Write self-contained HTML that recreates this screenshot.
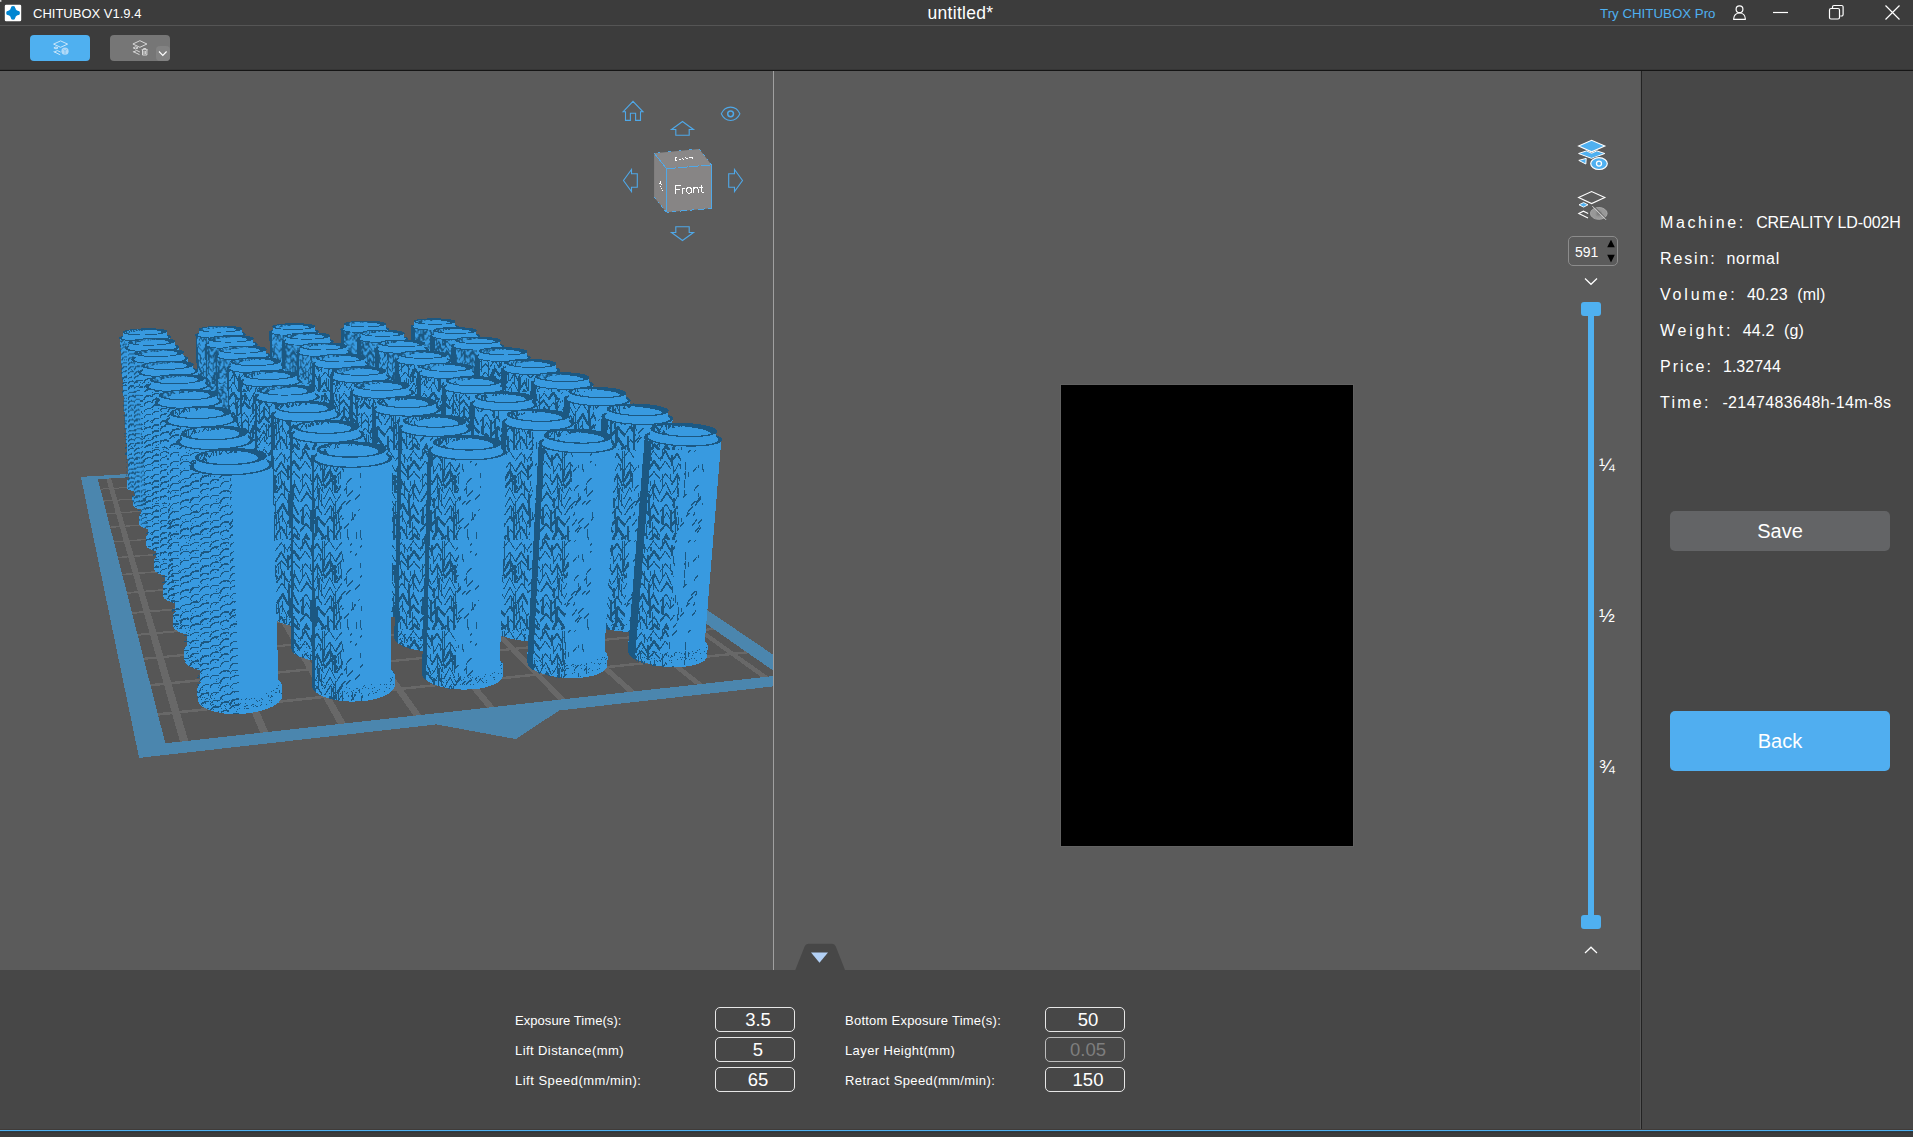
<!DOCTYPE html>
<html>
<head>
<meta charset="utf-8">
<title>CHITUBOX V1.9.4</title>
<style>
html,body{margin:0;padding:0;}
body{width:1913px;height:1137px;overflow:hidden;background:#5b5b5b;font-family:"Liberation Sans",sans-serif;color:#fff;position:relative;}
.abs{position:absolute;}
#titlebar{left:0;top:0;width:1913px;height:25px;background:#3c3c3c;}
#titleline{left:0;top:25px;width:1913px;height:1px;background:#555;}
#toolbar{left:0;top:26px;width:1913px;height:43px;background:#3c3c3c;}
#toolline{left:0;top:69px;width:1913px;height:2px;background:linear-gradient(#353535 0 50%,#151515 50% 100%);}
#apptitle{left:33px;top:6px;font-size:13px;line-height:15px;color:#fff;white-space:nowrap;}
#doctitle{left:860.5px;top:3px;width:200px;text-align:center;letter-spacing:0.3px;font-size:17.5px;line-height:21px;color:#fff;white-space:nowrap;}
#trypro{left:1600px;top:6px;font-size:13.3px;line-height:16px;color:#4fb0f0;white-space:nowrap;}
#btn1{left:30px;top:35px;width:60px;height:26px;border-radius:4px;background:#4fb0f0;}
#btn2{left:110px;top:35px;width:60px;height:26px;border-radius:4px;background:#767676;}
#btn2b{left:155.5px;top:46px;width:14.5px;height:15px;border-radius:4px;background:#828282;}
#view3d{left:0;top:71px;width:773px;height:899px;overflow:hidden;background:#5b5b5b;}
#divider{left:773px;top:71px;width:1px;height:899px;background:#a0a0a0;}
#slice{left:1061px;top:385px;width:292px;height:461px;background:#000;box-shadow:0 0 0 1px #626262;}
#rightpanel{left:1642px;top:71px;width:271px;height:1066px;background:#474747;}
#rightline{left:1640px;top:71px;width:2px;height:1059px;background:linear-gradient(90deg,#575757 0 50%,#232323 50% 100%);}
#bottompanel{left:0;top:970px;width:1640px;height:159px;background:#474747;}
#bottomblue{left:0;top:1129px;width:1913px;height:4px;background:linear-gradient(#403b38 0 25%,#4fb0f0 25% 50%,#2b3c47 50% 75%,#373635 75% 100%);}
#bottomdark{left:0;top:1133px;width:1913px;height:4px;background:#3c3c3c;}
.lbl{font-size:13px;line-height:16px;color:#fff;white-space:nowrap;}
.inp{width:78px;height:23px;border:1px solid #e6e6e6;border-radius:5px;font-size:18.5px;line-height:23px;text-align:center;color:#fff;}
.inp span{position:relative;left:3px;}
.info{left:1660px;font-size:16px;line-height:20px;color:#fff;white-space:nowrap;}
.info b{font-weight:normal;letter-spacing:1.7px;}
.frac{left:1599px;font-size:19px;line-height:20px;color:#fff;}
#save{left:1670px;top:511px;width:220px;height:40px;border-radius:5px;background:#636466;font-size:20px;line-height:40px;text-align:center;}
#back{left:1670px;top:711px;width:220px;height:60px;border-radius:5px;background:#50aef0;font-size:20px;line-height:60px;text-align:center;}
#spin{left:1568px;top:236px;width:48px;height:28px;border:1px solid #8c8c8c;border-radius:5px;}
#spin span{position:absolute;left:6px;top:7px;font-size:14px;line-height:16px;color:#fff;}
#track{left:1588px;top:309px;width:6px;height:613px;background:#4fb0f0;}
.handle{left:1581px;width:20px;height:14px;border-radius:3px;background:#4fb0f0;}
</style>
</head>
<body>
<div class="abs" id="view3d">
<svg class="abs" style="left:0;top:0" width="773" height="899" viewBox="0 71 773 899" shape-rendering="crispEdges">
<defs>
<pattern id="ma" width="60" height="90" patternUnits="userSpaceOnUse"><g fill="none" stroke="#1c5882"><path d="M-0.7 11.4l6.0 -10.8l5.8 10.9" stroke-width="1.8"/><path d="M-0.8 20.2l6.0 -9.1l5.9 8.3" stroke-width="1.0"/><path d="M-0.4 32.1l6.0 -8.3l6.5 8.0" stroke-width="1.0"/><path d="M-0.3 43.2l6.0 -10.6l5.8 12.1" stroke-width="1.0"/><path d="M0.8 51.9l6.0 -9.2l6.6 8.7" stroke-width="1.8"/><path d="M0.2 61.7l6.0 -7.7l5.3 9.3" stroke-width="1.0"/><path d="M0.8 73.1l6.0 -10.4l5.5 10.7" stroke-width="1.0"/><path d="M0.1 81.4l6.0 -7.5l6.9 8.3" stroke-width="1.8"/><path d="M0.4 95.4l6.0 -9.9l5.7 10.9" stroke-width="2.6"/><path d="M11.1 12.4l6.0 -8.6l5.2 8.5" stroke-width="1.8"/><path d="M12.8 24.3l6.0 -10.4l6.4 11.7" stroke-width="1.0"/><path d="M11.5 35.1l6.0 -10.6l5.1 11.4" stroke-width="1.8"/><path d="M12.4 44.2l6.0 -10.0l5.2 9.2" stroke-width="1.0"/><path d="M12.0 55.7l6.0 -10.5l5.4 12.0" stroke-width="1.0"/><path d="M11.0 65.1l6.0 -8.3l5.2 7.9" stroke-width="1.3"/><path d="M11.8 75.2l6.0 -7.8l6.9 8.0" stroke-width="2.6"/><path d="M12.3 89.9l6.0 -10.9l6.9 10.0" stroke-width="2.6"/><path d="M12.7 99.4l6.0 -10.2l5.1 9.8" stroke-width="1.0"/><path d="M23.2 8.2l6.0 -7.8l5.5 8.9" stroke-width="1.0"/><path d="M23.9 21.2l6.0 -9.2l5.7 9.5" stroke-width="1.0"/><path d="M23.8 31.4l6.0 -10.4l6.7 11.9" stroke-width="2.6"/><path d="M25.0 37.5l6.0 -8.1l6.7 9.6" stroke-width="2.6"/><path d="M23.8 48.9l6.0 -11.0l5.5 10.8" stroke-width="1.0"/><path d="M24.1 58.4l6.0 -11.0l5.5 10.0" stroke-width="1.0"/><path d="M24.5 65.4l6.0 -9.6l5.0 8.8" stroke-width="1.3"/><path d="M23.9 76.4l6.0 -9.7l6.5 9.2" stroke-width="1.3"/><path d="M24.7 89.4l6.0 -9.8l6.7 10.4" stroke-width="1.0"/><path d="M23.0 98.1l6.0 -9.7l5.6 9.9" stroke-width="1.0"/><path d="M35.3 10.8l6.0 -7.9l6.7 8.5" stroke-width="1.0"/><path d="M35.3 21.8l6.0 -9.5l6.2 10.3" stroke-width="1.8"/><path d="M35.2 28.3l6.0 -7.5l6.2 6.6" stroke-width="1.3"/><path d="M36.7 42.7l6.0 -9.8l5.2 9.0" stroke-width="1.8"/><path d="M36.0 52.3l6.0 -9.3l6.4 9.1" stroke-width="1.0"/><path d="M36.9 63.7l6.0 -9.3l5.3 10.5" stroke-width="2.6"/><path d="M35.7 76.1l6.0 -10.8l6.1 11.9" stroke-width="1.0"/><path d="M35.2 87.3l6.0 -10.4l6.8 11.7" stroke-width="1.8"/><path d="M36.5 97.5l6.0 -7.9l6.9 7.6" stroke-width="1.3"/><path d="M47.3 10.1l6.0 -9.2l6.3 8.3" stroke-width="1.0"/><path d="M48.0 20.2l6.0 -8.9l6.9 9.9" stroke-width="2.6"/><path d="M48.1 28.9l6.0 -7.1l6.9 8.4" stroke-width="1.3"/><path d="M48.4 44.0l6.0 -10.7l5.9 11.8" stroke-width="1.0"/><path d="M47.2 52.4l6.0 -10.5l5.6 10.4" stroke-width="1.3"/><path d="M47.4 65.0l6.0 -10.7l5.2 10.8" stroke-width="1.8"/><path d="M47.4 73.7l6.0 -7.6l5.8 6.9" stroke-width="2.6"/><path d="M48.3 85.2l6.0 -8.1l5.9 9.3" stroke-width="1.3"/><path d="M48.5 92.8l6.0 -7.6l6.7 6.8" stroke-width="2.6"/><path d="M22.5 0.7v12.9" stroke-width="1"/><path d="M24.5 14.0v11.8" stroke-width="1"/><path d="M17.5 22.8v21.2" stroke-width="1"/><path d="M57.5 81.9v11.1" stroke-width="1"/><path d="M1.5 65.5v8.3" stroke-width="2"/><path d="M11.5 4.7v11.5" stroke-width="2"/><path d="M22.5 10.8v18.2" stroke-width="1"/><path d="M23.5 19.2v15.9" stroke-width="1"/><path d="M25.5 85.4v12.4" stroke-width="1"/><path d="M2.5 23.8v14.7" stroke-width="1"/><path d="M50.5 6.7v4.7" stroke-width="2"/><path d="M16.5 69.8v12.2" stroke-width="2"/><path d="M46.5 75.7v13.6" stroke-width="1"/><path d="M20.5 14.2v6.3" stroke-width="1"/><path d="M21.5 44.4v11.2" stroke-width="1"/><path d="M15.5 68.8v17.4" stroke-width="2"/><path d="M13.5 15.9v8.4" stroke-width="1"/><path d="M39.5 71.4v9.0" stroke-width="1"/><path d="M14.5 84.9v20.9" stroke-width="1"/><path d="M44.5 4.1v8.9" stroke-width="1"/><path d="M44.5 30.9v16.8" stroke-width="1"/><path d="M32.5 25.9v15.0" stroke-width="1"/><path d="M23.5 27.8v8.2" stroke-width="1"/><path d="M2.5 0.4v8.8" stroke-width="1"/><path d="M34.5 64.7v21.7" stroke-width="1"/><path d="M52.5 71.6v15.3" stroke-width="1"/><path d="M34.5 25.0v17.9" stroke-width="2"/><path d="M43.5 78.5v4.8" stroke-width="2"/><path d="M40.5 81.9v7.3" stroke-width="1"/><path d="M48.5 44.2v15.8" stroke-width="2"/><path d="M13.5 47.7v10.1" stroke-width="2"/><path d="M9.5 88.9v13.1" stroke-width="1"/><path d="M21.5 87.2v7.2" stroke-width="2"/><path d="M27.5 75.6v18.2" stroke-width="2"/><path d="M38.5 61.3v12.1" stroke-width="1"/><path d="M18.5 38.1v12.1" stroke-width="2"/><path d="M38.5 25.9v7.6" stroke-width="1"/><path d="M31.5 57.3v13.5" stroke-width="1"/><path d="M30.5 12.7v18.8" stroke-width="1"/><path d="M24.5 0.8v21.8" stroke-width="1"/><path d="M49.5 57.5v20.3" stroke-width="2"/><path d="M36.5 86.2v6.6" stroke-width="1"/><path d="M53.5 42.6v7.1" stroke-width="1"/><path d="M18.5 47.2v11.0" stroke-width="1"/><path d="M36.5 64.0v16.2" stroke-width="1"/><path d="M35.5 51.4v18.0" stroke-width="1"/><path d="M32.5 67.2v4.4" stroke-width="1"/><path d="M24.5 34.4v4.4" stroke-width="1"/><path d="M14.5 60.3v8.8" stroke-width="2"/><path d="M47.5 14.7v15.1" stroke-width="2"/><path d="M48.5 49.8v16.0" stroke-width="1"/><path d="M22.5 36.7v5.3" stroke-width="1"/><path d="M52.5 34.8v9.2" stroke-width="2"/><path d="M2.5 57.3v17.7" stroke-width="2"/><path d="M42.5 60.5v11.4" stroke-width="1"/><path d="M8.5 88.3v12.9" stroke-width="2"/><path d="M22.5 26.3v5.4" stroke-width="1"/><path d="M33.5 71.6v19.9" stroke-width="2"/><path d="M10.5 24.3v4.7" stroke-width="1"/><path d="M33.5 72.9v16.4" stroke-width="1"/><path d="M50.5 31.0v4.5" stroke-width="1"/><path d="M37.5 89.7v20.1" stroke-width="2"/><path d="M54.5 29.9v8.4" stroke-width="1"/><path d="M33.5 56.0v18.7" stroke-width="1"/><path d="M41.5 28.9v9.6" stroke-width="1"/><path d="M10.5 60.0v21.1" stroke-width="2"/><path d="M40.5 21.0v8.4" stroke-width="1"/></g></pattern>
<pattern id="mb" width="50" height="70" patternUnits="userSpaceOnUse" patternTransform="scale(0.8)"><g fill="none" stroke="#1c5882"><path d="M0.1 13.0l6.0 -10.6l5.7 9.8" stroke-width="1.2"/><path d="M-0.4 20.7l6.0 -7.9l6.4 7.5" stroke-width="3.1"/><path d="M-0.7 33.7l6.0 -8.0l5.9 8.6" stroke-width="1.2"/><path d="M0.6 42.6l6.0 -8.0l5.8 7.1" stroke-width="1.6"/><path d="M0.6 52.4l6.0 -7.4l6.4 8.4" stroke-width="1.2"/><path d="M-0.5 67.5l6.0 -10.1l5.2 11.4" stroke-width="2.2"/><path d="M-0.8 75.4l6.0 -7.9l6.6 8.0" stroke-width="2.2"/><path d="M11.9 12.0l6.0 -10.9l5.6 12.2" stroke-width="1.2"/><path d="M12.1 21.7l6.0 -10.6l5.3 12.1" stroke-width="1.6"/><path d="M12.4 31.4l6.0 -9.8l5.0 9.0" stroke-width="1.2"/><path d="M12.4 38.9l6.0 -9.1l5.9 10.6" stroke-width="1.6"/><path d="M12.6 51.3l6.0 -10.1l6.6 9.5" stroke-width="3.1"/><path d="M12.8 60.0l6.0 -10.0l5.9 11.6" stroke-width="1.2"/><path d="M11.7 69.3l6.0 -10.5l5.1 11.2" stroke-width="1.2"/><path d="M24.4 9.2l6.0 -7.8l5.7 7.6" stroke-width="1.2"/><path d="M23.2 18.0l6.0 -7.8l7.0 9.5" stroke-width="2.2"/><path d="M25.0 27.9l6.0 -8.1l5.4 7.2" stroke-width="1.2"/><path d="M24.1 38.6l6.0 -8.8l6.6 8.6" stroke-width="3.1"/><path d="M24.1 48.3l6.0 -9.2l5.7 11.0" stroke-width="1.2"/><path d="M23.8 59.1l6.0 -10.6l5.1 10.2" stroke-width="1.6"/><path d="M23.3 66.5l6.0 -9.7l5.2 8.7" stroke-width="1.2"/><path d="M24.4 78.9l6.0 -9.7l5.7 10.7" stroke-width="1.2"/><path d="M35.6 9.7l6.0 -9.2l5.6 9.0" stroke-width="3.1"/><path d="M35.6 21.7l6.0 -8.8l5.1 8.0" stroke-width="1.2"/><path d="M35.1 34.6l6.0 -8.8l6.1 8.4" stroke-width="2.2"/><path d="M36.2 45.0l6.0 -10.9l6.7 9.9" stroke-width="2.2"/><path d="M36.9 56.8l6.0 -10.1l6.0 11.5" stroke-width="1.6"/><path d="M35.5 67.6l6.0 -9.8l6.3 10.8" stroke-width="1.2"/><path d="M47.1 12.3l6.0 -9.1l5.9 11.0" stroke-width="1.6"/><path d="M47.4 19.7l6.0 -8.0l6.6 7.2" stroke-width="1.2"/><path d="M47.3 30.5l6.0 -9.6l6.8 11.0" stroke-width="1.2"/><path d="M47.1 41.4l6.0 -8.8l5.4 9.3" stroke-width="1.2"/><path d="M47.2 54.7l6.0 -10.5l6.1 9.6" stroke-width="3.1"/><path d="M48.2 67.3l6.0 -10.6l6.0 10.0" stroke-width="3.1"/><path d="M48.1 74.0l6.0 -8.8l6.7 9.6" stroke-width="1.2"/><path d="M17.5 28.2v6.4" stroke-width="1"/><path d="M7.5 20.2v13.6" stroke-width="1"/><path d="M19.5 20.2v7.0" stroke-width="1"/><path d="M41.5 39.1v6.7" stroke-width="2"/><path d="M48.5 49.6v15.4" stroke-width="2"/><path d="M2.5 16.8v11.0" stroke-width="1"/><path d="M30.5 17.0v11.3" stroke-width="2"/><path d="M10.5 34.7v12.8" stroke-width="1"/><path d="M17.5 53.0v17.6" stroke-width="1"/><path d="M21.5 54.4v8.0" stroke-width="2"/><path d="M16.5 2.3v20.1" stroke-width="1"/><path d="M16.5 41.5v15.9" stroke-width="2"/><path d="M43.5 43.2v17.9" stroke-width="1"/><path d="M39.5 65.4v8.7" stroke-width="1"/><path d="M29.5 47.0v5.6" stroke-width="2"/><path d="M1.5 26.0v19.4" stroke-width="1"/><path d="M24.5 3.0v5.0" stroke-width="1"/><path d="M24.5 8.8v21.8" stroke-width="1"/><path d="M46.5 13.0v16.4" stroke-width="2"/><path d="M46.5 30.7v10.6" stroke-width="2"/><path d="M13.5 47.9v9.1" stroke-width="1"/><path d="M8.5 53.1v13.3" stroke-width="1"/><path d="M19.5 64.4v11.6" stroke-width="2"/><path d="M2.5 3.8v5.9" stroke-width="2"/><path d="M0.5 52.7v12.8" stroke-width="1"/><path d="M40.5 26.1v9.2" stroke-width="1"/><path d="M30.5 17.0v6.5" stroke-width="1"/><path d="M47.5 4.5v5.8" stroke-width="1"/><path d="M6.5 69.8v5.1" stroke-width="2"/><path d="M29.5 19.0v10.2" stroke-width="1"/><path d="M10.5 53.3v14.0" stroke-width="1"/><path d="M48.5 59.7v16.9" stroke-width="2"/><path d="M49.5 67.1v17.3" stroke-width="1"/><path d="M44.5 3.8v17.3" stroke-width="2"/><path d="M6.5 0.9v8.6" stroke-width="2"/><path d="M10.5 37.0v14.1" stroke-width="1"/><path d="M33.5 39.7v19.8" stroke-width="1"/><path d="M35.5 39.4v16.4" stroke-width="1"/><path d="M8.5 3.6v7.4" stroke-width="1"/><path d="M7.5 42.4v12.7" stroke-width="1"/><path d="M11.5 9.8v6.9" stroke-width="1"/><path d="M30.5 55.5v7.1" stroke-width="1"/><path d="M36.5 17.6v16.0" stroke-width="1"/><path d="M20.5 2.6v8.8" stroke-width="2"/><path d="M10.5 69.6v19.5" stroke-width="1"/><path d="M15.5 44.7v7.6" stroke-width="1"/><path d="M49.5 64.8v10.0" stroke-width="2"/><path d="M24.5 22.3v14.3" stroke-width="1"/><path d="M18.5 36.1v11.6" stroke-width="1"/><path d="M42.5 64.2v16.8" stroke-width="1"/><path d="M24.5 7.6v11.8" stroke-width="1"/><path d="M16.5 14.8v12.9" stroke-width="2"/></g></pattern>
<pattern id="mc" width="40" height="60" patternUnits="userSpaceOnUse" patternTransform="scale(0.64)"><g fill="none" stroke="#1c5882"><path d="M0.1 9.0l6.0 -8.4l6.3 8.0" stroke-width="3.7"/><path d="M-0.9 19.3l6.0 -9.3l6.1 10.1" stroke-width="2.6"/><path d="M-0.2 30.6l6.0 -9.9l5.5 9.3" stroke-width="1.4"/><path d="M-0.1 42.1l6.0 -9.4l6.0 9.1" stroke-width="1.4"/><path d="M-0.2 52.3l6.0 -9.0l6.0 8.2" stroke-width="1.4"/><path d="M-0.6 62.9l6.0 -8.5l5.9 9.3" stroke-width="1.9"/><path d="M11.1 9.0l6.0 -8.5l5.5 8.3" stroke-width="1.4"/><path d="M12.3 17.9l6.0 -8.8l6.8 10.2" stroke-width="3.7"/><path d="M12.1 29.9l6.0 -9.6l6.7 11.5" stroke-width="2.6"/><path d="M12.5 39.5l6.0 -8.6l6.2 10.3" stroke-width="1.4"/><path d="M11.7 52.4l6.0 -10.3l5.1 9.7" stroke-width="3.7"/><path d="M12.6 60.6l6.0 -8.2l6.0 10.0" stroke-width="1.4"/><path d="M23.9 9.5l6.0 -7.9l6.3 7.5" stroke-width="1.4"/><path d="M24.1 21.1l6.0 -9.4l5.0 9.1" stroke-width="1.4"/><path d="M23.3 28.6l6.0 -7.5l5.8 7.4" stroke-width="1.4"/><path d="M23.9 42.7l6.0 -10.0l6.4 11.5" stroke-width="2.6"/><path d="M24.6 53.0l6.0 -8.9l6.7 9.2" stroke-width="1.4"/><path d="M24.9 64.4l6.0 -8.0l6.8 9.2" stroke-width="1.4"/><path d="M35.5 10.6l6.0 -7.6l5.8 7.1" stroke-width="2.6"/><path d="M36.9 23.0l6.0 -9.8l6.3 10.2" stroke-width="1.4"/><path d="M35.3 35.1l6.0 -9.8l5.4 11.1" stroke-width="1.9"/><path d="M36.4 44.4l6.0 -7.5l5.8 8.8" stroke-width="1.4"/><path d="M35.9 54.4l6.0 -9.2l6.6 10.2" stroke-width="1.9"/><path d="M37.0 65.2l6.0 -8.0l6.8 7.5" stroke-width="1.4"/><path d="M12.5 4.0v17.6" stroke-width="1"/><path d="M28.5 1.9v13.1" stroke-width="2"/><path d="M37.5 35.9v12.5" stroke-width="1"/><path d="M6.5 54.2v19.8" stroke-width="2"/><path d="M11.5 57.6v14.0" stroke-width="1"/><path d="M6.5 7.3v18.7" stroke-width="2"/><path d="M13.5 55.2v18.0" stroke-width="2"/><path d="M11.5 52.0v11.1" stroke-width="2"/><path d="M26.5 8.1v10.1" stroke-width="1"/><path d="M17.5 21.5v21.4" stroke-width="1"/><path d="M13.5 29.0v7.7" stroke-width="1"/><path d="M2.5 41.4v10.1" stroke-width="1"/><path d="M34.5 41.6v5.6" stroke-width="1"/><path d="M29.5 59.6v4.3" stroke-width="1"/><path d="M1.5 59.7v19.0" stroke-width="1"/><path d="M33.5 43.6v4.4" stroke-width="1"/><path d="M25.5 3.6v7.5" stroke-width="2"/><path d="M24.5 58.9v21.1" stroke-width="2"/><path d="M14.5 15.2v7.3" stroke-width="1"/><path d="M12.5 50.7v15.4" stroke-width="1"/><path d="M5.5 6.8v14.0" stroke-width="1"/><path d="M18.5 44.3v20.7" stroke-width="1"/><path d="M5.5 1.4v7.1" stroke-width="1"/><path d="M15.5 40.8v18.8" stroke-width="2"/><path d="M0.5 58.7v21.5" stroke-width="1"/><path d="M38.5 55.3v16.9" stroke-width="1"/><path d="M38.5 35.1v7.1" stroke-width="1"/><path d="M31.5 48.8v4.2" stroke-width="2"/><path d="M1.5 26.1v9.1" stroke-width="1"/><path d="M33.5 14.3v11.6" stroke-width="1"/><path d="M5.5 25.4v17.3" stroke-width="1"/><path d="M30.5 14.0v21.2" stroke-width="1"/><path d="M6.5 17.7v9.8" stroke-width="1"/><path d="M32.5 37.6v4.7" stroke-width="1"/><path d="M12.5 12.3v8.3" stroke-width="1"/><path d="M21.5 32.0v20.4" stroke-width="2"/><path d="M0.5 4.9v13.5" stroke-width="2"/><path d="M2.5 55.9v10.9" stroke-width="1"/><path d="M2.5 50.7v19.9" stroke-width="2"/><path d="M30.5 20.8v15.1" stroke-width="2"/><path d="M23.5 16.3v15.9" stroke-width="1"/><path d="M15.5 16.2v7.4" stroke-width="1"/></g></pattern>
<pattern id="la" width="60" height="90" patternUnits="userSpaceOnUse"><g fill="none" stroke="#1c5882"><path d="M9 60.9l3.2 -3.6" stroke-width="1.3"/><path d="M42 54.7l3.3 -3.8" stroke-width="1.3"/><path d="M36 52.3l4.9 -5.7" stroke-width="1.3"/><path d="M47 46.8l5.7 -6.5" stroke-width="1.3"/><path d="M24.5 39.7v5.6" stroke-width="1"/><path d="M3.5 62.1v6.3" stroke-width="1"/><path d="M32 75.4l4.9 -5.6" stroke-width="1.3"/><path d="M31 55.9l4.5 -5.1" stroke-width="1.3"/><path d="M15.5 55.0v7.8" stroke-width="1"/><path d="M12.5 45.9v7.2" stroke-width="1"/><path d="M25.5 12.0v7.6" stroke-width="1"/><path d="M4.5 53.0v6.4" stroke-width="1"/><path d="M35 55.3l6.1 -7.0" stroke-width="1.3"/><path d="M17.5 74.3v6.5" stroke-width="1"/><path d="M34 40.2l4.5 -5.1" stroke-width="1.3"/><path d="M43.5 18.7v3.7" stroke-width="1"/><path d="M37 82.3l4.5 -5.1" stroke-width="1.3"/><path d="M23 47.5l3.4 -3.8" stroke-width="1.3"/><path d="M55 15.5l1.8 -2.0" stroke-width="1.3"/><path d="M56.5 82.1v7.1" stroke-width="1"/><path d="M56.5 84.6v3.5" stroke-width="1"/><path d="M42.5 14.1v5.6" stroke-width="1"/><path d="M38.5 43.2v3.6" stroke-width="1"/><path d="M24 24.8l2.0 -2.2" stroke-width="1.3"/><path d="M0 37.6l3.0 -3.4" stroke-width="1.3"/><path d="M26 66.8l3.5 -4.0" stroke-width="1.3"/><path d="M53.5 66.9v3.4" stroke-width="1"/><path d="M51 70.4l5.3 -6.0" stroke-width="1.3"/><path d="M13.5 57.8v3.6" stroke-width="1"/><path d="M10 80.5l4.9 -5.6" stroke-width="1.3"/><path d="M48.5 87.1v8.4" stroke-width="1"/><path d="M0.5 22.9v4.8" stroke-width="1"/><path d="M27 63.2l5.9 -6.8" stroke-width="1.3"/><path d="M4 57.4l3.7 -4.3" stroke-width="1.3"/><path d="M17.5 62.1v3.1" stroke-width="1"/><path d="M50 5.4l2.3 -2.7" stroke-width="1.3"/><path d="M9.5 12.2v7.0" stroke-width="1"/><path d="M47.5 79.1v8.7" stroke-width="1"/><path d="M8 42.2l5.3 -6.0" stroke-width="1.3"/><path d="M50 12.4l1.4 -1.7" stroke-width="1.3"/><path d="M17 81.0l2.1 -2.4" stroke-width="1.3"/><path d="M12 6.0l5.1 -5.8" stroke-width="1.3"/><path d="M28 2.8l3.9 -4.4" stroke-width="1.3"/><path d="M38.5 14.6v3.8" stroke-width="1"/><path d="M44 79.0l4.8 -5.5" stroke-width="1.3"/><path d="M35 81.5l5.3 -6.0" stroke-width="1.3"/><path d="M7.5 67.6v6.5" stroke-width="1"/><path d="M9 69.9l4.8 -5.5" stroke-width="1.3"/><path d="M25.5 20.5v8.2" stroke-width="1"/><path d="M21.5 67.6v3.9" stroke-width="1"/><path d="M28.5 21.6v5.4" stroke-width="1"/><path d="M6.5 3.6v6.6" stroke-width="1"/><path d="M34.5 62.3v2.6" stroke-width="1"/><path d="M44 41.0l2.4 -2.8" stroke-width="1.3"/><path d="M1 89.5l5.5 -6.3" stroke-width="1.3"/><path d="M33 65.4l1.5 -1.7" stroke-width="1.3"/><path d="M54.5 63.7v2.4" stroke-width="1"/><path d="M46 34.2l5.4 -6.2" stroke-width="1.3"/><path d="M14.5 22.9v3.3" stroke-width="1"/><path d="M52.5 61.9v8.4" stroke-width="1"/><path d="M7.5 57.0v4.0" stroke-width="1"/><path d="M55 49.8l5.4 -6.2" stroke-width="1.3"/><path d="M18.5 66.5v8.5" stroke-width="1"/><path d="M1.5 65.5v5.8" stroke-width="1"/><path d="M38 73.9l5.4 -6.2" stroke-width="1.3"/><path d="M13 87.5l3.6 -4.1" stroke-width="1.3"/><path d="M46 55.0l4.3 -5.0" stroke-width="1.3"/><path d="M46.5 36.0v7.7" stroke-width="1"/><path d="M34 2.1l5.8 -6.6" stroke-width="1.3"/><path d="M33 21.4l3.5 -4.0" stroke-width="1.3"/><path d="M58 61.1l1.8 -2.0" stroke-width="1.3"/><path d="M5 45.0l2.5 -2.9" stroke-width="1.3"/><path d="M0.5 80.4v7.2" stroke-width="1"/><path d="M20 77.0l3.8 -4.4" stroke-width="1.3"/><path d="M2.5 65.1v3.3" stroke-width="1"/><path d="M24.5 29.9v7.9" stroke-width="1"/><path d="M0 7.4l4.0 -4.6" stroke-width="1.3"/></g></pattern>
<pattern id="lb" width="50" height="70" patternUnits="userSpaceOnUse" patternTransform="scale(0.8)"><g fill="none" stroke="#1c5882"><path d="M45 31.9l4.9 -5.6" stroke-width="1.3"/><path d="M13 48.2l5.9 -6.7" stroke-width="1.3"/><path d="M41 26.8l5.8 -6.6" stroke-width="1.3"/><path d="M7 34.2l2.0 -2.3" stroke-width="1.3"/><path d="M1 3.1l6.1 -7.0" stroke-width="1.3"/><path d="M38.5 36.6v3.3" stroke-width="1"/><path d="M46.5 40.7v6.7" stroke-width="1"/><path d="M42.5 40.1v7.8" stroke-width="1"/><path d="M23 14.2l2.5 -2.8" stroke-width="1.3"/><path d="M32.5 33.2v3.8" stroke-width="1"/><path d="M13 53.0l4.0 -4.6" stroke-width="1.3"/><path d="M29.5 37.0v7.0" stroke-width="1"/><path d="M30 58.3l2.0 -2.3" stroke-width="1.3"/><path d="M6 33.7l3.1 -3.5" stroke-width="1.3"/><path d="M42.5 49.0v2.6" stroke-width="1"/><path d="M7 69.1l4.2 -4.8" stroke-width="1.3"/><path d="M45.5 26.8v2.1" stroke-width="1"/><path d="M39.5 27.6v7.7" stroke-width="1"/><path d="M47 62.2l2.3 -2.6" stroke-width="1.3"/><path d="M20 45.3l5.7 -6.5" stroke-width="1.3"/><path d="M36 16.6l2.5 -2.8" stroke-width="1.3"/><path d="M9.5 40.5v6.5" stroke-width="1"/><path d="M30.5 31.8v2.6" stroke-width="1"/><path d="M2 22.9l4.8 -5.4" stroke-width="1.3"/><path d="M34.5 6.6v5.2" stroke-width="1"/><path d="M11 12.7l3.2 -3.6" stroke-width="1.3"/><path d="M2 48.9l4.5 -5.2" stroke-width="1.3"/><path d="M42.5 47.8v4.4" stroke-width="1"/><path d="M40 52.4l5.5 -6.3" stroke-width="1.3"/><path d="M24.5 43.9v3.1" stroke-width="1"/><path d="M18 54.0l5.4 -6.1" stroke-width="1.3"/><path d="M47.5 37.8v4.9" stroke-width="1"/><path d="M2.5 28.0v6.2" stroke-width="1"/><path d="M26.5 9.9v5.2" stroke-width="1"/><path d="M43 39.6l4.6 -5.3" stroke-width="1.3"/><path d="M37.5 0.6v5.4" stroke-width="1"/><path d="M21 10.6l4.3 -5.0" stroke-width="1.3"/><path d="M24.5 60.3v3.8" stroke-width="1"/><path d="M38.5 54.7v5.9" stroke-width="1"/><path d="M3.5 9.6v3.0" stroke-width="1"/><path d="M3.5 52.6v7.6" stroke-width="1"/><path d="M15.5 17.7v8.9" stroke-width="1"/><path d="M18.5 53.0v6.1" stroke-width="1"/><path d="M12 28.8l5.9 -6.8" stroke-width="1.3"/><path d="M29 50.9l6.2 -7.1" stroke-width="1.3"/><path d="M6 24.9l4.7 -5.4" stroke-width="1.3"/><path d="M32.5 19.9v8.5" stroke-width="1"/><path d="M48.5 49.7v6.6" stroke-width="1"/><path d="M8 55.4l4.0 -4.5" stroke-width="1.3"/><path d="M38 16.8l2.8 -3.2" stroke-width="1.3"/><path d="M21 13.9l1.9 -2.2" stroke-width="1.3"/><path d="M20 53.5l5.5 -6.2" stroke-width="1.3"/><path d="M9.5 30.8v4.3" stroke-width="1"/><path d="M42 19.2l4.1 -4.7" stroke-width="1.3"/><path d="M19 46.9l2.9 -3.3" stroke-width="1.3"/><path d="M30.5 23.4v7.2" stroke-width="1"/><path d="M28.5 49.1v6.5" stroke-width="1"/><path d="M9.5 34.3v3.1" stroke-width="1"/><path d="M17 44.5l5.4 -6.2" stroke-width="1.3"/></g></pattern>
<pattern id="lc" width="40" height="60" patternUnits="userSpaceOnUse" patternTransform="scale(0.64)"><g fill="none" stroke="#1c5882"><path d="M1.5 52.3v7.1" stroke-width="1"/><path d="M21 0.4l2.0 -2.3" stroke-width="1.3"/><path d="M10.5 6.3v3.0" stroke-width="1"/><path d="M21.5 22.1v2.4" stroke-width="1"/><path d="M16 23.5l3.0 -3.4" stroke-width="1.3"/><path d="M19 24.6l3.7 -4.2" stroke-width="1.3"/><path d="M16.5 57.7v8.0" stroke-width="1"/><path d="M2 35.9l5.3 -6.1" stroke-width="1.3"/><path d="M16.5 33.7v4.4" stroke-width="1"/><path d="M39 59.5l2.4 -2.7" stroke-width="1.3"/><path d="M2 43.3l3.7 -4.2" stroke-width="1.3"/><path d="M30 38.0l5.9 -6.7" stroke-width="1.3"/><path d="M11 51.6l2.3 -2.6" stroke-width="1.3"/><path d="M2 8.7l2.2 -2.5" stroke-width="1.3"/><path d="M5.5 3.7v2.5" stroke-width="1"/><path d="M15 7.4l3.7 -4.2" stroke-width="1.3"/><path d="M26 37.8l4.1 -4.7" stroke-width="1.3"/><path d="M27 18.6l5.5 -6.3" stroke-width="1.3"/><path d="M31 31.1l4.0 -4.5" stroke-width="1.3"/><path d="M37.5 47.1v3.8" stroke-width="1"/><path d="M31.5 52.8v2.9" stroke-width="1"/><path d="M15 35.4l5.4 -6.2" stroke-width="1.3"/><path d="M19.5 6.1v7.6" stroke-width="1"/><path d="M4 50.6l1.5 -1.7" stroke-width="1.3"/><path d="M13 60.0l3.3 -3.8" stroke-width="1.3"/><path d="M15.5 5.1v3.5" stroke-width="1"/><path d="M15 35.5l4.8 -5.5" stroke-width="1.3"/><path d="M3 23.2l4.9 -5.6" stroke-width="1.3"/><path d="M15.5 28.8v7.0" stroke-width="1"/><path d="M18 33.8l3.3 -3.8" stroke-width="1.3"/><path d="M2.5 29.7v4.8" stroke-width="1"/><path d="M24.5 36.8v8.4" stroke-width="1"/><path d="M4.5 53.9v2.9" stroke-width="1"/><path d="M37.5 54.9v5.2" stroke-width="1"/><path d="M35.5 16.2v8.2" stroke-width="1"/><path d="M33.5 52.9v2.3" stroke-width="1"/><path d="M10 29.2l2.0 -2.3" stroke-width="1.3"/><path d="M3.5 40.5v2.1" stroke-width="1"/><path d="M7.5 14.7v5.8" stroke-width="1"/><path d="M15.5 48.7v7.8" stroke-width="1"/><path d="M6.5 45.3v7.6" stroke-width="1"/><path d="M27 42.9l3.9 -4.4" stroke-width="1.3"/><path d="M13 37.1l2.5 -2.9" stroke-width="1.3"/><path d="M10 6.4l3.0 -3.4" stroke-width="1.3"/><path d="M27.5 18.2v8.3" stroke-width="1"/><path d="M13.5 57.2v8.1" stroke-width="1"/><path d="M33.5 44.7v6.0" stroke-width="1"/><path d="M15.5 44.1v7.6" stroke-width="1"/></g></pattern>
<pattern id="na" width="60" height="90" patternUnits="userSpaceOnUse"><g fill="none" stroke="#1c5882"><path d="M0.0 10.5q1.5 -6.6 9.0 -5.2" stroke-width="1.0"/><path d="M0.0 15.0q1.5 -4.0 9.0 -3.8" stroke-width="1.0"/><path d="M0.0 24.1q1.5 -4.3 9.0 -4.0" stroke-width="1.0"/><path d="M0.0 32.7q1.5 -5.0 9.0 -3.7" stroke-width="1.0"/><path d="M0.0 40.6q1.5 -5.2 9.0 -4.5" stroke-width="1.6"/><path d="M0.0 46.9q1.5 -4.9 9.0 -4.8" stroke-width="1.3"/><path d="M0.0 54.4q1.5 -4.8 9.0 -4.4" stroke-width="1.6"/><path d="M0.0 59.8q1.5 -4.1 9.0 -2.5" stroke-width="1.0"/><path d="M0.0 68.9q1.5 -4.8 9.0 -3.9" stroke-width="1.0"/><path d="M0.0 78.2q1.5 -7.0 9.0 -6.6" stroke-width="1.0"/><path d="M0.0 83.4q1.5 -6.0 9.0 -4.4" stroke-width="1.6"/><path d="M0.0 89.2q1.5 -4.4 9.0 -4.0" stroke-width="1.0"/><path d="M10.0 6.2q1.5 -4.1 9.0 -3.4" stroke-width="1.0"/><path d="M10.0 14.1q1.5 -4.6 9.0 -3.8" stroke-width="1.0"/><path d="M10.0 20.0q1.5 -4.0 9.0 -2.4" stroke-width="1.0"/><path d="M10.0 27.7q1.5 -5.4 9.0 -4.3" stroke-width="1.3"/><path d="M10.0 35.8q1.5 -5.6 9.0 -4.6" stroke-width="1.6"/><path d="M10.0 41.6q1.5 -4.1 9.0 -2.6" stroke-width="1.0"/><path d="M10.0 52.7q1.5 -6.7 9.0 -5.0" stroke-width="1.6"/><path d="M10.0 60.1q1.5 -6.1 9.0 -6.1" stroke-width="1.0"/><path d="M10.0 64.8q1.5 -4.1 9.0 -2.5" stroke-width="1.3"/><path d="M10.0 71.7q1.5 -4.6 9.0 -4.1" stroke-width="1.0"/><path d="M10.0 81.4q1.5 -5.8 9.0 -5.2" stroke-width="1.6"/><path d="M10.0 88.4q1.5 -4.5 9.0 -4.4" stroke-width="1.6"/><path d="M10.0 96.0q1.5 -6.1 9.0 -5.6" stroke-width="1.0"/><path d="M20.0 6.9q1.5 -4.7 9.0 -4.3" stroke-width="1.0"/><path d="M20.0 16.5q1.5 -5.8 9.0 -4.4" stroke-width="1.6"/><path d="M20.0 21.5q1.5 -4.2 9.0 -3.2" stroke-width="1.0"/><path d="M20.0 31.6q1.5 -6.7 9.0 -5.8" stroke-width="1.6"/><path d="M20.0 36.5q1.5 -4.2 9.0 -2.4" stroke-width="1.6"/><path d="M20.0 43.3q1.5 -4.7 9.0 -4.5" stroke-width="1.0"/><path d="M20.0 51.3q1.5 -5.2 9.0 -4.7" stroke-width="1.3"/><path d="M20.0 60.7q1.5 -6.7 9.0 -5.9" stroke-width="1.0"/><path d="M20.0 67.0q1.5 -4.4 9.0 -3.7" stroke-width="1.6"/><path d="M20.0 76.7q1.5 -5.4 9.0 -5.4" stroke-width="1.6"/><path d="M20.0 84.8q1.5 -6.7 9.0 -6.1" stroke-width="1.6"/><path d="M20.0 90.9q1.5 -4.1 9.0 -3.8" stroke-width="1.0"/><path d="M30.0 6.7q1.5 -6.2 9.0 -6.1" stroke-width="1.3"/><path d="M30.0 11.8q1.5 -5.3 9.0 -5.1" stroke-width="1.6"/><path d="M30.0 19.1q1.5 -5.1 9.0 -3.5" stroke-width="1.0"/><path d="M30.0 27.1q1.5 -6.3 9.0 -4.7" stroke-width="1.3"/><path d="M30.0 33.4q1.5 -5.3 9.0 -3.3" stroke-width="1.6"/><path d="M30.0 41.2q1.5 -4.6 9.0 -3.2" stroke-width="1.0"/><path d="M30.0 48.8q1.5 -4.5 9.0 -3.3" stroke-width="1.0"/><path d="M30.0 57.6q1.5 -5.3 9.0 -4.1" stroke-width="1.0"/><path d="M30.0 67.6q1.5 -6.9 9.0 -5.1" stroke-width="1.0"/><path d="M30.0 75.4q1.5 -6.2 9.0 -5.1" stroke-width="1.0"/><path d="M30.0 81.8q1.5 -6.2 9.0 -4.6" stroke-width="1.3"/><path d="M30.0 88.2q1.5 -6.1 9.0 -6.1" stroke-width="1.3"/><path d="M40.0 6.5q1.5 -4.6 9.0 -3.5" stroke-width="1.3"/><path d="M40.0 15.2q1.5 -6.8 9.0 -6.2" stroke-width="1.6"/><path d="M40.0 20.7q1.5 -4.4 9.0 -4.2" stroke-width="1.6"/><path d="M40.0 28.2q1.5 -5.3 9.0 -3.8" stroke-width="1.6"/><path d="M40.0 37.4q1.5 -6.5 9.0 -6.1" stroke-width="1.0"/><path d="M40.0 44.2q1.5 -4.4 9.0 -3.3" stroke-width="1.6"/><path d="M40.0 53.4q1.5 -6.6 9.0 -6.0" stroke-width="1.6"/><path d="M40.0 60.9q1.5 -5.4 9.0 -5.3" stroke-width="1.3"/><path d="M40.0 69.7q1.5 -5.9 9.0 -4.7" stroke-width="1.0"/><path d="M40.0 77.0q1.5 -6.0 9.0 -5.0" stroke-width="1.6"/><path d="M40.0 84.5q1.5 -5.2 9.0 -3.3" stroke-width="1.3"/><path d="M40.0 93.4q1.5 -5.6 9.0 -4.3" stroke-width="1.0"/><path d="M50.0 6.7q1.5 -5.5 9.0 -4.4" stroke-width="1.0"/><path d="M50.0 15.8q1.5 -5.7 9.0 -4.2" stroke-width="1.0"/><path d="M50.0 22.4q1.5 -5.5 9.0 -3.6" stroke-width="1.3"/><path d="M50.0 30.7q1.5 -5.8 9.0 -4.6" stroke-width="1.0"/><path d="M50.0 37.6q1.5 -5.7 9.0 -4.0" stroke-width="1.3"/><path d="M50.0 43.7q1.5 -4.7 9.0 -3.1" stroke-width="1.0"/><path d="M50.0 49.6q1.5 -4.4 9.0 -3.9" stroke-width="1.3"/><path d="M50.0 58.3q1.5 -5.6 9.0 -5.4" stroke-width="1.0"/><path d="M50.0 64.8q1.5 -4.2 9.0 -3.2" stroke-width="1.3"/><path d="M50.0 75.4q1.5 -6.7 9.0 -6.3" stroke-width="1.6"/><path d="M50.0 78.9q1.5 -4.1 9.0 -3.8" stroke-width="1.6"/><path d="M50.0 87.7q1.5 -4.9 9.0 -3.6" stroke-width="1.6"/><path d="M7 41.5h1" stroke-width="1"/><path d="M15 13.5h1" stroke-width="1"/><path d="M11 75.5h1" stroke-width="1"/><path d="M40 22.5h1" stroke-width="1"/><path d="M31 63.5h1" stroke-width="1"/><path d="M5 5.5h1" stroke-width="1"/><path d="M14 89.5h1" stroke-width="1"/><path d="M35 32.5h1" stroke-width="1"/><path d="M32 72.5h1" stroke-width="1"/><path d="M11 60.5h1" stroke-width="1"/><path d="M35 17.5h1" stroke-width="1"/><path d="M47 88.5h1" stroke-width="1"/><path d="M58 5.5h1" stroke-width="1"/><path d="M36 51.5h1" stroke-width="1"/><path d="M14 65.5h1" stroke-width="1"/><path d="M9 0.5h1" stroke-width="1"/><path d="M12 37.5h1" stroke-width="1"/><path d="M22 25.5h1" stroke-width="1"/><path d="M9 12.5h1" stroke-width="1"/><path d="M36 19.5h1" stroke-width="1"/><path d="M54 77.5h1" stroke-width="1"/><path d="M15 27.5h1" stroke-width="1"/><path d="M27 68.5h1" stroke-width="1"/><path d="M47 63.5h1" stroke-width="1"/><path d="M45 76.5h1" stroke-width="1"/><path d="M24 9.5h1" stroke-width="1"/><path d="M41 88.5h1" stroke-width="1"/><path d="M33 79.5h1" stroke-width="1"/><path d="M12 73.5h1" stroke-width="1"/><path d="M44 56.5h1" stroke-width="1"/><path d="M4 86.5h1" stroke-width="1"/><path d="M12 10.5h1" stroke-width="1"/><path d="M19 61.5h1" stroke-width="1"/><path d="M46 5.5h1" stroke-width="1"/><path d="M19 51.5h1" stroke-width="1"/><path d="M14 85.5h1" stroke-width="1"/><path d="M11 34.5h1" stroke-width="1"/><path d="M36 63.5h1" stroke-width="1"/><path d="M18 45.5h1" stroke-width="1"/><path d="M6 2.5h1" stroke-width="1"/><path d="M35 64.5h1" stroke-width="1"/><path d="M8 50.5h1" stroke-width="1"/><path d="M21 15.5h1" stroke-width="1"/><path d="M27 83.5h1" stroke-width="1"/><path d="M55 42.5h1" stroke-width="1"/><path d="M2 9.5h1" stroke-width="1"/><path d="M5 88.5h1" stroke-width="1"/><path d="M19 46.5h1" stroke-width="1"/><path d="M23 73.5h1" stroke-width="1"/><path d="M7 77.5h1" stroke-width="1"/><path d="M5 69.5h1" stroke-width="1"/><path d="M26 60.5h1" stroke-width="1"/><path d="M31 72.5h1" stroke-width="1"/><path d="M50 35.5h1" stroke-width="1"/><path d="M22 59.5h1" stroke-width="1"/><path d="M18 5.5h1" stroke-width="1"/><path d="M9 15.5h1" stroke-width="1"/><path d="M8 3.5h1" stroke-width="1"/><path d="M49 41.5h1" stroke-width="1"/><path d="M34 26.5h1" stroke-width="1"/><path d="M52 69.5h1" stroke-width="1"/><path d="M38 9.5h1" stroke-width="1"/><path d="M24 47.5h1" stroke-width="1"/><path d="M27 44.5h1" stroke-width="1"/><path d="M0 20.5h1" stroke-width="1"/><path d="M15 10.5h1" stroke-width="1"/><path d="M59 88.5h1" stroke-width="1"/><path d="M48 80.5h1" stroke-width="1"/><path d="M59 30.5h1" stroke-width="1"/><path d="M31 78.5h1" stroke-width="1"/><path d="M59 32.5h1" stroke-width="1"/><path d="M30 71.5h1" stroke-width="1"/><path d="M58 4.5h1" stroke-width="1"/><path d="M0 24.5h1" stroke-width="1"/><path d="M49 38.5h1" stroke-width="1"/><path d="M46 79.5h1" stroke-width="1"/><path d="M4 32.5h1" stroke-width="1"/><path d="M38 57.5h1" stroke-width="1"/><path d="M49 73.5h1" stroke-width="1"/><path d="M59 69.5h1" stroke-width="1"/><path d="M4 28.5h1" stroke-width="1"/><path d="M3 50.5h1" stroke-width="1"/><path d="M36 8.5h1" stroke-width="1"/><path d="M35 64.5h1" stroke-width="1"/><path d="M23 26.5h1" stroke-width="1"/><path d="M8 87.5h1" stroke-width="1"/><path d="M56 81.5h1" stroke-width="1"/><path d="M42 8.5h1" stroke-width="1"/><path d="M57 88.5h1" stroke-width="1"/><path d="M44 61.5h1" stroke-width="1"/><path d="M52 58.5h1" stroke-width="1"/><path d="M47 53.5h1" stroke-width="1"/><path d="M54 86.5h1" stroke-width="1"/><path d="M2 85.5h1" stroke-width="1"/><path d="M17 21.5h1" stroke-width="1"/><path d="M38 48.5h1" stroke-width="1"/><path d="M39 55.5h1" stroke-width="1"/><path d="M16 8.5h1" stroke-width="1"/><path d="M2 71.5h1" stroke-width="1"/><path d="M31 85.5h1" stroke-width="1"/><path d="M6 9.5h1" stroke-width="1"/><path d="M54 72.5h1" stroke-width="1"/><path d="M58 31.5h1" stroke-width="1"/><path d="M22 34.5h1" stroke-width="1"/><path d="M22 84.5h1" stroke-width="1"/><path d="M31 1.5h1" stroke-width="1"/><path d="M40 60.5h1" stroke-width="1"/><path d="M57 15.5h1" stroke-width="1"/><path d="M21 19.5h1" stroke-width="1"/><path d="M29 87.5h1" stroke-width="1"/><path d="M11 82.5h1" stroke-width="1"/><path d="M24 63.5h1" stroke-width="1"/><path d="M22 75.5h1" stroke-width="1"/><path d="M54 62.5h1" stroke-width="1"/><path d="M42 85.5h1" stroke-width="1"/><path d="M34 15.5h1" stroke-width="1"/><path d="M16 60.5h1" stroke-width="1"/><path d="M23 13.5h1" stroke-width="1"/><path d="M5 31.5h1" stroke-width="1"/><path d="M13 11.5h1" stroke-width="1"/><path d="M43 28.5h1" stroke-width="1"/><path d="M30 79.5h1" stroke-width="1"/><path d="M15 71.5h1" stroke-width="1"/><path d="M23 12.5h1" stroke-width="1"/><path d="M36 49.5h1" stroke-width="1"/><path d="M21 43.5h1" stroke-width="1"/><path d="M22 33.5h1" stroke-width="1"/><path d="M53 2.5h1" stroke-width="1"/><path d="M52 20.5h1" stroke-width="1"/><path d="M22 57.5h1" stroke-width="1"/><path d="M4 18.5h1" stroke-width="1"/><path d="M11 50.5h1" stroke-width="1"/><path d="M50 20.5h1" stroke-width="1"/><path d="M39 17.5h1" stroke-width="1"/><path d="M55 18.5h1" stroke-width="1"/></g></pattern>
<pattern id="nb" width="50" height="70" patternUnits="userSpaceOnUse" patternTransform="scale(0.8)"><g fill="none" stroke="#1c5882"><path d="M0.0 8.6q1.5 -5.0 9.0 -3.5" stroke-width="1.2"/><path d="M0.0 16.8q1.5 -6.3 9.0 -5.6" stroke-width="1.2"/><path d="M0.0 23.5q1.5 -4.5 9.0 -2.7" stroke-width="1.2"/><path d="M0.0 32.0q1.5 -5.1 9.0 -4.7" stroke-width="1.6"/><path d="M0.0 41.3q1.5 -6.5 9.0 -5.5" stroke-width="1.9"/><path d="M0.0 48.5q1.5 -7.0 9.0 -5.7" stroke-width="1.9"/><path d="M0.0 54.4q1.5 -4.2 9.0 -3.5" stroke-width="1.9"/><path d="M0.0 64.2q1.5 -5.1 9.0 -3.6" stroke-width="1.9"/><path d="M0.0 74.7q1.5 -6.9 9.0 -5.0" stroke-width="1.9"/><path d="M10.0 10.5q1.5 -6.6 9.0 -5.5" stroke-width="1.9"/><path d="M10.0 18.2q1.5 -6.5 9.0 -5.4" stroke-width="1.9"/><path d="M10.0 25.2q1.5 -6.7 9.0 -5.0" stroke-width="1.9"/><path d="M10.0 31.0q1.5 -4.4 9.0 -3.5" stroke-width="1.6"/><path d="M10.0 40.5q1.5 -5.7 9.0 -3.9" stroke-width="1.9"/><path d="M10.0 48.6q1.5 -6.3 9.0 -4.6" stroke-width="1.9"/><path d="M10.0 56.2q1.5 -5.6 9.0 -5.2" stroke-width="1.9"/><path d="M10.0 64.1q1.5 -5.0 9.0 -3.5" stroke-width="1.6"/><path d="M10.0 73.0q1.5 -5.5 9.0 -5.2" stroke-width="1.2"/><path d="M20.0 7.6q1.5 -5.1 9.0 -3.1" stroke-width="1.6"/><path d="M20.0 16.5q1.5 -6.0 9.0 -5.2" stroke-width="1.6"/><path d="M20.0 23.1q1.5 -6.4 9.0 -4.6" stroke-width="1.6"/><path d="M20.0 30.5q1.5 -5.3 9.0 -4.1" stroke-width="1.2"/><path d="M20.0 36.0q1.5 -4.1 9.0 -2.4" stroke-width="1.2"/><path d="M20.0 46.7q1.5 -6.6 9.0 -6.2" stroke-width="1.9"/><path d="M20.0 52.6q1.5 -5.9 9.0 -5.3" stroke-width="1.2"/><path d="M20.0 60.3q1.5 -6.1 9.0 -4.4" stroke-width="1.9"/><path d="M20.0 69.2q1.5 -6.3 9.0 -5.1" stroke-width="1.9"/><path d="M20.0 74.0q1.5 -4.6 9.0 -3.2" stroke-width="1.9"/><path d="M30.0 10.0q1.5 -6.6 9.0 -5.1" stroke-width="1.9"/><path d="M30.0 16.8q1.5 -5.0 9.0 -5.0" stroke-width="1.6"/><path d="M30.0 24.7q1.5 -5.0 9.0 -3.4" stroke-width="1.2"/><path d="M30.0 33.1q1.5 -6.7 9.0 -5.1" stroke-width="1.2"/><path d="M30.0 41.2q1.5 -6.5 9.0 -4.6" stroke-width="1.2"/><path d="M30.0 47.8q1.5 -4.1 9.0 -3.9" stroke-width="1.9"/><path d="M30.0 58.6q1.5 -6.0 9.0 -5.4" stroke-width="1.9"/><path d="M30.0 65.3q1.5 -5.4 9.0 -4.5" stroke-width="1.6"/><path d="M30.0 71.7q1.5 -5.9 9.0 -5.6" stroke-width="1.6"/><path d="M40.0 5.5q1.5 -4.7 9.0 -3.3" stroke-width="1.6"/><path d="M40.0 14.0q1.5 -6.6 9.0 -5.3" stroke-width="1.9"/><path d="M40.0 20.3q1.5 -5.6 9.0 -3.7" stroke-width="1.9"/><path d="M40.0 28.7q1.5 -5.5 9.0 -4.0" stroke-width="1.2"/><path d="M40.0 38.7q1.5 -6.7 9.0 -5.4" stroke-width="1.6"/><path d="M40.0 46.0q1.5 -6.2 9.0 -4.8" stroke-width="1.9"/><path d="M40.0 51.8q1.5 -4.3 9.0 -2.8" stroke-width="1.9"/><path d="M40.0 60.4q1.5 -6.8 9.0 -5.7" stroke-width="1.9"/><path d="M40.0 67.5q1.5 -6.0 9.0 -5.1" stroke-width="1.6"/><path d="M40.0 73.8q1.5 -4.8 9.0 -3.6" stroke-width="1.6"/><path d="M32 22.5h1" stroke-width="1"/><path d="M42 68.5h1" stroke-width="1"/><path d="M16 26.5h1" stroke-width="1"/><path d="M24 45.5h1" stroke-width="1"/><path d="M18 42.5h1" stroke-width="1"/><path d="M1 43.5h1" stroke-width="1"/><path d="M13 60.5h1" stroke-width="1"/><path d="M16 52.5h1" stroke-width="1"/><path d="M25 58.5h1" stroke-width="1"/><path d="M26 67.5h1" stroke-width="1"/><path d="M20 41.5h1" stroke-width="1"/><path d="M4 1.5h1" stroke-width="1"/><path d="M15 8.5h1" stroke-width="1"/><path d="M19 54.5h1" stroke-width="1"/><path d="M24 61.5h1" stroke-width="1"/><path d="M30 32.5h1" stroke-width="1"/><path d="M44 55.5h1" stroke-width="1"/><path d="M47 45.5h1" stroke-width="1"/><path d="M40 43.5h1" stroke-width="1"/><path d="M37 5.5h1" stroke-width="1"/><path d="M4 61.5h1" stroke-width="1"/><path d="M0 60.5h1" stroke-width="1"/><path d="M24 60.5h1" stroke-width="1"/><path d="M8 57.5h1" stroke-width="1"/><path d="M11 35.5h1" stroke-width="1"/><path d="M20 54.5h1" stroke-width="1"/><path d="M12 13.5h1" stroke-width="1"/><path d="M34 32.5h1" stroke-width="1"/><path d="M11 35.5h1" stroke-width="1"/><path d="M14 51.5h1" stroke-width="1"/><path d="M45 6.5h1" stroke-width="1"/><path d="M48 20.5h1" stroke-width="1"/><path d="M33 5.5h1" stroke-width="1"/><path d="M25 15.5h1" stroke-width="1"/><path d="M2 59.5h1" stroke-width="1"/><path d="M3 5.5h1" stroke-width="1"/><path d="M20 59.5h1" stroke-width="1"/><path d="M30 7.5h1" stroke-width="1"/><path d="M19 22.5h1" stroke-width="1"/><path d="M21 22.5h1" stroke-width="1"/><path d="M11 0.5h1" stroke-width="1"/><path d="M35 58.5h1" stroke-width="1"/><path d="M45 56.5h1" stroke-width="1"/><path d="M18 27.5h1" stroke-width="1"/><path d="M41 41.5h1" stroke-width="1"/><path d="M34 68.5h1" stroke-width="1"/><path d="M16 46.5h1" stroke-width="1"/><path d="M47 58.5h1" stroke-width="1"/><path d="M10 48.5h1" stroke-width="1"/><path d="M27 60.5h1" stroke-width="1"/><path d="M22 40.5h1" stroke-width="1"/><path d="M38 27.5h1" stroke-width="1"/><path d="M48 45.5h1" stroke-width="1"/><path d="M18 12.5h1" stroke-width="1"/><path d="M30 43.5h1" stroke-width="1"/><path d="M29 49.5h1" stroke-width="1"/><path d="M37 21.5h1" stroke-width="1"/><path d="M11 16.5h1" stroke-width="1"/><path d="M21 16.5h1" stroke-width="1"/><path d="M25 40.5h1" stroke-width="1"/><path d="M7 12.5h1" stroke-width="1"/><path d="M45 49.5h1" stroke-width="1"/><path d="M11 49.5h1" stroke-width="1"/><path d="M25 36.5h1" stroke-width="1"/><path d="M26 24.5h1" stroke-width="1"/><path d="M44 7.5h1" stroke-width="1"/><path d="M41 16.5h1" stroke-width="1"/><path d="M21 65.5h1" stroke-width="1"/><path d="M13 13.5h1" stroke-width="1"/><path d="M48 65.5h1" stroke-width="1"/><path d="M5 36.5h1" stroke-width="1"/><path d="M23 66.5h1" stroke-width="1"/><path d="M7 10.5h1" stroke-width="1"/><path d="M5 41.5h1" stroke-width="1"/><path d="M39 5.5h1" stroke-width="1"/><path d="M37 24.5h1" stroke-width="1"/><path d="M13 62.5h1" stroke-width="1"/><path d="M12 13.5h1" stroke-width="1"/><path d="M40 21.5h1" stroke-width="1"/><path d="M32 58.5h1" stroke-width="1"/><path d="M40 0.5h1" stroke-width="1"/><path d="M42 49.5h1" stroke-width="1"/><path d="M48 20.5h1" stroke-width="1"/><path d="M10 64.5h1" stroke-width="1"/><path d="M34 35.5h1" stroke-width="1"/><path d="M5 28.5h1" stroke-width="1"/><path d="M12 16.5h1" stroke-width="1"/><path d="M12 37.5h1" stroke-width="1"/><path d="M1 24.5h1" stroke-width="1"/><path d="M28 59.5h1" stroke-width="1"/><path d="M13 55.5h1" stroke-width="1"/><path d="M15 24.5h1" stroke-width="1"/><path d="M21 50.5h1" stroke-width="1"/><path d="M39 35.5h1" stroke-width="1"/><path d="M0 9.5h1" stroke-width="1"/><path d="M34 54.5h1" stroke-width="1"/><path d="M40 65.5h1" stroke-width="1"/><path d="M45 66.5h1" stroke-width="1"/><path d="M49 3.5h1" stroke-width="1"/><path d="M31 6.5h1" stroke-width="1"/><path d="M5 68.5h1" stroke-width="1"/><path d="M7 67.5h1" stroke-width="1"/><path d="M22 1.5h1" stroke-width="1"/><path d="M7 50.5h1" stroke-width="1"/></g></pattern>
<pattern id="nc" width="40" height="60" patternUnits="userSpaceOnUse" patternTransform="scale(0.64)"><g fill="none" stroke="#1c5882"><path d="M0.0 9.5q1.5 -6.7 9.0 -6.7" stroke-width="2.3"/><path d="M0.0 15.5q1.5 -4.2 9.0 -2.6" stroke-width="1.4"/><path d="M0.0 24.8q1.5 -6.9 9.0 -6.2" stroke-width="1.9"/><path d="M0.0 30.9q1.5 -4.8 9.0 -4.4" stroke-width="1.9"/><path d="M0.0 38.4q1.5 -5.5 9.0 -5.2" stroke-width="1.9"/><path d="M0.0 45.1q1.5 -5.1 9.0 -4.5" stroke-width="1.9"/><path d="M0.0 53.0q1.5 -4.5 9.0 -3.7" stroke-width="1.4"/><path d="M0.0 59.7q1.5 -5.0 9.0 -3.5" stroke-width="2.3"/><path d="M10.0 7.7q1.5 -4.9 9.0 -4.4" stroke-width="1.9"/><path d="M10.0 14.5q1.5 -4.5 9.0 -4.2" stroke-width="1.4"/><path d="M10.0 21.1q1.5 -4.6 9.0 -3.4" stroke-width="2.3"/><path d="M10.0 27.5q1.5 -4.4 9.0 -3.9" stroke-width="1.4"/><path d="M10.0 37.7q1.5 -6.8 9.0 -5.1" stroke-width="2.3"/><path d="M10.0 45.4q1.5 -5.6 9.0 -4.7" stroke-width="1.9"/><path d="M10.0 51.7q1.5 -5.3 9.0 -4.0" stroke-width="1.9"/><path d="M10.0 59.6q1.5 -6.0 9.0 -4.3" stroke-width="2.3"/><path d="M20.0 4.8q1.5 -4.1 9.0 -3.4" stroke-width="2.3"/><path d="M20.0 11.1q1.5 -4.3 9.0 -3.2" stroke-width="2.3"/><path d="M20.0 19.8q1.5 -5.6 9.0 -5.1" stroke-width="1.4"/><path d="M20.0 27.4q1.5 -6.5 9.0 -5.0" stroke-width="1.4"/><path d="M20.0 34.5q1.5 -6.4 9.0 -6.0" stroke-width="1.4"/><path d="M20.0 40.2q1.5 -4.2 9.0 -2.7" stroke-width="1.9"/><path d="M20.0 50.7q1.5 -6.7 9.0 -4.9" stroke-width="1.9"/><path d="M20.0 56.4q1.5 -4.0 9.0 -3.0" stroke-width="1.4"/><path d="M20.0 63.6q1.5 -4.8 9.0 -4.7" stroke-width="1.4"/><path d="M30.0 5.6q1.5 -4.5 9.0 -3.3" stroke-width="1.4"/><path d="M30.0 14.7q1.5 -6.0 9.0 -4.4" stroke-width="1.9"/><path d="M30.0 23.4q1.5 -6.5 9.0 -5.9" stroke-width="1.4"/><path d="M30.0 30.9q1.5 -5.6 9.0 -4.1" stroke-width="1.4"/><path d="M30.0 38.1q1.5 -6.5 9.0 -4.6" stroke-width="1.9"/><path d="M30.0 44.8q1.5 -5.2 9.0 -5.1" stroke-width="1.9"/><path d="M30.0 54.8q1.5 -6.4 9.0 -5.4" stroke-width="2.3"/><path d="M30.0 62.3q1.5 -5.6 9.0 -4.8" stroke-width="2.3"/><path d="M26 21.5h1" stroke-width="1"/><path d="M25 3.5h1" stroke-width="1"/><path d="M32 18.5h1" stroke-width="1"/><path d="M9 57.5h1" stroke-width="1"/><path d="M33 30.5h1" stroke-width="1"/><path d="M26 16.5h1" stroke-width="1"/><path d="M7 50.5h1" stroke-width="1"/><path d="M17 48.5h1" stroke-width="1"/><path d="M12 21.5h1" stroke-width="1"/><path d="M16 33.5h1" stroke-width="1"/><path d="M2 19.5h1" stroke-width="1"/><path d="M10 23.5h1" stroke-width="1"/><path d="M9 5.5h1" stroke-width="1"/><path d="M34 40.5h1" stroke-width="1"/><path d="M29 28.5h1" stroke-width="1"/><path d="M28 36.5h1" stroke-width="1"/><path d="M12 56.5h1" stroke-width="1"/><path d="M9 28.5h1" stroke-width="1"/><path d="M7 1.5h1" stroke-width="1"/><path d="M38 45.5h1" stroke-width="1"/><path d="M5 37.5h1" stroke-width="1"/><path d="M38 34.5h1" stroke-width="1"/><path d="M38 28.5h1" stroke-width="1"/><path d="M29 42.5h1" stroke-width="1"/><path d="M5 5.5h1" stroke-width="1"/><path d="M37 22.5h1" stroke-width="1"/><path d="M25 13.5h1" stroke-width="1"/><path d="M13 57.5h1" stroke-width="1"/><path d="M7 57.5h1" stroke-width="1"/><path d="M14 1.5h1" stroke-width="1"/><path d="M16 39.5h1" stroke-width="1"/><path d="M37 49.5h1" stroke-width="1"/><path d="M26 0.5h1" stroke-width="1"/><path d="M3 21.5h1" stroke-width="1"/><path d="M17 46.5h1" stroke-width="1"/><path d="M31 58.5h1" stroke-width="1"/><path d="M2 3.5h1" stroke-width="1"/><path d="M4 55.5h1" stroke-width="1"/><path d="M5 25.5h1" stroke-width="1"/><path d="M17 58.5h1" stroke-width="1"/><path d="M34 22.5h1" stroke-width="1"/><path d="M29 10.5h1" stroke-width="1"/><path d="M29 37.5h1" stroke-width="1"/><path d="M39 18.5h1" stroke-width="1"/><path d="M14 50.5h1" stroke-width="1"/><path d="M32 51.5h1" stroke-width="1"/><path d="M12 32.5h1" stroke-width="1"/><path d="M36 0.5h1" stroke-width="1"/><path d="M8 40.5h1" stroke-width="1"/><path d="M11 36.5h1" stroke-width="1"/><path d="M22 30.5h1" stroke-width="1"/><path d="M34 54.5h1" stroke-width="1"/><path d="M3 2.5h1" stroke-width="1"/><path d="M14 7.5h1" stroke-width="1"/><path d="M37 46.5h1" stroke-width="1"/><path d="M21 17.5h1" stroke-width="1"/><path d="M19 25.5h1" stroke-width="1"/><path d="M39 1.5h1" stroke-width="1"/><path d="M3 1.5h1" stroke-width="1"/><path d="M6 54.5h1" stroke-width="1"/><path d="M31 38.5h1" stroke-width="1"/><path d="M1 21.5h1" stroke-width="1"/><path d="M22 55.5h1" stroke-width="1"/><path d="M24 37.5h1" stroke-width="1"/><path d="M6 39.5h1" stroke-width="1"/><path d="M5 48.5h1" stroke-width="1"/><path d="M38 43.5h1" stroke-width="1"/><path d="M31 27.5h1" stroke-width="1"/><path d="M28 42.5h1" stroke-width="1"/><path d="M10 29.5h1" stroke-width="1"/><path d="M9 11.5h1" stroke-width="1"/><path d="M27 32.5h1" stroke-width="1"/><path d="M31 22.5h1" stroke-width="1"/><path d="M35 52.5h1" stroke-width="1"/><path d="M22 50.5h1" stroke-width="1"/><path d="M32 31.5h1" stroke-width="1"/><path d="M2 52.5h1" stroke-width="1"/><path d="M7 56.5h1" stroke-width="1"/><path d="M6 47.5h1" stroke-width="1"/><path d="M15 33.5h1" stroke-width="1"/><path d="M31 11.5h1" stroke-width="1"/><path d="M27 51.5h1" stroke-width="1"/><path d="M14 57.5h1" stroke-width="1"/><path d="M19 9.5h1" stroke-width="1"/><path d="M38 2.5h1" stroke-width="1"/></g></pattern>
<pattern id="s" width="40" height="40" patternUnits="userSpaceOnUse"><g fill="#1c5882"><rect x="28" y="35" width="1" height="1"/><rect x="29" y="28" width="1" height="1"/><rect x="32" y="37" width="1" height="1"/><rect x="12" y="11" width="1" height="1"/><rect x="32" y="30" width="1" height="1"/><rect x="39" y="11" width="1" height="1"/><rect x="6" y="28" width="1" height="1"/><rect x="19" y="9" width="1" height="1"/><rect x="5" y="34" width="1" height="1"/><rect x="2" y="38" width="1" height="1"/><rect x="25" y="28" width="1" height="1"/><rect x="39" y="10" width="1" height="1"/><rect x="39" y="0" width="1" height="1"/><rect x="33" y="4" width="1" height="1"/><rect x="3" y="2" width="1" height="1"/><rect x="12" y="15" width="1" height="1"/><rect x="38" y="1" width="1" height="1"/><rect x="29" y="20" width="1" height="1"/><rect x="28" y="37" width="1" height="1"/><rect x="12" y="33" width="1" height="1"/><rect x="14" y="18" width="1" height="1"/><rect x="31" y="0" width="1" height="1"/><rect x="5" y="29" width="1" height="1"/><rect x="17" y="26" width="1" height="1"/><rect x="35" y="5" width="1" height="1"/><rect x="16" y="20" width="1" height="1"/><rect x="14" y="32" width="1" height="1"/><rect x="18" y="1" width="1" height="1"/><rect x="4" y="36" width="1" height="1"/><rect x="6" y="25" width="1" height="1"/><rect x="6" y="18" width="1" height="1"/><rect x="24" y="4" width="1" height="1"/><rect x="1" y="0" width="1" height="1"/><rect x="13" y="13" width="1" height="1"/><rect x="3" y="30" width="1" height="1"/><rect x="24" y="25" width="1" height="1"/><rect x="26" y="4" width="1" height="1"/><rect x="36" y="12" width="1" height="1"/><rect x="17" y="21" width="1" height="1"/><rect x="5" y="19" width="1" height="1"/><rect x="21" y="0" width="1" height="1"/><rect x="26" y="7" width="1" height="1"/><rect x="8" y="15" width="1" height="1"/><rect x="6" y="0" width="1" height="1"/><rect x="3" y="29" width="1" height="1"/><rect x="31" y="11" width="1" height="1"/><rect x="35" y="12" width="1" height="1"/><rect x="28" y="32" width="1" height="1"/><rect x="12" y="8" width="1" height="1"/><rect x="26" y="24" width="1" height="1"/><rect x="7" y="25" width="1" height="1"/><rect x="26" y="13" width="1" height="1"/><rect x="0" y="17" width="1" height="1"/><rect x="37" y="19" width="1" height="1"/><rect x="1" y="13" width="1" height="1"/><rect x="11" y="25" width="1" height="1"/><rect x="38" y="36" width="1" height="1"/><rect x="6" y="2" width="1" height="1"/><rect x="9" y="13" width="1" height="1"/><rect x="28" y="16" width="1" height="1"/><rect x="0" y="39" width="1" height="1"/><rect x="21" y="18" width="1" height="1"/><rect x="24" y="4" width="1" height="1"/><rect x="4" y="5" width="1" height="1"/><rect x="13" y="37" width="1" height="1"/><rect x="15" y="0" width="1" height="1"/><rect x="38" y="23" width="1" height="1"/><rect x="23" y="39" width="1" height="1"/><rect x="29" y="8" width="1" height="1"/><rect x="37" y="30" width="1" height="1"/><rect x="36" y="8" width="1" height="1"/><rect x="24" y="11" width="1" height="1"/><rect x="9" y="19" width="1" height="1"/><rect x="14" y="39" width="1" height="1"/><rect x="15" y="12" width="1" height="1"/><rect x="10" y="35" width="1" height="1"/><rect x="12" y="24" width="1" height="1"/><rect x="30" y="38" width="1" height="1"/><rect x="5" y="26" width="1" height="1"/><rect x="3" y="6" width="1" height="1"/><rect x="6" y="2" width="1" height="1"/><rect x="32" y="16" width="1" height="1"/><rect x="15" y="25" width="1" height="1"/><rect x="16" y="26" width="1" height="1"/><rect x="38" y="31" width="1" height="1"/><rect x="18" y="33" width="1" height="1"/><rect x="11" y="4" width="1" height="1"/><rect x="8" y="14" width="1" height="1"/><rect x="30" y="35" width="1" height="1"/><rect x="39" y="39" width="1" height="1"/><rect x="4" y="17" width="1" height="1"/><rect x="13" y="13" width="1" height="1"/><rect x="1" y="4" width="1" height="1"/><rect x="17" y="26" width="1" height="1"/><rect x="28" y="15" width="1" height="1"/><rect x="3" y="2" width="1" height="1"/><rect x="11" y="18" width="1" height="1"/><rect x="23" y="33" width="1" height="1"/><rect x="36" y="8" width="1" height="1"/><rect x="5" y="23" width="1" height="1"/><rect x="8" y="28" width="1" height="1"/><rect x="21" y="33" width="1" height="1"/><rect x="37" y="8" width="1" height="1"/><rect x="37" y="2" width="1" height="1"/><rect x="1" y="30" width="1" height="1"/><rect x="22" y="19" width="1" height="1"/><rect x="2" y="1" width="1" height="1"/><rect x="38" y="4" width="1" height="1"/><rect x="30" y="4" width="1" height="1"/><rect x="19" y="20" width="1" height="1"/><rect x="8" y="4" width="1" height="1"/><rect x="4" y="28" width="1" height="1"/><rect x="34" y="23" width="1" height="1"/><rect x="2" y="8" width="1" height="1"/><rect x="21" y="22" width="1" height="1"/><rect x="5" y="30" width="1" height="1"/><rect x="4" y="26" width="1" height="1"/><rect x="1" y="31" width="1" height="1"/><rect x="36" y="0" width="1" height="1"/><rect x="39" y="24" width="1" height="1"/><rect x="24" y="37" width="1" height="1"/><rect x="0" y="38" width="1" height="1"/><rect x="4" y="5" width="1" height="1"/><rect x="5" y="7" width="1" height="1"/><rect x="16" y="26" width="1" height="1"/><rect x="21" y="24" width="1" height="1"/><rect x="37" y="29" width="1" height="1"/><rect x="28" y="29" width="1" height="1"/><rect x="34" y="5" width="1" height="1"/><rect x="33" y="32" width="1" height="1"/><rect x="1" y="19" width="1" height="1"/><rect x="38" y="5" width="1" height="1"/><rect x="30" y="1" width="1" height="1"/><rect x="14" y="7" width="1" height="1"/><rect x="31" y="39" width="1" height="1"/><rect x="31" y="16" width="1" height="1"/><rect x="0" y="23" width="1" height="1"/><rect x="19" y="9" width="1" height="1"/><rect x="39" y="12" width="1" height="1"/><rect x="33" y="10" width="1" height="1"/><rect x="21" y="28" width="1" height="1"/><rect x="31" y="15" width="1" height="1"/><rect x="20" y="25" width="1" height="1"/><rect x="16" y="12" width="1" height="1"/><rect x="27" y="12" width="1" height="1"/><rect x="13" y="24" width="1" height="1"/><rect x="14" y="37" width="1" height="1"/><rect x="20" y="13" width="1" height="1"/><rect x="8" y="8" width="1" height="1"/><rect x="31" y="22" width="1" height="1"/><rect x="2" y="4" width="1" height="1"/><rect x="17" y="10" width="1" height="1"/><rect x="7" y="28" width="1" height="1"/><rect x="30" y="17" width="1" height="1"/><rect x="13" y="26" width="1" height="1"/><rect x="24" y="33" width="1" height="1"/><rect x="31" y="20" width="1" height="1"/><rect x="39" y="28" width="1" height="1"/><rect x="20" y="4" width="1" height="1"/><rect x="2" y="17" width="1" height="1"/></g></pattern>
</defs>
<polygon points="139.1,757.9 436.4,724.4 515.9,739.1 559.1,710.5 813.2,681.9 475.7,452.8 80.9,476.9" fill="#4b86ae"/>
<polygon points="165.3,743.3 779.8,675.3 467,456.5 97.9,479.2" fill="#565656"/>
<g fill="#686868"><polygon points="180,741.7 188.3,740.8 111,478.4 106.3,478.7"/><polygon points="260.2,732.8 268.2,731.9 157.2,475.6 152.5,475.9"/><polygon points="338,724.2 345.8,723.3 202.5,472.8 197.9,473.1"/><polygon points="413.6,715.8 421.2,715 247.1,470 242.6,470.3"/><polygon points="487.1,707.7 494.5,706.9 291,467.3 286.6,467.6"/><polygon points="558.5,699.8 565.7,699 334.2,464.7 329.8,464.9"/><polygon points="628,692.1 635.1,691.3 376.7,462 372.4,462.3"/><polygon points="695.7,684.6 702.5,683.8 418.5,459.5 414.3,459.7"/><polygon points="761.5,677.3 768.1,676.6 459.7,456.9 455.5,457.2"/><polygon points="158.3,715.7 748.5,653.4 745.5,651.3 157.6,713.1"/><polygon points="150.8,686.4 715,629.9 712.2,628 150.2,684"/><polygon points="144,659.9 684.3,608.5 681.8,606.7 143.5,657.7"/><polygon points="137.9,635.8 656.2,588.8 653.9,587.2 137.4,633.8"/><polygon points="132.3,613.9 630.4,570.8 628.2,569.3 131.8,612.1"/><polygon points="127.1,593.8 606.5,554.1 604.5,552.7 126.7,592.1"/><polygon points="122.4,575.3 584.4,538.6 582.6,537.3 122,573.8"/><polygon points="118,558.2 563.9,524.2 562.2,523.1 117.7,556.8"/><polygon points="114,542.5 544.8,510.9 543.2,509.8 113.7,541.2"/><polygon points="110.3,527.9 527,498.4 525.5,497.4 110,526.6"/><polygon points="106.8,514.2 510.3,486.8 508.9,485.8 106.5,513.1"/><polygon points="103.6,501.6 494.7,475.8 493.4,474.9 103.3,500.5"/><polygon points="100.5,489.7 480,465.5 478.8,464.7 100.3,488.7"/></g>
<g fill="#389ae0"><polygon points="432.4,474.5 427.1,474.3 422.1,473.8 417.6,473.1 413.8,472.2 410.8,471.2 408.8,470 407.9,468.8 408,463 408.2,461.8 409.4,460.6 411.7,459.6 414.9,458.6 418.8,457.9 423.4,457.4 428.3,457.1 433.4,457 438.5,457.2 443.4,457.6 447.9,458.3 451.7,459.1 454.7,460.1 456.8,461.2 457.9,462.4 457.9,463.6 457.8,469.4 456.7,470.6 454.5,471.7 451.4,472.7 447.4,473.5 442.8,474.1 437.7,474.4"/><polygon points="410.1,464.3 411,326.9 411.1,326.2 412.3,325.6 414.5,325 417.5,324.5 421.2,324.1 425.5,323.8 430.1,323.6 435,323.6 439.8,323.7 444.4,323.9 448.6,324.3 452.3,324.7 455.1,325.3 457.1,325.9 458.1,326.6 458.1,327.2 455.7,464.9 454.7,466 452.7,467 449.9,467.9 446.2,468.6 442,469.1 437.3,469.4 432.5,469.5 427.7,469.3 423.1,468.9 419,468.2 415.5,467.4 412.7,466.5 410.9,465.4"/></g>
<polygon points="410.9,326.7 413.5,328.2 416,328.7 418.6,329.1 421.1,329.4 423.7,329.6 426.2,329.8 428.8,329.9 431.4,330 433.9,330 432.2,474.5 429.5,474.4 426.8,474.3 424.1,474.1 421.4,473.8 418.7,473.4 416,472.9 413.3,472.2 410.6,471.2 407.9,468.5" fill="url(#mc)"/>
<polygon points="433.9,330 435.6,330 437.3,330 439,329.9 440.7,329.9 442.4,329.8 444.1,329.7 445.8,329.6 447.5,329.4 449.2,329.3 448.4,473.2 446.6,473.5 444.8,473.8 443,474 441.2,474.2 439.4,474.3 437.6,474.4 435.8,474.5 434,474.5 432.2,474.5" fill="url(#lc)"/>
<polygon points="410.9,326.7 411.4,327.4 411.9,327.6 412.3,327.8 412.8,328 413.3,328.1 413.7,328.3 414.2,328.4 414.7,328.5 415.2,328.6 412.4,471.9 411.9,471.8 411.4,471.6 410.9,471.3 410.4,471.1 409.9,470.8 409.4,470.5 408.9,470.2 408.4,469.7 407.9,468.5" fill="#1c5882"/>
<polygon points="457.1,325.9 455.1,325.3 452.3,324.7 448.6,324.3 444.4,323.9 439.8,323.7 435,323.6 430.1,323.6 425.5,323.8 421.2,324.1 417.5,324.5 414.5,325 412.3,325.6 411.1,326.2 411,326.9 411.8,327.6 413.7,328.2 416.5,328.8 420.1,329.2 424.4,329.6 429.1,329.9 434.1,330 439.1,329.9 444,329.8 448.3,329.5 452.1,329 455,328.5 457.1,327.9 458.1,327.2 458.1,326.6" fill="#1c5882" stroke="#1c5882" stroke-width="1"/>
<polygon points="455.3,326 453.5,325.4 450.9,324.9 447.5,324.5 443.7,324.1 439.4,323.9 435,323.8 430.5,323.9 426.2,324 422.2,324.3 418.8,324.7 416.1,325.1 414.1,325.7 413,326.3 412.8,326.9 413.6,327.5 415.4,328.1 418,328.6 421.3,329 425.2,329.4 429.6,329.6 434.2,329.7 438.8,329.7 443.2,329.5 447.2,329.2 450.7,328.8 453.4,328.3 455.3,327.8 456.2,327.2 456.3,326.6" fill="#389ae0"/>
<polygon points="434.2,329.5 429.9,329.4 425.8,329.2 422.2,328.9 419.1,328.5 416.6,328 415,327.4 414.3,326.9 414.3,321.6 414.4,321.1 415.5,320.5 417.3,320 419.9,319.6 423.1,319.3 426.8,319 430.8,318.9 435,318.9 439.2,318.9 443.1,319.1 446.8,319.4 449.9,319.8 452.3,320.3 454.1,320.8 454.9,321.4 454.8,326.6 454.8,327.2 453.9,327.7 452.2,328.2 449.6,328.7 446.4,329.1 442.6,329.3 438.5,329.5" fill="#389ae0"/>
<polygon points="454.1,320.8 452.3,320.3 449.9,319.8 446.8,319.4 443.1,319.1 439.2,318.9 435,318.9 430.8,318.9 426.8,319 423.1,319.3 419.9,319.6 417.3,320 415.5,320.5 414.4,321.1 414.3,321.6 415.1,322.2 416.7,322.7 419.1,323.2 422.2,323.6 425.9,323.9 430,324.1 434.3,324.2 438.6,324.2 442.7,324 446.5,323.8 449.7,323.4 452.2,323 454,322.5 454.9,321.9 454.9,321.4" fill="#1c5882" stroke="#1c5882" stroke-width="1"/>
<polygon points="452.3,320.9 450.7,320.4 448.5,320 445.7,319.6 442.4,319.4 438.7,319.2 435,319.1 431.2,319.1 427.5,319.3 424.1,319.5 421.2,319.8 418.9,320.2 417.2,320.6 416.3,321.1 416.2,321.6 416.9,322.1 418.3,322.6 420.5,323 423.4,323.4 426.7,323.7 430.4,323.9 434.3,324 438.2,323.9 441.9,323.8 445.3,323.6 448.3,323.2 450.6,322.8 452.2,322.4 453,321.9 453,321.4" fill="#389ae0"/>
<polygon points="451,320.5 448.1,319.9 444.2,319.5 439.6,319.2 434.6,319.1 429.6,319.2 425,319.4 421.1,319.8 418.2,320.3 416.5,320.9 416.2,321.6 417.2,322.3 419.6,322.9 423.1,323.4 421.8,322.7 422.2,322 423.7,321.6 425.6,321.2 427.6,321 429.3,320.8 430.8,320.7 432.5,320.5 434.6,320.3 437.6,320.1 441.5,320.1 446.1,320.2" fill="url(#mc)"/>
<polygon points="449.5,323.1 451.8,322.6 453.1,322 453.3,321.4 452.4,320.8 450.5,320.3 447.7,319.8 444.2,319.5 440.1,319.2 435.7,319.1 431.3,319.1 427,319.2 423.2,319.5 420,319.9 424.5,319.8 428.7,319.8 432.4,319.9 435.3,320 437.6,320.2 439.6,320.4 441.4,320.6 443.3,320.8 445.3,321.1 447.2,321.5 448.9,321.9 449.8,322.5" fill="#1c5882"/>
<g fill="#389ae0"><polygon points="340.5,473.1 340.4,467.2 340.8,466 342.4,464.8 344.9,463.7 348.3,462.7 352.5,462 357.2,461.4 362.2,461.1 367.4,461.1 372.6,461.3 377.4,461.7 381.8,462.3 385.5,463.2 388.3,464.2 390.2,465.4 391.1,466.6 391.1,472.4 390.8,473.7 389.5,475 387,476.1 383.7,477.1 379.5,477.9 374.7,478.5 369.5,478.9 364.1,478.9 358.8,478.7 353.8,478.2 349.3,477.5 345.7,476.6 342.9,475.5 341.1,474.3"/><polygon points="389.1,329.1 388.9,468 388.7,469.1 387.4,470.2 385.2,471.3 382.1,472.2 378.3,472.9 373.9,473.5 369.1,473.8 364.2,473.8 359.3,473.6 354.8,473.2 350.7,472.6 347.4,471.7 344.8,470.8 343.2,469.7 342.6,468.5 341.1,329.4 341.6,328.7 343,328.1 345.4,327.5 348.6,327 352.5,326.5 357,326.2 361.8,326.1 366.7,326 371.6,326.1 376.2,326.4 380.3,326.7 383.8,327.2 386.5,327.8 388.3,328.4"/></g>
<polygon points="341.1,329.3 343.5,330.7 345.9,331.3 348.3,331.6 350.7,331.9 353.1,332.1 355.4,332.3 357.8,332.4 360.2,332.5 362.6,332.6 363.1,478.9 360.6,478.8 358.1,478.6 355.6,478.4 353.1,478.1 350.5,477.7 348,477.2 345.5,476.4 343,475.4 340.5,472.8" fill="url(#mc)"/>
<polygon points="362.6,332.6 364.2,332.6 365.8,332.6 367.3,332.6 368.9,332.6 370.5,332.5 372.1,332.5 373.7,332.4 375.3,332.3 376.9,332.2 378.2,478.1 376.5,478.3 374.9,478.5 373.2,478.7 371.5,478.8 369.8,478.9 368.1,478.9 366.5,478.9 364.8,478.9 363.1,478.9" fill="url(#lc)"/>
<polygon points="341.1,329.3 341.5,329.8 341.9,330.1 342.3,330.3 342.6,330.4 343,330.5 343.4,330.7 343.8,330.8 344.1,330.9 344.5,331 344,475.9 343.6,475.7 343.2,475.6 342.8,475.4 342.4,475.1 342,474.9 341.7,474.6 341.3,474.3 340.9,473.8 340.5,472.8" fill="#1c5882"/>
<polygon points="388.3,328.4 386.5,327.8 383.8,327.2 380.3,326.7 376.2,326.4 371.6,326.1 366.7,326 361.8,326.1 357,326.2 352.5,326.5 348.6,327 345.4,327.5 343,328.1 341.6,328.7 341.1,329.4 341.8,330.1 343.4,330.8 346.1,331.3 349.5,331.8 353.7,332.2 358.5,332.5 363.5,332.6 368.6,332.6 373.5,332.4 378.1,332.1 382,331.6 385.2,331.1 387.5,330.4 388.8,329.8 389.1,329.1" fill="#1c5882" stroke="#1c5882" stroke-width="1"/>
<polygon points="386.4,328.5 384.8,327.9 382.3,327.4 379.1,326.9 375.3,326.6 371.1,326.4 366.6,326.3 362,326.3 357.6,326.5 353.5,326.8 349.9,327.1 347,327.6 344.8,328.2 343.4,328.8 343.1,329.4 343.6,330 345.2,330.6 347.6,331.2 350.8,331.6 354.7,332 359,332.2 363.6,332.3 368.3,332.3 372.8,332.1 377,331.8 380.7,331.4 383.6,330.9 385.7,330.3 386.9,329.7 387.2,329.1" fill="#389ae0"/>
<polygon points="385.7,323.8 385.7,329.1 385.5,329.7 384.4,330.3 382.4,330.8 379.6,331.3 376.2,331.7 372.3,331.9 368.1,332.1 363.7,332.1 359.4,332 355.4,331.8 351.8,331.5 348.8,331 346.5,330.5 345,330 344.5,329.4 344.4,324.1 344.8,323.5 346,323 348.1,322.5 350.9,322 354.2,321.7 358.1,321.4 362.2,321.3 366.5,321.3 370.7,321.3 374.6,321.5 378.2,321.8 381.2,322.2 383.5,322.7 385,323.3" fill="#389ae0"/>
<polygon points="385,323.3 383.5,322.7 381.2,322.2 378.2,321.8 374.6,321.5 370.7,321.3 366.5,321.3 362.2,321.3 358.1,321.4 354.2,321.7 350.9,322 348.1,322.5 346,323 344.8,323.5 344.4,324.1 345,324.7 346.4,325.2 348.7,325.7 351.7,326.1 355.3,326.4 359.4,326.7 363.7,326.7 368.1,326.7 372.3,326.6 376.2,326.3 379.6,325.9 382.4,325.5 384.4,325 385.5,324.4 385.7,323.8" fill="#1c5882" stroke="#1c5882" stroke-width="1"/>
<polygon points="383.2,323.3 381.8,322.8 379.7,322.4 377,322 373.8,321.8 370.2,321.6 366.3,321.5 362.5,321.5 358.7,321.7 355.2,321.9 352.2,322.2 349.7,322.6 347.8,323.1 346.7,323.6 346.4,324.1 346.9,324.6 348.2,325.1 350.2,325.5 353,325.9 356.2,326.2 359.9,326.4 363.8,326.5 367.8,326.5 371.6,326.3 375.2,326.1 378.3,325.7 380.8,325.3 382.6,324.9 383.6,324.4 383.8,323.8" fill="#389ae0"/>
<polygon points="382.1,322.9 379.3,322.3 375.5,321.9 371,321.6 366,321.5 360.9,321.6 356.2,321.8 352.1,322.2 348.9,322.8 347,323.4 346.4,324.1 347.2,324.8 349.3,325.4 352.7,325.9 351.7,325.2 352.3,324.5 354,324 356.1,323.7 358.2,323.4 360,323.3 361.6,323.1 363.3,322.9 365.5,322.7 368.6,322.6 372.6,322.5 377.3,322.6" fill="url(#mc)"/>
<polygon points="379.6,325.6 382.1,325.1 383.6,324.5 384.1,323.9 383.4,323.3 381.7,322.7 379,322.3 375.6,321.9 371.5,321.6 367.1,321.5 362.6,321.5 358.2,321.6 354.3,321.9 350.9,322.3 355.4,322.1 359.6,322.1 363.3,322.2 366.4,322.4 368.9,322.6 371,322.8 373,323 374.9,323.2 376.8,323.5 378.5,323.9 379.8,324.4 380.3,325" fill="#1c5882"/>
<g fill="#389ae0"><polygon points="271.2,477.5 271.1,471.5 271.8,470.3 273.6,469 276.4,467.9 280,466.9 284.4,466.2 289.3,465.6 294.5,465.3 299.7,465.2 304.9,465.4 309.7,465.9 314,466.5 317.6,467.4 320.3,468.5 321.9,469.7 322.5,470.9 322.6,476.8 322.1,478.1 320.5,479.4 317.8,480.6 314.2,481.6 309.7,482.4 304.8,483.1 299.4,483.4 293.9,483.5 288.6,483.3 283.6,482.8 279.3,482 275.7,481.1 273.2,480 271.6,478.8"/><polygon points="318.1,331.7 320.4,472.3 319.9,473.5 318.4,474.6 315.9,475.7 312.6,476.6 308.6,477.4 304,477.9 299.1,478.2 294.1,478.3 289.2,478.1 284.7,477.7 280.7,477 277.5,476.2 275.1,475.2 273.7,474 273.3,472.9 269.4,332 270.1,331.3 271.8,330.7 274.5,330 277.9,329.5 282.1,329.1 286.7,328.8 291.6,328.6 296.6,328.5 301.5,328.7 306.1,328.9 310.1,329.3 313.5,329.8 316,330.3 317.6,331"/></g>
<polygon points="269.4,332.1 271.6,333.5 273.8,334 276,334.3 278.2,334.6 280.5,334.8 282.7,334.9 284.9,335.1 287.1,335.2 289.3,335.2 292.2,483.4 289.9,483.3 287.5,483.1 285.2,482.8 282.9,482.5 280.5,482.1 278.2,481.7 275.9,481 273.5,480.1 271.2,477.7" fill="url(#mc)"/>
<polygon points="289.3,335.2 290.8,335.3 292.2,335.3 293.7,335.3 295.2,335.3 296.6,335.3 298.1,335.2 299.6,335.2 301.1,335.1 302.5,335.1 306.2,483.1 304.6,483.2 303.1,483.3 301.5,483.4 299.9,483.4 298.4,483.5 296.8,483.5 295.3,483.5 293.7,483.4 292.2,483.4" fill="url(#lc)"/>
<polygon points="269.4,332.1 269.7,332.6 270,332.8 270.2,333 270.5,333.1 270.8,333.2 271,333.3 271.3,333.4 271.6,333.4 271.9,333.5 273.8,480.2 273.5,480.1 273.2,479.9 272.9,479.8 272.6,479.6 272.4,479.4 272.1,479.2 271.8,478.9 271.5,478.5 271.2,477.7" fill="#1c5882"/>
<polygon points="317.6,331 316,330.3 313.5,329.8 310.1,329.3 306.1,328.9 301.5,328.7 296.6,328.5 291.6,328.6 286.7,328.8 282.1,329.1 277.9,329.5 274.5,330 271.8,330.7 270.1,331.3 269.4,332 269.8,332.7 271.2,333.4 273.7,334 277,334.5 281.1,334.9 285.8,335.2 290.9,335.3 296.1,335.2 301.1,335.1 305.9,334.7 310,334.3 313.5,333.7 316,333.1 317.6,332.4 318.1,331.7" fill="#1c5882" stroke="#1c5882" stroke-width="1"/>
<polygon points="315.7,331.1 314.2,330.5 311.9,329.9 308.8,329.5 305.1,329.1 300.9,328.9 296.4,328.8 291.8,328.8 287.3,329 283,329.3 279.2,329.7 276,330.2 273.6,330.7 272,331.4 271.4,332 271.7,332.7 273.1,333.3 275.3,333.8 278.4,334.3 282.2,334.7 286.5,334.9 291.1,335 295.9,335 300.5,334.8 304.9,334.5 308.7,334.1 311.9,333.6 314.3,333 315.7,332.3 316.2,331.7" fill="#389ae0"/>
<polygon points="272.8,332 272.7,326.6 273.3,326 274.7,325.5 277,325 280,324.5 283.6,324.1 287.6,323.9 291.8,323.7 296.1,323.7 300.3,323.8 304.3,324 307.8,324.3 310.7,324.7 312.8,325.2 314.2,325.8 314.6,326.3 314.7,331.7 314.3,332.3 312.9,332.9 310.7,333.5 307.7,333.9 304.2,334.3 300.1,334.6 295.7,334.8 291.3,334.8 287,334.7 282.9,334.5 279.4,334.1 276.5,333.7 274.4,333.2 273.2,332.6" fill="#389ae0"/>
<polygon points="314.2,325.8 312.8,325.2 310.7,324.7 307.8,324.3 304.3,324 300.3,323.8 296.1,323.7 291.8,323.7 287.6,323.9 283.6,324.1 280,324.5 277,325 274.7,325.5 273.3,326 272.7,326.6 273,327.2 274.3,327.8 276.4,328.3 279.3,328.7 282.8,329 286.8,329.3 291.2,329.4 295.6,329.3 300,329.2 304.1,328.9 307.6,328.5 310.6,328 312.8,327.5 314.2,326.9 314.6,326.3" fill="#1c5882" stroke="#1c5882" stroke-width="1"/>
<polygon points="312.3,325.8 311.1,325.3 309.1,324.9 306.5,324.5 303.3,324.2 299.7,324 295.9,324 292,324 288.1,324.1 284.5,324.4 281.3,324.7 278.6,325.1 276.5,325.6 275.2,326.1 274.6,326.6 275,327.2 276.1,327.7 278,328.1 280.6,328.5 283.8,328.8 287.5,329 291.4,329.1 295.4,329.1 299.4,328.9 303.1,328.7 306.3,328.3 309,327.9 311,327.4 312.3,326.9 312.7,326.4" fill="#389ae0"/>
<polygon points="311.3,325.4 308.7,324.8 305.1,324.4 300.6,324.1 295.5,324 290.4,324 285.5,324.3 281.2,324.7 277.8,325.3 275.5,325.9 274.6,326.6 275.2,327.3 277.2,327.9 280.4,328.5 279.6,327.7 280.5,327.1 282.4,326.6 284.7,326.2 286.8,326 288.7,325.8 290.4,325.6 292.3,325.4 294.6,325.2 297.8,325 301.9,325 306.6,325.1" fill="url(#mc)"/>
<polygon points="307.7,328.2 310.5,327.6 312.3,327 312.9,326.4 312.5,325.8 311,325.2 308.5,324.7 305.1,324.3 301.1,324.1 296.7,323.9 292.1,324 287.6,324.1 283.5,324.4 279.9,324.8 284.4,324.6 288.7,324.5 292.5,324.6 295.7,324.8 298.4,324.9 300.7,325.2 302.8,325.4 304.7,325.7 306.5,326 308,326.4 308.9,326.9 308.9,327.5" fill="#1c5882"/>
<g fill="#389ae0"><polygon points="201.6,484.6 200.3,483.3 200.2,482 199.9,476 200.9,474.7 203,473.4 206,472.3 210,471.3 214.5,470.5 219.6,469.9 224.9,469.6 230.3,469.5 235.5,469.7 240.3,470.1 244.5,470.8 247.9,471.7 250.4,472.8 251.8,474 252.2,475.3 252.4,481.3 251.6,482.6 249.6,483.9 246.7,485.2 242.8,486.2 238.1,487.1 232.9,487.7 227.4,488.1 221.9,488.1 216.5,487.9 211.6,487.4 207.4,486.7 204,485.7"/><polygon points="245.3,334.3 250,476.7 249.2,477.9 247.5,479.1 244.8,480.2 241.2,481.2 236.9,481.9 232.2,482.5 227.2,482.8 222.1,482.9 217.2,482.7 212.7,482.2 208.8,481.6 205.7,480.7 203.5,479.7 202.3,478.5 202.2,477.3 195.8,334.7 196.7,334 198.7,333.3 201.6,332.7 205.4,332.1 209.7,331.7 214.5,331.3 219.6,331.2 224.6,331.1 229.6,331.2 234.1,331.5 238,331.9 241.3,332.4 243.6,333 245,333.6"/></g>
<polygon points="195.7,335.1 197.7,336.3 199.8,336.7 201.8,337 203.8,337.3 205.9,337.5 207.9,337.6 209.9,337.8 212,337.9 214,338 219.4,488 217.2,487.8 215.1,487.6 213,487.4 210.8,487.1 208.7,486.7 206.5,486.3 204.4,485.7 202.2,484.9 200.1,482.7" fill="url(#mc)"/>
<polygon points="214,338 215.3,338 216.7,338 218.1,338 219.4,338.1 220.8,338.1 222.1,338 223.5,338 224.8,338 226.2,338 232.3,488 230.8,488.1 229.4,488.1 228,488.1 226.5,488.1 225.1,488.1 223.7,488.1 222.3,488.1 220.8,488 219.4,488" fill="url(#lc)"/>
<polygon points="195.7,335.1 195.9,335.5 196,335.6 196.2,335.7 196.4,335.8 196.5,335.9 196.7,335.9 196.8,336 197,336.1 197.2,336.1 201.7,484.6 201.5,484.5 201.3,484.4 201.1,484.3 201,484.1 200.8,484 200.6,483.8 200.4,483.6 200.3,483.4 200.1,482.7" fill="#1c5882"/>
<polygon points="245,333.6 243.6,333 241.3,332.4 238,331.9 234.1,331.5 229.6,331.2 224.6,331.1 219.6,331.2 214.5,331.3 209.7,331.7 205.4,332.1 201.6,332.7 198.7,333.3 196.7,334 195.8,334.7 195.9,335.4 197.1,336.1 199.3,336.7 202.5,337.3 206.5,337.7 211.2,337.9 216.3,338 221.5,338 226.7,337.8 231.7,337.5 236.1,337 239.8,336.4 242.6,335.8 244.5,335.1 245.3,334.3" fill="#1c5882" stroke="#1c5882" stroke-width="1"/>
<polygon points="243,333.7 241.8,333.1 239.6,332.5 236.7,332.1 233,331.7 228.8,331.5 224.3,331.4 219.6,331.4 215,331.6 210.6,331.9 206.6,332.3 203.1,332.8 200.4,333.4 198.6,334 197.7,334.7 197.8,335.4 199,336 201,336.6 204,337 207.7,337.4 211.9,337.7 216.6,337.8 221.4,337.7 226.2,337.6 230.8,337.2 234.8,336.8 238.2,336.3 240.8,335.7 242.6,335 243.3,334.4" fill="#389ae0"/>
<polygon points="200.4,335.9 199.3,335.3 199.2,334.7 199,329.2 199.8,328.6 201.5,328.1 204,327.5 207.2,327.1 211,326.7 215.1,326.4 219.5,326.3 223.9,326.2 228.1,326.3 232,326.5 235.4,326.9 238.2,327.3 240.2,327.8 241.4,328.3 241.6,328.9 241.8,334.4 241.1,335 239.5,335.6 237.1,336.2 233.9,336.7 230.1,337.1 225.9,337.4 221.4,337.5 216.9,337.5 212.5,337.4 208.5,337.2 205.1,336.9 202.3,336.4" fill="#389ae0"/>
<polygon points="241.4,328.3 240.2,327.8 238.2,327.3 235.4,326.9 232,326.5 228.1,326.3 223.9,326.2 219.5,326.3 215.1,326.4 211,326.7 207.2,327.1 204,327.5 201.5,328.1 199.8,328.6 199,329.2 199.1,329.8 200.1,330.4 202.1,330.9 204.8,331.4 208.3,331.7 212.3,331.9 216.6,332 221.2,332 225.6,331.8 229.9,331.6 233.7,331.2 236.9,330.7 239.3,330.1 240.9,329.5 241.6,328.9" fill="#1c5882" stroke="#1c5882" stroke-width="1"/>
<polygon points="239.4,328.4 238.4,327.9 236.6,327.4 234,327.1 230.9,326.8 227.4,326.6 223.5,326.5 219.6,326.5 215.6,326.7 211.8,326.9 208.4,327.2 205.5,327.7 203.2,328.1 201.7,328.7 201,329.2 201.1,329.8 202,330.3 203.8,330.8 206.3,331.2 209.4,331.5 213,331.7 217,331.8 221.1,331.7 225.1,331.6 229,331.3 232.4,331 235.3,330.5 237.5,330 239,329.5 239.6,329" fill="#389ae0"/>
<polygon points="238.6,328 236.2,327.4 232.7,326.9 228.2,326.6 223.2,326.5 217.9,326.6 212.9,326.8 208.3,327.3 204.7,327.8 202.1,328.5 201,329.2 201.3,329.9 203,330.6 206,331.1 205.5,330.4 206.7,329.7 208.8,329.2 211.3,328.8 213.6,328.5 215.6,328.4 217.4,328.2 219.3,328 221.8,327.8 225,327.6 229.2,327.5 233.9,327.6" fill="url(#mc)"/>
<polygon points="233.9,330.8 236.9,330.3 238.9,329.7 239.9,329 239.6,328.4 238.3,327.8 236,327.3 232.7,326.9 228.8,326.6 224.4,326.5 219.7,326.5 215.1,326.7 210.8,327 207,327.4 211.6,327.1 215.9,327 219.9,327.1 223.3,327.2 226.1,327.4 228.6,327.6 230.7,327.9 232.6,328.2 234.3,328.6 235.4,329 236,329.6 235.5,330.2" fill="#1c5882"/>
<g fill="#389ae0"><polygon points="478.9,478.9 478.7,485 477.7,486.3 475.5,487.5 472.3,488.6 468.2,489.5 463.3,490.1 458,490.5 452.5,490.6 446.9,490.3 441.7,489.8 436.9,489.1 432.8,488.1 429.7,486.9 427.5,485.6 426.5,484.3 426.6,478.3 426.7,476.9 428,475.7 430.3,474.5 433.6,473.5 437.6,472.7 442.3,472.1 447.5,471.8 452.8,471.7 458.2,471.9 463.3,472.4 468,473.1 472.1,474 475.3,475.1 477.6,476.3 478.8,477.6"/><polygon points="479.9,336.5 476.6,480.3 475.6,481.4 473.6,482.6 470.7,483.5 466.9,484.3 462.5,484.9 457.6,485.2 452.6,485.3 447.5,485.1 442.7,484.6 438.3,483.9 434.6,483.1 431.7,482 429.7,480.9 428.8,479.6 430.4,336.1 430.5,335.4 431.7,334.7 433.8,334 436.9,333.5 440.8,333 445.2,332.7 450.1,332.5 455.2,332.5 460.3,332.6 465.1,332.8 469.6,333.2 473.4,333.7 476.5,334.3 478.6,335 479.8,335.7"/></g>
<polygon points="430.3,335.9 433,337.5 435.7,338.1 438.3,338.5 441,338.9 443.7,339.1 446.4,339.3 449.1,339.4 451.7,339.5 454.4,339.5 451.9,490.6 449.1,490.5 446.3,490.4 443.4,490.1 440.6,489.8 437.8,489.4 434.9,488.8 432.1,488.1 429.3,486.9 426.4,484" fill="url(#mc)"/>
<polygon points="454.4,339.5 456.2,339.5 458,339.5 459.8,339.4 461.6,339.4 463.4,339.3 465.2,339.2 466.9,339.1 468.7,338.9 470.5,338.7 468.9,489.1 467,489.5 465.1,489.8 463.2,490 461.3,490.2 459.5,490.3 457.6,490.4 455.7,490.5 453.8,490.6 451.9,490.6" fill="url(#lc)"/>
<polygon points="430.3,335.9 430.8,336.6 431.3,336.9 431.8,337.1 432.3,337.3 432.8,337.5 433.3,337.6 433.8,337.7 434.3,337.9 434.8,338 431.2,487.7 430.6,487.5 430.1,487.3 429.6,487.1 429.1,486.8 428.5,486.6 428,486.2 427.5,485.8 427,485.3 426.4,484" fill="#1c5882"/>
<polygon points="478.6,335 476.5,334.3 473.4,333.7 469.6,333.2 465.1,332.8 460.3,332.6 455.2,332.5 450.1,332.5 445.2,332.7 440.8,333 436.9,333.5 433.8,334 431.7,334.7 430.5,335.4 430.4,336.1 431.3,336.8 433.4,337.5 436.4,338.1 440.2,338.7 444.8,339.1 449.8,339.4 455,339.5 460.3,339.4 465.3,339.3 469.8,338.9 473.7,338.4 476.8,337.8 478.8,337.2 479.9,336.5 479.8,335.7" fill="#1c5882" stroke="#1c5882" stroke-width="1"/>
<polygon points="476.8,335.1 474.8,334.5 472,333.9 468.4,333.4 464.3,333.1 459.8,332.8 455.2,332.7 450.5,332.8 446,332.9 441.9,333.2 438.4,333.6 435.5,334.2 433.5,334.8 432.4,335.4 432.3,336.1 433.2,336.7 435.1,337.4 437.9,338 441.4,338.5 445.6,338.8 450.2,339.1 455,339.2 459.8,339.2 464.5,339 468.7,338.7 472.2,338.2 475,337.7 476.9,337.1 477.9,336.4 477.8,335.7" fill="#389ae0"/>
<polygon points="476.5,330.9 476.4,336.4 475.5,337 473.7,337.6 471.1,338.1 467.8,338.5 463.8,338.8 459.5,338.9 455,339 450.5,338.9 446.2,338.6 442.3,338.3 439,337.8 436.4,337.3 434.7,336.7 433.8,336.1 433.9,330.6 434,330 435,329.4 436.9,328.8 439.5,328.4 442.8,328 446.7,327.7 450.9,327.6 455.3,327.5 459.6,327.6 463.8,327.9 467.7,328.2 471,328.6 473.6,329.1 475.5,329.7 476.4,330.3" fill="#389ae0"/>
<polygon points="475.5,329.7 473.6,329.1 471,328.6 467.7,328.2 463.8,327.9 459.6,327.6 455.3,327.5 450.9,327.6 446.7,327.7 442.8,328 439.5,328.4 436.9,328.8 435,329.4 434,330 433.9,330.6 434.7,331.2 436.5,331.8 439.1,332.3 442.4,332.8 446.3,333.1 450.6,333.3 455.1,333.4 459.6,333.4 463.9,333.2 467.9,332.9 471.2,332.5 473.8,332.1 475.6,331.5 476.5,330.9 476.4,330.3" fill="#1c5882" stroke="#1c5882" stroke-width="1"/>
<polygon points="473.6,329.8 471.9,329.2 469.5,328.8 466.5,328.4 463,328.1 459.2,327.9 455.3,327.8 451.3,327.8 447.5,328 444,328.2 440.9,328.6 438.5,329 436.8,329.5 435.9,330 435.9,330.6 436.6,331.1 438.2,331.7 440.6,332.1 443.6,332.5 447.1,332.8 451,333.1 455.1,333.1 459.2,333.1 463.1,333 466.7,332.7 469.7,332.3 472.1,331.9 473.7,331.4 474.5,330.9 474.5,330.3" fill="#389ae0"/>
<polygon points="472.3,329.3 469.1,328.7 465,328.2 460.1,327.9 454.9,327.8 449.7,327.9 444.9,328.1 440.9,328.6 437.9,329.2 436.2,329.8 435.9,330.6 437,331.3 439.6,332 443.3,332.5 441.9,331.7 442.2,331 443.7,330.5 445.7,330.1 447.8,329.9 449.5,329.7 451.1,329.5 452.8,329.3 455,329.1 458.1,328.9 462.2,328.9 467.1,329" fill="url(#mc)"/>
<polygon points="471,332.2 473.3,331.6 474.6,331 474.8,330.4 473.8,329.7 471.7,329.1 468.7,328.6 465,328.2 460.7,327.9 456.1,327.8 451.4,327.8 447,328 443,328.3 439.7,328.7 444.4,328.5 448.8,328.5 452.6,328.6 455.7,328.8 458.2,329.1 460.2,329.3 462.2,329.5 464.2,329.7 466.3,330 468.4,330.4 470.2,330.9 471.2,331.5" fill="#1c5882"/>
<g fill="#389ae0"><polygon points="178.7,477.3 179.9,478.5 180.2,484.6 180.2,485.9 179.1,487.3 176.9,488.6 173.6,489.9 169.5,491 164.6,491.8 159.2,492.5 153.5,492.9 147.9,492.9 142.5,492.7 137.6,492.2 133.5,491.4 130.2,490.4 128.1,489.3 127,488 126.6,481.9 126.8,480.5 128.1,479.2 130.5,477.9 133.8,476.7 138,475.7 142.9,474.9 148.1,474.3 153.6,473.9 159,473.9 164.2,474.1 169,474.5 173.1,475.3 176.4,476.2"/><polygon points="129,483.1 119.9,338.2 120,337.5 121.3,336.7 123.6,336 126.8,335.3 130.8,334.8 135.4,334.3 140.4,334 145.5,333.8 150.7,333.8 155.6,333.9 160.1,334.1 164,334.5 167.1,335.1 169.2,335.7 170.3,336.4 177.7,480.1 177.7,481.3 176.7,482.5 174.7,483.7 171.7,484.9 167.9,485.8 163.4,486.6 158.4,487.2 153.3,487.5 148.1,487.6 143.2,487.4 138.7,486.9 134.9,486.3 132,485.4 130,484.3"/></g>
<polygon points="119.8,337.9 122.6,339.3 125.4,339.8 128.2,340.1 131.1,340.4 133.9,340.6 136.7,340.7 139.5,340.8 142.3,340.9 145.1,340.9 153.6,492.9 150.7,492.9 147.7,492.8 144.7,492.6 141.8,492.4 138.8,492 135.8,491.5 132.9,490.9 129.9,489.9 126.9,487.4" fill="url(#nc)"/>
<polygon points="170.3,336.4 169.2,335.7 167.1,335.1 164,334.5 160.1,334.1 155.6,333.9 150.7,333.8 145.5,333.8 140.4,334 135.4,334.3 130.8,334.8 126.8,335.3 123.6,336 121.3,336.7 120,337.5 119.9,338.2 120.8,338.9 122.9,339.5 125.9,340.1 129.8,340.5 134.4,340.8 139.5,340.9 144.9,340.9 150.2,340.7 155.4,340.3 160,339.8 164,339.2 167.1,338.6 169.3,337.8 170.4,337.1" fill="#1c5882" stroke="#1c5882" stroke-width="1"/>
<polygon points="168.3,336.4 167.3,335.8 165.4,335.2 162.5,334.8 159,334.4 154.8,334.1 150.3,334 145.5,334.1 140.7,334.3 136.1,334.6 131.9,335 128.2,335.5 125.3,336.1 123.2,336.8 122,337.4 121.9,338.1 122.8,338.8 124.7,339.4 127.5,339.8 131.1,340.2 135.3,340.5 140,340.6 144.9,340.6 149.8,340.4 154.5,340.1 158.8,339.6 162.5,339.1 165.4,338.5 167.4,337.8 168.4,337.1" fill="#389ae0"/>
<polygon points="123.4,338.1 123.1,332.5 123.2,331.9 124.3,331.3 126.3,330.7 129,330.1 132.4,329.7 136.4,329.3 140.7,329 145.2,328.9 149.6,328.8 153.9,328.9 157.8,329.1 161.1,329.5 163.8,329.9 165.6,330.4 166.5,331 166.8,336.5 166.8,337.1 165.9,337.8 164,338.4 161.3,339 157.9,339.5 153.9,339.9 149.5,340.2 144.9,340.3 140.3,340.4 136,340.3 132,340 128.6,339.7 126,339.2 124.3,338.7" fill="#389ae0"/>
<polygon points="166.5,331 165.6,330.4 163.8,329.9 161.1,329.5 157.8,329.1 153.9,328.9 149.6,328.8 145.2,328.9 140.7,329 136.4,329.3 132.4,329.7 129,330.1 126.3,330.7 124.3,331.3 123.2,331.9 123.1,332.5 123.9,333.1 125.7,333.7 128.3,334.1 131.7,334.5 135.6,334.7 140,334.8 144.6,334.8 149.2,334.6 153.6,334.3 157.6,333.9 161.1,333.4 163.8,332.8 165.6,332.2 166.5,331.6" fill="#1c5882" stroke="#1c5882" stroke-width="1"/>
<polygon points="164.5,331.1 163.7,330.5 162,330.1 159.6,329.7 156.6,329.4 153.1,329.2 149.2,329.1 145.2,329.1 141.1,329.3 137.2,329.5 133.6,329.9 130.5,330.3 128,330.8 126.2,331.3 125.2,331.9 125.1,332.5 125.9,333 127.5,333.5 129.8,333.9 132.9,334.2 136.5,334.4 140.5,334.5 144.6,334.5 148.8,334.3 152.8,334.1 156.4,333.7 159.5,333.2 162,332.7 163.7,332.2 164.5,331.6" fill="#389ae0"/>
<polygon points="163.9,330.6 161.7,330 158.3,329.5 153.9,329.2 148.9,329.1 143.5,329.2 138.3,329.4 133.5,329.9 129.5,330.5 126.7,331.1 125.2,331.9 125.2,332.6 126.7,333.3 129.6,333.9 129.4,333.1 130.9,332.4 133.2,331.8 135.9,331.5 138.3,331.2 140.4,331 142.3,330.8 144.3,330.6 146.9,330.4 150.3,330.2 154.5,330.2 159.3,330.3" fill="url(#mc)"/>
<polygon points="158,333.5 161.2,333 163.5,332.3 164.7,331.7 164.8,331 163.7,330.4 161.5,329.9 158.4,329.5 154.5,329.2 150.1,329.1 145.3,329.1 140.6,329.3 136.1,329.6 132.1,330 136.7,329.7 141.2,329.6 145.3,329.6 148.8,329.7 151.9,329.9 154.5,330.1 156.8,330.4 158.6,330.8 160.1,331.2 160.9,331.7 161,332.3 160.1,332.9" fill="#1c5882"/>
<g fill="#389ae0"><polygon points="356.1,489 356.1,482.9 356.5,481.5 358,480.2 360.6,479 364.1,478 368.4,477.1 373.3,476.5 378.6,476.2 384,476.1 389.4,476.3 394.5,476.8 399.1,477.5 403.1,478.5 406.1,479.6 408.2,480.9 409.1,482.2 409.1,488.3 408.9,489.7 407.5,491.1 405.1,492.3 401.6,493.4 397.2,494.3 392.2,495 386.8,495.3 381.1,495.4 375.6,495.2 370.3,494.7 365.6,493.9 361.7,492.9 358.7,491.7 356.9,490.4"/><polygon points="358.3,484.3 357.4,338.9 357.8,338.1 359.2,337.4 361.7,336.7 365,336.2 369.1,335.7 373.7,335.4 378.7,335.2 383.9,335.1 389,335.3 393.8,335.5 398.2,335.9 401.9,336.4 404.8,337.1 406.7,337.8 407.6,338.5 406.8,483.7 406.6,484.9 405.4,486.1 403.1,487.3 399.9,488.3 396,489.1 391.4,489.7 386.4,490 381.3,490.1 376.2,489.9 371.4,489.4 367.1,488.7 363.5,487.8 360.8,486.7 359,485.5"/></g>
<polygon points="357.4,338.7 359.9,340.3 362.4,340.9 364.9,341.3 367.4,341.6 369.9,341.9 372.4,342.1 374.9,342.2 377.4,342.3 379.9,342.4 379.8,495.4 377.2,495.3 374.5,495.1 371.9,494.8 369.3,494.5 366.6,494.1 364,493.5 361.4,492.7 358.7,491.6 356.1,488.6" fill="url(#mc)"/>
<polygon points="379.9,342.4 381.5,342.4 383.2,342.4 384.9,342.4 386.5,342.3 388.2,342.3 389.9,342.2 391.5,342.1 393.2,342 394.9,341.9 395.6,494.6 393.9,494.8 392.1,495 390.3,495.1 388.6,495.3 386.8,495.3 385.1,495.4 383.3,495.4 381.6,495.4 379.8,495.4" fill="url(#lc)"/>
<polygon points="357.4,338.7 357.8,339.3 358.2,339.6 358.6,339.8 358.9,340 359.3,340.1 359.7,340.2 360.1,340.4 360.5,340.5 360.9,340.6 359.8,492.1 359.4,491.9 359,491.7 358.6,491.5 358.2,491.3 357.7,491 357.3,490.7 356.9,490.3 356.5,489.8 356.1,488.6" fill="#1c5882"/>
<polygon points="406.7,337.8 404.8,337.1 401.9,336.4 398.2,335.9 393.8,335.5 389,335.3 383.9,335.1 378.7,335.2 373.7,335.4 369.1,335.7 365,336.2 361.7,336.7 359.2,337.4 357.8,338.1 357.4,338.9 358.1,339.6 359.9,340.3 362.7,341 366.4,341.5 370.9,342 375.8,342.2 381.1,342.4 386.5,342.3 391.6,342.1 396.4,341.8 400.5,341.3 403.8,340.7 406.1,340 407.4,339.3 407.6,338.5" fill="#1c5882" stroke="#1c5882" stroke-width="1"/>
<polygon points="404.8,337.8 403,337.2 400.4,336.6 397,336.1 392.9,335.8 388.5,335.5 383.8,335.4 379,335.5 374.4,335.6 370.1,335.9 366.4,336.4 363.3,336.9 361.1,337.5 359.7,338.2 359.4,338.9 360.1,339.6 361.7,340.2 364.3,340.8 367.7,341.3 371.8,341.7 376.4,342 381.2,342.1 386.1,342 390.9,341.9 395.3,341.5 399,341.1 402.1,340.5 404.2,339.9 405.4,339.2 405.6,338.5" fill="#389ae0"/>
<polygon points="404.1,333 404.1,338.5 403.9,339.2 402.8,339.8 400.8,340.4 398,340.9 394.4,341.3 390.3,341.6 385.9,341.8 381.3,341.8 376.8,341.7 372.5,341.5 368.7,341.1 365.5,340.7 363.1,340.1 361.5,339.5 360.9,338.9 360.9,333.3 361.2,332.7 362.4,332.1 364.5,331.5 367.4,331 370.9,330.6 374.9,330.4 379.2,330.2 383.7,330.2 388.1,330.3 392.3,330.5 396,330.8 399.2,331.3 401.7,331.8 403.4,332.4" fill="#389ae0"/>
<polygon points="403.4,332.4 401.7,331.8 399.2,331.3 396,330.8 392.3,330.5 388.1,330.3 383.7,330.2 379.2,330.2 374.9,330.4 370.9,330.6 367.4,331 364.5,331.5 362.4,332.1 361.2,332.7 360.9,333.3 361.5,333.9 363.1,334.5 365.5,335.1 368.7,335.5 372.5,335.9 376.8,336.1 381.3,336.2 385.9,336.2 390.3,336 394.4,335.7 398,335.3 400.8,334.8 402.8,334.2 404,333.6 404.1,333" fill="#1c5882" stroke="#1c5882" stroke-width="1"/>
<polygon points="401.5,332.4 400,331.9 397.7,331.4 394.8,331 391.4,330.7 387.6,330.5 383.6,330.4 379.5,330.5 375.6,330.6 372,330.9 368.8,331.2 366.2,331.7 364.3,332.2 363.2,332.7 362.9,333.3 363.5,333.9 364.9,334.4 367.1,334.9 370,335.3 373.4,335.6 377.3,335.8 381.4,335.9 385.6,335.9 389.6,335.7 393.3,335.5 396.5,335.1 399.1,334.7 400.9,334.1 402,333.6 402.1,333" fill="#389ae0"/>
<polygon points="400.3,332 397.3,331.4 393.3,330.9 388.5,330.6 383.2,330.4 377.9,330.5 373,330.8 368.7,331.2 365.5,331.8 363.5,332.5 362.9,333.3 363.8,334 366.1,334.7 369.7,335.3 368.5,334.5 369.1,333.8 370.9,333.2 373,332.8 375.2,332.6 377.1,332.4 378.8,332.2 380.5,332 382.9,331.8 386.1,331.6 390.2,331.5 395.2,331.6" fill="url(#mc)"/>
<polygon points="397.9,335 400.5,334.4 402,333.7 402.4,333.1 401.7,332.4 399.8,331.8 397,331.3 393.3,330.8 389,330.6 384.4,330.4 379.7,330.4 375.1,330.6 371,330.9 367.5,331.4 372.2,331.2 376.6,331.1 380.5,331.2 383.7,331.4 386.4,331.6 388.6,331.8 390.7,332.1 392.7,332.4 394.7,332.7 396.6,333.1 398,333.6 398.6,334.3" fill="#1c5882"/>
<g fill="#389ae0"><polygon points="283.7,493.8 283.6,487.6 284.3,486.2 286.1,484.9 289,483.7 292.8,482.6 297.4,481.7 302.4,481.1 307.9,480.8 313.4,480.7 318.8,480.9 323.9,481.4 328.4,482.1 332.2,483.1 335,484.3 336.8,485.6 337.5,486.9 337.6,493.1 337.1,494.5 335.4,495.9 332.7,497.2 328.9,498.4 324.3,499.3 319.1,500 313.5,500.3 307.8,500.4 302.2,500.2 297,499.6 292.4,498.8 288.6,497.8 285.9,496.6 284.2,495.2"/><polygon points="333.4,341.4 335.2,488.4 334.8,489.7 333.3,490.9 330.7,492.1 327.3,493.1 323.1,494 318.3,494.6 313.2,494.9 307.9,495 302.8,494.8 298.1,494.3 293.9,493.6 290.4,492.6 287.9,491.5 286.4,490.3 285.9,489 282.3,341.7 283,341 284.8,340.2 287.5,339.5 291.1,339 295.4,338.5 300.2,338.1 305.4,337.9 310.6,337.9 315.7,338 320.6,338.3 324.8,338.7 328.4,339.2 331.1,339.9 332.8,340.6"/></g>
<polygon points="282.3,341.9 284.6,343.3 287,343.9 289.3,344.3 291.6,344.5 293.9,344.8 296.2,345 298.5,345.1 300.9,345.2 303.2,345.3 305.7,500.3 303.3,500.2 300.8,500 298.4,499.7 295.9,499.4 293.5,499 291.1,498.4 288.6,497.7 286.2,496.7 283.7,494" fill="url(#mc)"/>
<polygon points="303.2,345.3 304.7,345.3 306.3,345.3 307.8,345.3 309.3,345.3 310.9,345.3 312.4,345.3 314,345.2 315.5,345.2 317.1,345.1 320.4,500 318.7,500.1 317.1,500.2 315.5,500.3 313.8,500.4 312.2,500.4 310.6,500.4 309,500.4 307.3,500.4 305.7,500.3" fill="url(#lc)"/>
<polygon points="282.3,341.9 282.6,342.4 282.9,342.6 283.2,342.8 283.5,342.9 283.8,343 284,343.1 284.3,343.2 284.6,343.3 284.9,343.4 286.4,496.8 286.1,496.7 285.8,496.5 285.5,496.3 285.2,496.1 284.9,495.9 284.6,495.7 284.3,495.4 284,495 283.7,494" fill="#1c5882"/>
<polygon points="332.8,340.6 331.1,339.9 328.4,339.2 324.8,338.7 320.6,338.3 315.7,338 310.6,337.9 305.4,337.9 300.2,338.1 295.4,338.5 291.1,339 287.5,339.5 284.8,340.2 283,341 282.3,341.7 282.8,342.5 284.3,343.3 286.9,343.9 290.5,344.5 294.8,344.9 299.8,345.2 305.1,345.3 310.5,345.3 315.9,345.1 320.8,344.7 325.2,344.2 328.7,343.6 331.4,342.9 332.9,342.1 333.4,341.4" fill="#1c5882" stroke="#1c5882" stroke-width="1"/>
<polygon points="330.8,340.7 329.3,340 326.8,339.4 323.5,338.9 319.6,338.6 315.1,338.3 310.4,338.2 305.6,338.2 300.8,338.4 296.4,338.7 292.4,339.2 289.1,339.7 286.6,340.3 285,341 284.4,341.7 284.8,342.4 286.2,343.1 288.6,343.7 291.9,344.2 295.9,344.7 300.4,344.9 305.3,345 310.3,345 315.2,344.8 319.8,344.5 323.8,344 327.1,343.4 329.5,342.8 330.9,342.1 331.4,341.4" fill="#389ae0"/>
<polygon points="285.9,341.7 285.8,336.1 286.4,335.4 287.8,334.8 290.2,334.3 293.3,333.8 297,333.4 301.2,333.1 305.6,332.9 310.1,332.9 314.6,333 318.7,333.2 322.4,333.5 325.5,334 327.8,334.5 329.3,335.1 329.8,335.8 329.9,341.4 329.4,342.1 328.1,342.7 325.8,343.3 322.7,343.8 319,344.3 314.7,344.6 310.2,344.8 305.5,344.8 300.9,344.7 296.7,344.4 293,344.1 289.9,343.6 287.7,343 286.3,342.4" fill="#389ae0"/>
<polygon points="329.3,335.1 327.8,334.5 325.5,334 322.4,333.5 318.7,333.2 314.6,333 310.1,332.9 305.6,332.9 301.2,333.1 297,333.4 293.3,333.8 290.2,334.3 287.8,334.8 286.4,335.4 285.8,336.1 286.2,336.7 287.5,337.4 289.8,337.9 292.8,338.4 296.6,338.7 300.8,339 305.4,339.1 310.1,339.1 314.6,338.9 318.9,338.6 322.6,338.2 325.7,337.6 328,337.1 329.4,336.4 329.8,335.8" fill="#1c5882" stroke="#1c5882" stroke-width="1"/>
<polygon points="327.3,335.2 326,334.7 323.9,334.2 321.1,333.8 317.7,333.4 314,333.2 309.9,333.2 305.8,333.2 301.8,333.3 298,333.6 294.6,334 291.8,334.4 289.7,334.9 288.3,335.5 287.8,336.1 288.2,336.7 289.4,337.2 291.5,337.7 294.2,338.2 297.6,338.5 301.5,338.7 305.6,338.8 309.8,338.8 314,338.6 317.8,338.3 321.2,338 324,337.5 326.1,337 327.4,336.4 327.8,335.8" fill="#389ae0"/>
<polygon points="326.2,334.8 323.5,334.1 319.6,333.6 314.8,333.3 309.6,333.1 304.2,333.2 299,333.5 294.5,334 291,334.6 288.7,335.3 287.8,336.1 288.5,336.8 290.6,337.5 294,338.1 293.1,337.3 294,336.6 295.9,336 298.3,335.6 300.6,335.4 302.6,335.2 304.3,335 306.2,334.8 308.7,334.5 312,334.3 316.3,334.3 321.2,334.4" fill="url(#mc)"/>
<polygon points="322.7,337.8 325.5,337.2 327.3,336.5 328,335.9 327.5,335.2 325.8,334.5 323.2,334 319.6,333.6 315.4,333.3 310.8,333.1 306,333.1 301.3,333.3 296.9,333.6 293.2,334.1 297.9,333.9 302.4,333.8 306.4,333.9 309.8,334 312.7,334.2 315.1,334.5 317.2,334.7 319.3,335.1 321.2,335.4 322.8,335.9 323.8,336.4 323.9,337.1" fill="#1c5882"/>
<g fill="#389ae0"><polygon points="211,501.6 209.6,500.2 209.4,498.8 209.1,492.5 210.1,491.1 212.3,489.7 215.5,488.4 219.5,487.3 224.3,486.4 229.6,485.8 235.2,485.4 240.8,485.4 246.3,485.6 251.3,486.1 255.7,486.9 259.3,487.9 262,489 263.5,490.4 263.9,491.8 264.1,498 263.3,499.5 261.4,500.9 258.3,502.3 254.2,503.4 249.4,504.4 244,505.1 238.2,505.5 232.4,505.6 226.7,505.3 221.6,504.8 217.1,503.9 213.5,502.9"/><polygon points="257.1,344.3 261.6,493.3 260.9,494.6 259.1,495.9 256.3,497.1 252.6,498.1 248.1,499 243.2,499.6 237.9,500 232.6,500 227.4,499.8 222.7,499.3 218.6,498.6 215.3,497.6 213,496.5 211.7,495.2 211.5,493.9 205.1,344.7 206.1,343.9 208.2,343.1 211.2,342.4 215.1,341.8 219.6,341.3 224.6,341 229.9,340.8 235.3,340.7 240.4,340.9 245.2,341.1 249.4,341.6 252.8,342.1 255.3,342.8 256.7,343.5"/></g>
<polygon points="205.1,344.8 207.2,346.2 209.3,346.8 211.5,347.2 213.6,347.5 215.7,347.7 217.9,347.9 220,348.1 222.1,348.2 224.3,348.3 229.6,505.3 227.3,505.2 225.1,504.9 222.8,504.7 220.6,504.3 218.3,503.9 216.1,503.3 213.8,502.6 211.6,501.6 209.3,499" fill="url(#mc)"/>
<polygon points="224.3,348.3 225.7,348.3 227.1,348.4 228.5,348.4 230,348.4 231.4,348.4 232.8,348.4 234.2,348.4 235.7,348.3 237.1,348.3 243,505.4 241.5,505.5 240,505.5 238.5,505.5 237,505.6 235.6,505.6 234.1,505.5 232.6,505.5 231.1,505.4 229.6,505.3" fill="url(#lc)"/>
<polygon points="205.1,344.8 205.2,345.2 205.4,345.4 205.6,345.5 205.8,345.6 205.9,345.7 206.1,345.8 206.3,345.9 206.5,346 206.6,346 211,501.2 210.8,501.1 210.6,501 210.4,500.8 210.2,500.7 210.1,500.5 209.9,500.3 209.7,500.1 209.5,499.8 209.3,499" fill="#1c5882"/>
<polygon points="256.7,343.5 255.3,342.8 252.8,342.1 249.4,341.6 245.2,341.1 240.4,340.9 235.3,340.7 229.9,340.8 224.6,341 219.6,341.3 215.1,341.8 211.2,342.4 208.2,343.1 206.1,343.9 205.1,344.7 205.3,345.5 206.6,346.2 209,346.9 212.4,347.5 216.6,348 221.5,348.3 226.8,348.4 232.4,348.4 237.9,348.1 243,347.8 247.6,347.2 251.5,346.6 254.4,345.9 256.3,345.1 257.1,344.3" fill="#1c5882" stroke="#1c5882" stroke-width="1"/>
<polygon points="254.7,343.6 253.4,342.9 251.1,342.3 247.9,341.8 244.1,341.4 239.7,341.2 234.9,341 230,341.1 225.2,341.3 220.5,341.6 216.3,342 212.8,342.6 210,343.2 208.1,343.9 207.2,344.7 207.3,345.4 208.5,346.1 210.8,346.7 213.9,347.3 217.8,347.7 222.3,348 227.2,348.1 232.3,348 237.3,347.8 242.1,347.5 246.3,347 249.8,346.4 252.6,345.8 254.3,345.1 255,344.3" fill="#389ae0"/>
<polygon points="208.8,344.7 208.5,339 209.4,338.3 211.1,337.7 213.7,337.1 217.1,336.6 221,336.1 225.3,335.9 229.9,335.7 234.5,335.7 239,335.8 243.1,336 246.7,336.3 249.6,336.8 251.7,337.4 253,338 253.3,338.6 253.5,344.3 252.8,345 251.1,345.7 248.6,346.3 245.3,346.9 241.3,347.3 236.9,347.6 232.2,347.8 227.5,347.8 222.9,347.7 218.7,347.5 215,347.1 212.1,346.6 210,346 208.9,345.4" fill="#389ae0"/>
<polygon points="253,338 251.7,337.4 249.6,336.8 246.7,336.3 243.1,336 239,335.8 234.5,335.7 229.9,335.7 225.3,335.9 221,336.1 217.1,336.6 213.7,337.1 211.1,337.7 209.4,338.3 208.5,339 208.7,339.6 209.8,340.3 211.9,340.8 214.8,341.3 218.4,341.7 222.6,341.9 227.2,342.1 232,342 236.7,341.8 241.1,341.5 245.1,341.1 248.4,340.6 251,340 252.6,339.3 253.3,338.6" fill="#1c5882" stroke="#1c5882" stroke-width="1"/>
<polygon points="251,338.1 249.8,337.5 247.9,337 245.2,336.6 242,336.2 238.2,336 234.2,335.9 230,336 225.8,336.1 221.9,336.4 218.3,336.8 215.3,337.2 212.9,337.8 211.3,338.3 210.6,339 210.7,339.6 211.8,340.1 213.6,340.6 216.3,341.1 219.6,341.4 223.4,341.7 227.6,341.7 231.9,341.7 236.2,341.6 240.2,341.3 243.8,340.9 246.8,340.4 249.1,339.9 250.6,339.3 251.2,338.7" fill="#389ae0"/>
<polygon points="250.1,337.6 247.5,336.9 243.8,336.4 239.1,336.1 233.8,335.9 228.3,336 223,336.3 218.2,336.8 214.4,337.4 211.8,338.1 210.6,338.9 210.9,339.7 212.8,340.4 216,341.1 215.5,340.2 216.6,339.5 218.9,338.9 221.4,338.5 223.8,338.2 225.9,338 227.8,337.8 229.8,337.6 232.4,337.4 235.8,337.2 240.2,337.1 245.1,337.2" fill="url(#mc)"/>
<polygon points="245.3,340.7 248.4,340.1 250.5,339.4 251.4,338.7 251.2,338 249.8,337.4 247.3,336.8 243.8,336.4 239.7,336.1 235,335.9 230.2,335.9 225.3,336.1 220.8,336.4 216.8,336.9 221.6,336.6 226.2,336.5 230.3,336.6 233.9,336.7 236.9,336.9 239.5,337.2 241.8,337.5 243.8,337.8 245.5,338.2 246.8,338.7 247.4,339.3 247,340" fill="#1c5882"/>
<g fill="#389ae0"><polygon points="501.9,495.8 501.7,502.1 500.7,503.5 498.5,504.9 495.2,506.1 490.9,507 485.9,507.7 480.4,508.1 474.6,508.2 468.7,508 463.2,507.4 458.1,506.6 453.8,505.5 450.4,504.2 448.1,502.8 446.9,501.3 447,495 447.1,493.6 448.3,492.2 450.7,490.9 454,489.8 458.3,488.9 463.2,488.2 468.5,487.9 474.1,487.8 479.8,488 485.2,488.5 490.1,489.3 494.5,490.3 497.9,491.5 500.4,492.9 501.8,494.3"/><polygon points="503.8,346.6 499.5,497.1 498.6,498.5 496.5,499.7 493.5,500.7 489.6,501.6 485,502.2 480,502.6 474.6,502.7 469.3,502.4 464.2,501.9 459.6,501.2 455.6,500.2 452.5,499.1 450.4,497.8 449.3,496.5 451.7,346.2 451.8,345.4 452.9,344.6 455.2,343.9 458.3,343.3 462.3,342.8 467,342.5 472.1,342.3 477.4,342.2 482.7,342.3 487.9,342.6 492.6,343.1 496.7,343.6 500,344.3 502.3,345 503.6,345.8"/></g>
<polygon points="451.6,345.7 454.5,347.6 457.3,348.4 460.1,348.9 462.9,349.2 465.7,349.5 468.6,349.7 471.4,349.9 474.2,349.9 477,350 473.6,508.2 470.6,508.2 467.6,508 464.6,507.8 461.7,507.4 458.7,506.9 455.7,506.3 452.8,505.5 449.8,504.2 446.8,501" fill="url(#mc)"/>
<polygon points="477,350 478.9,350 480.8,350 482.7,349.9 484.5,349.8 486.4,349.7 488.3,349.6 490.2,349.5 492.1,349.3 493.9,349.1 491.4,506.7 489.4,507 487.4,507.4 485.4,507.6 483.5,507.8 481.5,508 479.5,508.1 477.5,508.2 475.5,508.2 473.6,508.2" fill="url(#lc)"/>
<polygon points="451.6,345.7 452.2,346.5 452.7,346.9 453.2,347.2 453.7,347.4 454.3,347.6 454.8,347.7 455.3,347.9 455.8,348 456.3,348.1 451.8,505.1 451.2,504.9 450.7,504.7 450.1,504.4 449.6,504.1 449,503.8 448.5,503.4 447.9,503 447.4,502.4 446.8,501" fill="#1c5882"/>
<polygon points="502.3,345 500,344.3 496.7,343.6 492.6,343.1 487.9,342.6 482.7,342.3 477.4,342.2 472.1,342.3 467,342.5 462.3,342.8 458.3,343.3 455.2,343.9 452.9,344.6 451.8,345.4 451.7,346.2 452.9,347 455.1,347.8 458.3,348.5 462.4,349.1 467.2,349.5 472.5,349.8 478.1,350 483.6,349.9 488.8,349.7 493.6,349.3 497.6,348.8 500.7,348.2 502.8,347.4 503.8,346.6 503.6,345.8" fill="#1c5882" stroke="#1c5882" stroke-width="1"/>
<polygon points="500.4,345.1 498.2,344.4 495.2,343.8 491.4,343.3 487.1,342.9 482.3,342.6 477.4,342.5 472.5,342.6 467.8,342.7 463.5,343.1 459.9,343.5 456.9,344.1 454.9,344.8 453.8,345.5 453.8,346.2 454.8,347 456.9,347.7 459.9,348.3 463.6,348.8 468.1,349.3 472.9,349.5 478,349.7 483.1,349.6 487.9,349.4 492.3,349.1 496,348.6 498.9,348 500.8,347.3 501.7,346.6 501.6,345.8" fill="#389ae0"/>
<polygon points="500.3,340.8 500.1,346.6 499.3,347.2 497.5,347.9 494.8,348.4 491.3,348.9 487.3,349.2 482.7,349.4 478,349.4 473.3,349.3 468.7,349 464.6,348.7 461,348.2 458.3,347.6 456.3,346.9 455.4,346.2 455.5,340.5 455.5,339.8 456.5,339.1 458.4,338.5 461.1,338 464.6,337.6 468.6,337.3 473,337.1 477.6,337.1 482.2,337.2 486.6,337.4 490.7,337.8 494.2,338.3 497,338.8 499.1,339.5 500.2,340.1" fill="#389ae0"/>
<polygon points="499.1,339.5 497,338.8 494.2,338.3 490.7,337.8 486.6,337.4 482.2,337.2 477.6,337.1 473,337.1 468.6,337.3 464.6,337.6 461.1,338 458.4,338.5 456.5,339.1 455.5,339.8 455.5,340.5 456.4,341.1 458.4,341.8 461.1,342.4 464.7,342.9 468.8,343.2 473.4,343.5 478.1,343.6 482.9,343.6 487.4,343.4 491.5,343.1 494.9,342.6 497.6,342.1 499.4,341.5 500.3,340.8 500.2,340.1" fill="#1c5882" stroke="#1c5882" stroke-width="1"/>
<polygon points="497.1,339.5 495.3,339 492.7,338.5 489.5,338 485.8,337.7 481.8,337.5 477.6,337.4 473.4,337.4 469.4,337.6 465.8,337.8 462.7,338.2 460.2,338.7 458.4,339.2 457.6,339.8 457.6,340.4 458.4,341.1 460.2,341.6 462.7,342.2 465.9,342.6 469.7,343 473.8,343.2 478.1,343.3 482.4,343.3 486.5,343.1 490.2,342.8 493.3,342.4 495.8,341.9 497.4,341.4 498.2,340.8 498.1,340.1" fill="#389ae0"/>
<polygon points="495.6,339.1 492.3,338.4 487.8,337.9 482.7,337.5 477.2,337.4 471.8,337.5 466.8,337.8 462.6,338.2 459.5,338.9 457.8,339.6 457.5,340.4 458.9,341.2 461.6,342 465.6,342.6 464,341.7 464.3,341 465.8,340.4 467.9,340 470,339.7 471.8,339.5 473.5,339.3 475.2,339.1 477.5,338.8 480.7,338.6 485,338.5 490.2,338.7" fill="url(#mc)"/>
<polygon points="494.7,342.2 497.1,341.6 498.3,340.9 498.4,340.2 497.3,339.5 495.1,338.8 491.9,338.3 487.8,337.8 483.3,337.5 478.4,337.4 473.5,337.4 468.9,337.6 464.7,337.9 461.3,338.4 466.3,338.2 470.9,338.2 474.9,338.3 478.2,338.5 480.8,338.8 483,339 485.1,339.3 487.2,339.5 489.5,339.8 491.7,340.2 493.7,340.8 494.8,341.5" fill="#1c5882"/>
<g fill="#389ae0"><polygon points="186.9,494 188.2,495.3 188.3,496.8 188.6,503.1 187.5,504.6 185.2,506.1 181.8,507.5 177.4,508.7 172.3,509.6 166.7,510.4 160.7,510.8 154.8,510.8 149.1,510.6 144,510 139.6,509.2 136.2,508.1 133.9,506.8 132.8,505.4 132.4,499 132.5,497.5 133.9,496 136.4,494.6 139.9,493.3 144.2,492.2 149.3,491.3 154.8,490.6 160.5,490.3 166.2,490.2 171.7,490.4 176.7,490.9 181,491.7 184.5,492.7"/><polygon points="134.9,500.3 125.5,348.6 125.7,347.7 127,346.9 129.3,346.1 132.7,345.4 136.9,344.8 141.7,344.3 146.9,343.9 152.3,343.7 157.8,343.7 163,343.8 167.7,344.1 171.8,344.5 175,345.1 177.3,345.8 178.5,346.5 178.5,347.3 186,498.3 184.9,499.6 182.8,501 179.7,502.2 175.7,503.3 171,504.2 165.9,504.8 160.5,505.2 155,505.2 149.9,505 145.2,504.5 141.2,503.7 138,502.8 135.9,501.6"/></g>
<polygon points="125.4,348.2 128.4,349.7 131.3,350.3 134.3,350.7 137.2,351 140.2,351.2 143.2,351.4 146.1,351.5 149.1,351.5 152,351.5 160.7,510.8 157.6,510.8 154.5,510.7 151.4,510.5 148.3,510.2 145.2,509.8 142,509.3 138.9,508.6 135.8,507.5 132.7,504.7" fill="url(#nc)"/>
<polygon points="178.5,346.5 177.3,345.8 175,345.1 171.8,344.5 167.7,344.1 163,343.8 157.8,343.7 152.3,343.7 146.9,343.9 141.7,344.3 136.9,344.8 132.7,345.4 129.3,346.1 127,346.9 125.7,347.7 125.5,348.6 126.5,349.3 128.7,350 131.9,350.6 136,351.1 140.9,351.4 146.3,351.5 151.9,351.5 157.5,351.3 162.9,350.9 167.8,350.4 172,349.7 175.2,349 177.4,348.2 178.5,347.3" fill="#1c5882" stroke="#1c5882" stroke-width="1"/>
<polygon points="176.4,346.6 175.3,345.9 173.2,345.3 170.2,344.8 166.5,344.3 162.1,344.1 157.3,344 152.3,344 147.3,344.2 142.5,344.5 138.1,345 134.2,345.6 131.1,346.2 129,347 127.8,347.7 127.6,348.5 128.6,349.2 130.6,349.8 133.5,350.4 137.3,350.8 141.8,351.1 146.7,351.2 151.9,351.2 157.1,351 162,350.6 166.5,350.1 170.4,349.5 173.4,348.8 175.4,348.1 176.4,347.3" fill="#389ae0"/>
<polygon points="129.2,348.4 128.9,342.6 129,341.9 130.1,341.2 132.2,340.6 135,340 138.6,339.4 142.8,339 147.3,338.7 152,338.5 156.7,338.5 161.2,338.6 165.2,338.9 168.7,339.2 171.5,339.7 173.5,340.3 174.5,340.9 174.6,341.6 174.8,347.4 173.9,348.1 172,348.8 169.1,349.4 165.6,350 161.4,350.4 156.8,350.7 151.9,350.9 147.1,351 142.5,350.9 138.3,350.6 134.8,350.2 132,349.7 130.1,349.1" fill="#389ae0"/>
<polygon points="174.5,340.9 173.5,340.3 171.5,339.7 168.7,339.2 165.2,338.9 161.2,338.6 156.7,338.5 152,338.5 147.3,338.7 142.8,339 138.6,339.4 135,340 132.2,340.6 130.1,341.2 129,341.9 128.9,342.6 129.8,343.3 131.6,343.8 134.4,344.3 138,344.7 142.1,345 146.8,345.1 151.6,345.1 156.4,344.9 161.1,344.6 165.3,344.1 168.8,343.6 171.7,342.9 173.6,342.3 174.6,341.6" fill="#1c5882" stroke="#1c5882" stroke-width="1"/>
<polygon points="172.4,341 171.5,340.4 169.7,339.9 167.2,339.5 164,339.1 160.3,338.9 156.2,338.8 152,338.8 147.7,339 143.6,339.3 139.8,339.7 136.6,340.1 134,340.7 132.1,341.3 131.1,341.9 131,342.5 131.8,343.1 133.5,343.7 136,344.1 139.3,344.5 143.1,344.7 147.2,344.8 151.6,344.8 156,344.6 160.2,344.3 164,343.9 167.3,343.4 169.8,342.8 171.6,342.2 172.4,341.6" fill="#389ae0"/>
<polygon points="171.7,340.5 169.4,339.8 165.8,339.3 161.2,338.9 155.9,338.8 150.2,338.9 144.7,339.2 139.7,339.7 135.6,340.3 132.7,341.1 131.1,341.9 131.2,342.7 132.8,343.4 135.8,344.1 135.6,343.2 137.1,342.4 139.5,341.8 142.3,341.4 144.8,341.1 147,340.9 149,340.7 151.1,340.5 153.8,340.3 157.4,340.1 161.9,340 166.8,340.1" fill="url(#mc)"/>
<polygon points="165.6,343.7 169,343.1 171.4,342.4 172.7,341.7 172.7,341 171.5,340.3 169.2,339.7 165.9,339.2 161.8,338.9 157.1,338.8 152.2,338.8 147.2,339 142.5,339.3 138.2,339.8 143.1,339.5 147.8,339.4 152.1,339.4 155.9,339.5 159.1,339.7 161.9,340 164.2,340.3 166.2,340.7 167.7,341.1 168.6,341.7 168.8,342.3 167.8,343" fill="#1c5882"/>
<g fill="#389ae0"><polygon points="373.3,506.5 373.3,500.1 373.6,498.6 375.2,497.2 377.8,495.9 381.5,494.7 385.9,493.8 391,493.1 396.6,492.8 402.3,492.7 407.9,492.9 413.3,493.4 418.2,494.2 422.3,495.3 425.6,496.5 427.9,497.9 428.9,499.4 428.9,505.7 428.7,507.3 427.4,508.8 424.9,510.2 421.3,511.4 416.8,512.4 411.5,513.1 405.8,513.5 399.9,513.6 394,513.3 388.5,512.8 383.5,511.9 379.4,510.8 376.2,509.5 374.1,508"/><polygon points="375.7,501.6 375.3,349.3 375.6,348.5 377.1,347.7 379.6,346.9 383.1,346.3 387.3,345.8 392.2,345.4 397.4,345.2 402.8,345.2 408.2,345.3 413.3,345.6 417.9,346 421.9,346.6 425,347.3 427.1,348.1 428.1,348.9 426.5,500.9 426.4,502.3 425.2,503.6 422.9,504.9 419.6,506 415.4,506.9 410.7,507.5 405.5,507.9 400,507.9 394.7,507.7 389.6,507.2 385.1,506.4 381.3,505.4 378.3,504.2 376.5,502.9"/></g>
<polygon points="375.3,349.1 377.9,350.9 380.5,351.5 383.2,352 385.8,352.4 388.4,352.6 391.1,352.8 393.7,353 396.3,353.1 398.9,353.2 398.2,513.6 395.4,513.4 392.6,513.2 389.9,513 387.1,512.6 384.3,512.1 381.6,511.4 378.8,510.6 376,509.4 373.3,506.1" fill="url(#mc)"/>
<polygon points="398.9,353.2 400.7,353.2 402.4,353.2 404.2,353.2 405.9,353.1 407.7,353.1 409.4,353 411.2,352.9 412.9,352.8 414.7,352.7 414.7,512.6 412.9,512.9 411.1,513.1 409.2,513.3 407.4,513.4 405.5,513.5 403.7,513.6 401.8,513.6 400,513.6 398.2,513.6" fill="url(#lc)"/>
<polygon points="375.3,349.1 375.7,349.8 376.1,350.1 376.5,350.3 376.9,350.5 377.3,350.7 377.8,350.8 378.2,351 378.6,351.1 379,351.2 377.2,509.9 376.7,509.7 376.3,509.5 375.9,509.3 375.4,509 375,508.7 374.6,508.4 374.1,508 373.7,507.4 373.3,506.1" fill="#1c5882"/>
<polygon points="427.1,348.1 425,347.3 421.9,346.6 417.9,346 413.3,345.6 408.2,345.3 402.8,345.2 397.4,345.2 392.2,345.4 387.3,345.8 383.1,346.3 379.6,346.9 377.1,347.7 375.6,348.5 375.3,349.3 376.1,350.1 378.1,350.9 381.1,351.6 385.1,352.3 389.8,352.7 395,353 400.6,353.2 406.2,353.1 411.7,352.9 416.6,352.5 420.9,352 424.3,351.3 426.7,350.6 428,349.7 428.1,348.9" fill="#1c5882" stroke="#1c5882" stroke-width="1"/>
<polygon points="425.1,348.2 423.1,347.5 420.3,346.8 416.6,346.3 412.4,345.9 407.7,345.6 402.7,345.5 397.7,345.5 392.9,345.7 388.4,346.1 384.5,346.5 381.4,347.1 379.1,347.8 377.7,348.5 377.4,349.3 378.2,350.1 380,350.8 382.8,351.4 386.4,352 390.8,352.4 395.6,352.7 400.7,352.8 405.9,352.8 410.9,352.6 415.4,352.2 419.4,351.7 422.5,351.1 424.7,350.4 425.9,349.7 426,348.9" fill="#389ae0"/>
<polygon points="424.3,349.6 423.2,350.3 421.1,351 418.2,351.6 414.5,352 410.3,352.4 405.6,352.6 400.8,352.6 396,352.5 391.5,352.2 387.4,351.8 384,351.3 381.4,350.7 379.7,350 379,349.3 379,343.5 379.3,342.8 380.5,342.1 382.7,341.5 385.7,340.9 389.3,340.5 393.5,340.2 398,340 402.7,340 407.3,340.1 411.7,340.3 415.7,340.7 419.1,341.2 421.8,341.8 423.6,342.4 424.5,343.1 424.4,348.9" fill="#389ae0"/>
<polygon points="423.6,342.4 421.8,341.8 419.1,341.2 415.7,340.7 411.7,340.3 407.3,340.1 402.7,340 398,340 393.5,340.2 389.3,340.5 385.7,340.9 382.7,341.5 380.5,342.1 379.3,342.8 379,343.5 379.7,344.2 381.4,344.8 384,345.4 387.4,345.9 391.5,346.3 396,346.6 400.8,346.7 405.6,346.6 410.3,346.5 414.6,346.1 418.2,345.7 421.2,345.1 423.2,344.5 424.4,343.8 424.5,343.1" fill="#1c5882" stroke="#1c5882" stroke-width="1"/>
<polygon points="421.6,342.5 420,341.9 417.5,341.4 414.4,341 410.8,340.6 406.8,340.4 402.6,340.3 398.4,340.3 394.2,340.5 390.5,340.8 387.1,341.2 384.4,341.6 382.5,342.2 381.4,342.8 381.1,343.4 381.8,344.1 383.3,344.7 385.7,345.2 388.8,345.7 392.5,346 396.6,346.3 400.9,346.4 405.3,346.3 409.5,346.2 413.4,345.9 416.7,345.5 419.4,345 421.2,344.4 422.3,343.8 422.4,343.1" fill="#389ae0"/>
<polygon points="420.3,342 417.1,341.3 412.8,340.8 407.7,340.4 402.2,340.3 396.7,340.4 391.5,340.7 387,341.2 383.7,341.8 381.6,342.6 381.1,343.4 382.1,344.3 384.7,345 388.5,345.6 387.2,344.8 387.7,344 389.5,343.4 391.8,342.9 394,342.7 395.9,342.5 397.7,342.3 399.6,342 402,341.8 405.3,341.6 409.7,341.5 414.9,341.6" fill="url(#mc)"/>
<polygon points="418.1,345.3 420.8,344.7 422.3,343.9 422.7,343.2 421.8,342.5 419.8,341.8 416.7,341.2 412.9,340.7 408.3,340.4 403.5,340.3 398.5,340.3 393.7,340.5 389.4,340.8 385.7,341.3 390.7,341.1 395.3,341 399.4,341.2 402.9,341.4 405.7,341.6 408,341.8 410.2,342.1 412.4,342.4 414.6,342.8 416.6,343.2 418.1,343.8 418.8,344.5" fill="#1c5882"/>
<g fill="#389ae0"><polygon points="297.5,511.8 297.4,505.3 298.1,503.8 300,502.3 302.9,501 306.9,499.8 311.6,498.8 316.9,498.2 322.6,497.8 328.4,497.7 334.1,497.9 339.4,498.5 344.2,499.3 348.2,500.4 351.3,501.6 353.2,503.1 354,504.6 354.1,511 353.6,512.6 351.9,514.1 349.1,515.6 345.2,516.8 340.4,517.9 335,518.6 329.1,519 323.1,519.1 317.2,518.8 311.7,518.3 306.8,517.4 302.8,516.2 299.9,514.9 298.1,513.4"/><polygon points="299.9,506.8 296.6,352.5 297.2,351.6 299,350.8 301.9,350 305.6,349.4 310.1,348.9 315.1,348.5 320.5,348.3 326,348.2 331.5,348.4 336.5,348.7 341.1,349.1 344.9,349.7 347.7,350.4 349.6,351.2 350.3,352.1 351.6,506.1 351.2,507.5 349.6,508.9 347,510.2 343.5,511.3 339.1,512.3 334.1,512.9 328.8,513.3 323.2,513.4 317.8,513.1 312.8,512.6 308.4,511.8 304.7,510.8 302,509.6 300.4,508.2"/></g>
<polygon points="296.6,352.6 299,354.2 301.5,354.8 303.9,355.3 306.3,355.6 308.8,355.8 311.2,356 313.7,356.2 316.1,356.3 318.5,356.4 320.6,519 318,518.8 315.5,518.6 312.9,518.3 310.4,518 307.8,517.5 305.2,516.9 302.7,516.1 300.1,515 297.5,512.1" fill="url(#mc)"/>
<polygon points="318.5,356.4 320.1,356.4 321.8,356.5 323.4,356.5 325,356.5 326.6,356.4 328.3,356.4 329.9,356.4 331.5,356.3 333.1,356.2 336,518.6 334.3,518.8 332.6,518.9 330.9,519 329.1,519.1 327.4,519.1 325.7,519.1 324,519.1 322.3,519.1 320.6,519" fill="url(#lc)"/>
<polygon points="296.6,352.6 296.9,353.2 297.2,353.4 297.5,353.6 297.8,353.8 298.1,353.9 298.4,354 298.7,354.1 299,354.2 299.3,354.3 300.4,515.1 300.1,515 299.7,514.8 299.4,514.6 299.1,514.4 298.8,514.1 298.5,513.9 298.2,513.5 297.9,513.1 297.5,512.1" fill="#1c5882"/>
<polygon points="349.6,351.2 347.7,350.4 344.9,349.7 341.1,349.1 336.5,348.7 331.5,348.4 326,348.2 320.5,348.3 315.1,348.5 310.1,348.9 305.6,349.4 301.9,350 299,350.8 297.2,351.6 296.6,352.5 297.1,353.3 298.8,354.2 301.6,354.9 305.4,355.5 310,356 315.2,356.3 320.8,356.5 326.6,356.4 332.1,356.2 337.3,355.8 341.9,355.2 345.6,354.5 348.3,353.8 349.9,352.9 350.3,352.1" fill="#1c5882" stroke="#1c5882" stroke-width="1"/>
<polygon points="347.5,351.3 345.8,350.6 343.2,349.9 339.7,349.4 335.5,348.9 330.8,348.7 325.8,348.6 320.8,348.6 315.8,348.8 311.1,349.1 307,349.6 303.6,350.2 301,350.9 299.3,351.7 298.7,352.5 299.2,353.3 300.8,354 303.4,354.7 306.9,355.3 311.1,355.7 315.9,356 321,356.1 326.3,356.1 331.4,355.9 336.2,355.5 340.4,355 343.8,354.4 346.3,353.6 347.8,352.9 348.2,352.1" fill="#389ae0"/>
<polygon points="300.4,352.5 300.2,346.5 300.8,345.8 302.3,345.1 304.7,344.5 308,344 311.8,343.5 316.2,343.2 320.9,343 325.6,343 330.3,343.1 334.7,343.3 338.6,343.7 341.8,344.2 344.3,344.8 345.9,345.5 346.5,346.2 346.6,352.1 346.2,352.8 344.8,353.6 342.5,354.2 339.3,354.8 335.4,355.3 330.9,355.6 326.1,355.8 321.2,355.9 316.4,355.7 311.9,355.5 308,355.1 304.7,354.5 302.3,353.9 300.8,353.2" fill="#389ae0"/>
<polygon points="345.9,345.5 344.3,344.8 341.8,344.2 338.6,343.7 334.7,343.3 330.3,343.1 325.6,343 320.9,343 316.2,343.2 311.8,343.5 308,344 304.7,344.5 302.3,345.1 300.8,345.8 300.2,346.5 300.7,347.3 302.2,347.9 304.6,348.6 307.8,349.1 311.8,349.5 316.3,349.8 321.1,349.9 326,349.8 330.8,349.6 335.3,349.3 339.2,348.8 342.4,348.3 344.7,347.6 346.1,346.9 346.5,346.2" fill="#1c5882" stroke="#1c5882" stroke-width="1"/>
<polygon points="343.8,345.6 342.4,345 340.1,344.4 337.2,344 333.6,343.6 329.7,343.4 325.4,343.3 321.1,343.3 316.9,343.5 312.9,343.8 309.4,344.2 306.5,344.7 304.3,345.3 302.9,345.9 302.4,346.5 302.8,347.2 304.2,347.8 306.3,348.4 309.3,348.8 312.9,349.2 317,349.4 321.3,349.5 325.8,349.5 330.1,349.3 334.2,349 337.7,348.6 340.6,348.1 342.8,347.5 344,346.9 344.4,346.2" fill="#389ae0"/>
<polygon points="342.7,345.1 339.7,344.3 335.6,343.8 330.6,343.4 325,343.3 319.4,343.4 314,343.7 309.3,344.2 305.6,344.9 303.2,345.7 302.4,346.5 303.1,347.4 305.4,348.1 309,348.8 308,347.9 308.9,347.1 310.9,346.5 313.4,346 315.8,345.7 317.8,345.5 319.7,345.3 321.7,345.1 324.2,344.8 327.7,344.6 332.2,344.5 337.4,344.6" fill="url(#mc)"/>
<polygon points="339.2,348.4 342.2,347.8 344,347.1 344.7,346.3 344.1,345.5 342.3,344.8 339.4,344.2 335.6,343.8 331.2,343.4 326.3,343.3 321.3,343.3 316.3,343.5 311.8,343.8 307.9,344.4 312.9,344.1 317.6,344 321.8,344.1 325.4,344.3 328.4,344.5 330.9,344.8 333.2,345.1 335.4,345.4 337.4,345.8 339.2,346.3 340.3,346.9 340.4,347.6" fill="#1c5882"/>
<g fill="#389ae0"><polygon points="221.3,520.4 219.8,518.9 219.6,517.3 219.3,510.7 220.3,509.1 222.5,507.6 225.9,506.2 230.1,505 235.1,504 240.6,503.3 246.5,502.9 252.4,502.9 258.1,503.1 263.4,503.7 268.1,504.5 271.9,505.6 274.7,506.9 276.4,508.4 276.9,509.9 277.1,516.5 276.3,518.1 274.3,519.7 271.1,521.2 266.9,522.4 261.8,523.5 256.1,524.3 250.1,524.7 244,524.8 238,524.5 232.6,523.9 227.8,523 224,521.8"/><polygon points="270.2,355.3 274.5,511.5 273.8,513 271.9,514.4 269,515.7 265.1,516.9 260.5,517.8 255.3,518.5 249.8,518.9 244.2,519 238.7,518.7 233.7,518.2 229.4,517.4 225.9,516.3 223.4,515 222.1,513.7 221.8,512.2 215.5,355.8 216.5,354.9 218.6,354 221.8,353.2 225.8,352.6 230.6,352 235.8,351.6 241.4,351.4 247,351.4 252.4,351.5 257.5,351.8 261.9,352.3 265.5,352.9 268.2,353.6 269.8,354.4"/></g>
<polygon points="215.4,355.9 217.7,357.5 219.9,358.1 222.2,358.5 224.4,358.8 226.7,359.1 228.9,359.3 231.2,359.5 233.4,359.6 235.6,359.7 240.8,524.5 238.4,524.4 236,524.1 233.7,523.8 231.3,523.4 229,522.9 226.6,522.3 224.2,521.5 221.9,520.4 219.5,517.5" fill="url(#mc)"/>
<polygon points="235.6,359.7 237.1,359.8 238.6,359.8 240.1,359.8 241.6,359.9 243.1,359.9 244.6,359.9 246.1,359.8 247.6,359.8 249.1,359.8 254.9,524.6 253.4,524.7 251.8,524.7 250.2,524.8 248.6,524.8 247.1,524.8 245.5,524.8 243.9,524.7 242.3,524.6 240.8,524.5" fill="url(#lc)"/>
<polygon points="215.4,355.9 215.6,356.4 215.8,356.5 216,356.7 216.2,356.8 216.3,356.9 216.5,357 216.7,357.1 216.9,357.2 217.1,357.3 221.2,520 221.1,519.9 220.9,519.7 220.7,519.6 220.5,519.4 220.3,519.2 220.1,519 219.9,518.7 219.7,518.4 219.5,517.5" fill="#1c5882"/>
<polygon points="269.8,354.4 268.2,353.6 265.5,352.9 261.9,352.3 257.5,351.8 252.4,351.5 247,351.4 241.4,351.4 235.8,351.6 230.6,352 225.8,352.6 221.8,353.2 218.6,354 216.5,354.9 215.5,355.8 215.7,356.6 217.1,357.5 219.7,358.2 223.3,358.9 227.8,359.4 232.9,359.7 238.6,359.9 244.4,359.8 250.2,359.6 255.6,359.2 260.4,358.6 264.4,357.9 267.5,357.1 269.4,356.2 270.2,355.3" fill="#1c5882" stroke="#1c5882" stroke-width="1"/>
<polygon points="267.6,354.5 266.2,353.8 263.7,353.1 260.4,352.5 256.3,352.1 251.7,351.8 246.7,351.7 241.5,351.7 236.4,351.9 231.5,352.3 227.1,352.8 223.4,353.4 220.5,354.1 218.6,354.9 217.7,355.7 217.9,356.5 219.2,357.3 221.5,358 224.8,358.6 229,359.1 233.7,359.4 238.9,359.5 244.3,359.5 249.6,359.2 254.6,358.9 259,358.3 262.7,357.7 265.5,356.9 267.3,356.2 268,355.3" fill="#389ae0"/>
<polygon points="219.3,355.7 219.1,349.7 219.9,349 221.7,348.3 224.5,347.6 227.9,347.1 232,346.6 236.6,346.3 241.4,346.1 246.2,346.1 250.9,346.2 255.3,346.4 259.1,346.8 262.2,347.3 264.5,348 265.9,348.6 266.2,349.4 266.4,355.3 265.7,356.1 264,356.9 261.4,357.5 257.9,358.2 253.8,358.6 249.1,359 244.2,359.2 239.2,359.2 234.4,359.1 229.9,358.8 226,358.4 222.9,357.9 220.7,357.2 219.5,356.5" fill="#389ae0"/>
<polygon points="265.9,348.6 264.5,348 262.2,347.3 259.1,346.8 255.3,346.4 250.9,346.2 246.2,346.1 241.4,346.1 236.6,346.3 232,346.6 227.9,347.1 224.5,347.6 221.7,348.3 219.9,349 219.1,349.7 219.3,350.5 220.5,351.2 222.7,351.8 225.8,352.3 229.7,352.8 234.1,353 239,353.2 244,353.1 248.9,352.9 253.6,352.6 257.7,352.1 261.2,351.5 263.8,350.8 265.5,350.1 266.2,349.4" fill="#1c5882" stroke="#1c5882" stroke-width="1"/>
<polygon points="263.7,348.7 262.5,348.1 260.4,347.5 257.6,347.1 254.1,346.7 250.2,346.5 245.9,346.4 241.5,346.4 237.1,346.6 233,346.9 229.3,347.3 226.1,347.8 223.7,348.4 222,349 221.3,349.7 221.5,350.4 222.6,351 224.6,351.6 227.4,352.1 230.9,352.5 234.9,352.7 239.3,352.8 243.9,352.8 248.3,352.6 252.6,352.3 256.3,351.9 259.5,351.3 261.9,350.7 263.4,350.1 264,349.4" fill="#389ae0"/>
<polygon points="262.8,348.2 260,347.5 256.1,346.9 251.1,346.5 245.5,346.4 239.7,346.5 234.2,346.8 229.2,347.3 225.2,348 222.5,348.8 221.3,349.7 221.7,350.6 223.7,351.4 227.1,352 226.5,351.1 227.7,350.3 230,349.6 232.6,349.2 235.2,348.9 237.3,348.7 239.3,348.5 241.4,348.2 244.1,348 247.7,347.7 252.3,347.6 257.5,347.8" fill="url(#mc)"/>
<polygon points="257.9,351.7 261.2,351 263.3,350.3 264.3,349.5 264,348.7 262.4,348 259.7,347.3 256.1,346.8 251.7,346.5 246.8,346.3 241.7,346.4 236.6,346.6 231.9,346.9 227.7,347.5 232.7,347.2 237.6,347 241.9,347.1 245.7,347.2 248.9,347.5 251.6,347.8 254,348.1 256.2,348.5 258,348.9 259.4,349.5 260.1,350.1 259.7,350.9" fill="#1c5882"/>
<g fill="#389ae0"><polygon points="527.4,514.3 527.1,521 526.2,522.6 523.9,524.1 520.5,525.4 516.1,526.4 510.9,527.2 505.1,527.7 499,527.7 492.8,527.5 486.9,526.9 481.5,525.9 476.9,524.7 473.3,523.3 470.7,521.8 469.4,520.1 469.4,518.5 469.5,511.9 470.7,510.4 473.1,508.9 476.6,507.7 481,506.7 486.1,506 491.7,505.6 497.6,505.5 503.5,505.8 509.2,506.3 514.5,507.2 519.1,508.3 522.8,509.6 525.5,511.1 527.1,512.7"/><polygon points="530.3,357.9 524.8,515.8 523.9,517.2 521.9,518.6 518.8,519.8 514.7,520.7 510,521.4 504.6,521.8 499,521.9 493.4,521.6 488,521.1 483.1,520.3 478.9,519.2 475.5,517.9 473.2,516.5 472,515 472,513.5 475.4,356.6 476.5,355.7 478.7,354.9 482,354.2 486.2,353.7 491,353.3 496.3,353.1 501.9,353 507.6,353.1 513,353.5 518,353.9 522.4,354.6 526,355.3 528.6,356.1 530,357"/></g>
<polygon points="475.2,356.9 478.2,359 481.2,359.8 484.2,360.4 487.2,360.8 490.1,361.1 493.1,361.3 496.1,361.5 499.1,361.6 502,361.6 497.4,527.8 494.3,527.7 491.2,527.5 488,527.2 484.9,526.8 481.8,526.2 478.6,525.5 475.5,524.4 472.4,523 469.3,519" fill="url(#mb)"/>
<polygon points="502,361.6 504,361.6 506,361.6 508,361.5 510,361.5 512,361.4 513.9,361.2 515.9,361.1 517.9,360.8 519.9,360.6 516.2,525.9 514.1,526.3 512,526.7 509.9,527 507.8,527.3 505.8,527.5 503.7,527.6 501.6,527.7 499.5,527.7 497.4,527.8" fill="url(#lb)"/>
<polygon points="475.2,356.9 475.8,357.8 476.3,358.2 476.9,358.5 477.4,358.7 478,358.9 478.6,359.1 479.1,359.3 479.7,359.4 480.2,359.6 474.5,524 473.9,523.8 473.3,523.5 472.7,523.2 472.2,522.8 471.6,522.4 471,522 470.4,521.5 469.8,520.8 469.3,519" fill="#1c5882"/>
<polygon points="528.6,356.1 526,355.3 522.4,354.6 518,353.9 513,353.5 507.6,353.1 501.9,353 496.3,353.1 491,353.3 486.2,353.7 482,354.2 478.7,354.9 476.5,355.7 475.4,356.6 475.4,357.5 476.7,358.4 479.1,359.2 482.6,360 487,360.6 492.1,361.1 497.8,361.5 503.6,361.6 509.4,361.6 515,361.3 519.9,360.9 524.1,360.3 527.3,359.6 529.4,358.8 530.3,357.9 530,357" fill="#1c5882" stroke="#1c5882" stroke-width="1"/>
<polygon points="526.5,356.2 524.2,355.5 520.9,354.8 516.8,354.2 512.2,353.8 507.2,353.5 502,353.3 496.8,353.4 491.9,353.6 487.5,354 483.6,354.5 480.6,355.1 478.6,355.8 477.5,356.6 477.6,357.4 478.8,358.3 481,359 484.2,359.8 488.3,360.4 493,360.8 498.2,361.1 503.5,361.3 508.9,361.2 514,361 518.5,360.6 522.4,360.1 525.3,359.4 527.3,358.7 528.1,357.9 527.9,357" fill="#389ae0"/>
<polygon points="479.2,356.7 479.3,350.6 480.3,349.9 482.2,349.3 485,348.7 488.6,348.2 492.8,347.9 497.4,347.7 502.2,347.7 507.1,347.8 511.8,348 516.1,348.4 519.9,349 523,349.6 525.2,350.3 526.4,351 526.7,351.8 526.5,357.8 525.6,358.6 523.8,359.3 521.1,359.9 517.5,360.4 513.2,360.8 508.5,361 503.5,361 498.5,360.9 493.6,360.6 489.2,360.2 485.5,359.6 482.4,358.9 480.4,358.2 479.3,357.4" fill="#389ae0"/>
<polygon points="525.2,350.3 523,349.6 519.9,349 516.1,348.4 511.8,348 507.1,347.8 502.2,347.7 497.4,347.7 492.8,347.9 488.6,348.2 485,348.7 482.2,349.3 480.3,349.9 479.3,350.6 479.4,351.4 480.5,352.1 482.6,352.9 485.6,353.5 489.4,354 493.8,354.5 498.6,354.7 503.7,354.9 508.7,354.8 513.4,354.6 517.7,354.3 521.3,353.8 524,353.2 525.9,352.5 526.7,351.8 526.4,351" fill="#1c5882" stroke="#1c5882" stroke-width="1"/>
<polygon points="523.1,350.4 521.1,349.7 518.3,349.2 514.9,348.7 511,348.3 506.7,348.1 502.3,348 497.9,348 493.7,348.2 489.9,348.5 486.7,348.9 484.1,349.4 482.4,350 481.5,350.7 481.6,351.4 482.6,352.1 484.5,352.7 487.2,353.3 490.7,353.8 494.7,354.2 499,354.4 503.6,354.5 508.1,354.5 512.4,354.3 516.3,354 519.5,353.5 522.1,353 523.7,352.4 524.5,351.7 524.3,351" fill="#389ae0"/>
<polygon points="521.5,349.8 517.9,349.1 513.1,348.5 507.7,348.1 501.9,348 496.2,348.1 490.9,348.4 486.6,348.9 483.4,349.6 481.7,350.5 481.6,351.4 483,352.2 486,353.1 490.3,353.7 488.5,352.8 488.7,351.9 490.2,351.3 492.4,350.8 494.5,350.5 496.5,350.3 498.2,350.1 500,349.9 502.4,349.6 505.8,349.4 510.3,349.3 515.7,349.4" fill="url(#mc)"/>
<polygon points="520.9,353.4 523.4,352.7 524.6,351.9 524.6,351.1 523.3,350.3 520.9,349.6 517.4,349 513.1,348.5 508.3,348.1 503.2,348 498,348 493.1,348.2 488.8,348.6 485.3,349.1 490.5,348.9 495.4,348.9 499.6,349 503.1,349.3 505.9,349.5 508.2,349.8 510.4,350.1 512.7,350.3 515.1,350.7 517.5,351.1 519.7,351.8 521,352.5" fill="#1c5882"/>
<g fill="#389ae0"><polygon points="196,512.3 197.4,513.8 197.5,515.5 197.8,522.1 196.7,523.8 194.3,525.4 190.8,526.9 186.2,528.2 180.9,529.3 174.9,530.1 168.7,530.6 162.4,530.6 156.5,530.4 151.1,529.7 146.4,528.8 142.8,527.6 140.4,526.1 139.2,524.6 138.8,517.9 138.9,516.3 140.3,514.6 142.9,513.1 146.5,511.6 151.1,510.4 156.4,509.4 162.1,508.7 168.2,508.2 174.2,508.2 179.9,508.4 185.2,509 189.7,509.9 193.4,511"/><polygon points="141.4,519.3 131.7,360 131.9,359.1 133.2,358.2 135.7,357.3 139.2,356.5 143.6,355.8 148.6,355.3 154.1,354.9 159.9,354.7 165.6,354.6 171,354.8 176,355.1 180.3,355.6 183.8,356.2 186.2,356.9 187.5,357.8 187.6,358.7 195.1,517 194,518.5 191.8,520 188.6,521.4 184.4,522.6 179.5,523.5 174.1,524.3 168.4,524.7 162.7,524.7 157.2,524.5 152.3,523.9 148.1,523.1 144.8,522 142.5,520.7"/></g>
<polygon points="131.7,359.7 134.8,361.4 137.9,362 141,362.4 144.1,362.7 147.2,363 150.3,363.2 153.4,363.3 156.6,363.3 159.7,363.4 168.5,530.7 165.2,530.6 162,530.5 158.7,530.3 155.4,529.9 152.2,529.5 148.9,528.9 145.6,528.1 142.3,527 139.1,523.9" fill="url(#nc)"/>
<polygon points="187.5,357.8 186.2,356.9 183.8,356.2 180.3,355.6 176,355.1 171,354.8 165.6,354.6 159.9,354.7 154.1,354.9 148.6,355.3 143.6,355.8 139.2,356.5 135.7,357.3 133.2,358.2 131.9,359.1 131.7,360 132.9,360.9 135.2,361.7 138.6,362.3 142.9,362.9 148.1,363.2 153.7,363.4 159.7,363.3 165.6,363.1 171.3,362.6 176.4,362 180.8,361.3 184.2,360.5 186.5,359.6 187.6,358.7" fill="#1c5882" stroke="#1c5882" stroke-width="1"/>
<polygon points="185.3,357.9 184.1,357.1 181.9,356.4 178.7,355.8 174.8,355.4 170.2,355.1 165.1,354.9 159.8,355 154.6,355.2 149.5,355.6 144.9,356.1 140.8,356.7 137.6,357.5 135.3,358.3 134.1,359.1 134,359.9 135,360.7 137.1,361.5 140.3,362.1 144.3,362.5 149,362.9 154.2,363 159.7,363 165.1,362.7 170.4,362.3 175.1,361.8 179.1,361.1 182.2,360.4 184.3,359.5 185.4,358.7" fill="#389ae0"/>
<polygon points="135.7,359.9 135.3,353.8 135.4,353 136.6,352.3 138.7,351.5 141.7,350.8 145.5,350.3 149.8,349.8 154.6,349.5 159.5,349.3 164.5,349.2 169.2,349.3 173.5,349.6 177.2,350 180.2,350.5 182.2,351.2 183.4,351.9 183.4,352.6 183.7,358.7 182.7,359.5 180.7,360.3 177.8,361 174.1,361.6 169.6,362.1 164.8,362.5 159.7,362.7 154.6,362.7 149.7,362.6 145.3,362.3 141.6,361.9 138.6,361.3 136.6,360.6" fill="#389ae0"/>
<polygon points="183.4,351.9 182.2,351.2 180.2,350.5 177.2,350 173.5,349.6 169.2,349.3 164.5,349.2 159.5,349.3 154.6,349.5 149.8,349.8 145.5,350.3 141.7,350.8 138.7,351.5 136.6,352.3 135.4,353 135.3,353.8 136.3,354.5 138.3,355.2 141.2,355.7 145,356.1 149.4,356.4 154.3,356.6 159.4,356.5 164.5,356.3 169.3,355.9 173.7,355.5 177.5,354.8 180.4,354.2 182.4,353.4 183.4,352.6" fill="#1c5882" stroke="#1c5882" stroke-width="1"/>
<polygon points="181.1,352 180.2,351.3 178.3,350.8 175.6,350.3 172.2,349.9 168.3,349.7 164,349.6 159.5,349.6 155,349.8 150.7,350.1 146.8,350.5 143.3,351 140.6,351.6 138.7,352.3 137.7,353 137.6,353.7 138.4,354.3 140.3,354.9 142.9,355.4 146.3,355.8 150.3,356.1 154.7,356.2 159.4,356.2 164,356 168.4,355.7 172.4,355.2 175.8,354.7 178.5,354 180.3,353.4 181.2,352.7" fill="#389ae0"/>
<polygon points="180.4,351.4 177.9,350.7 174.1,350.1 169.2,349.7 163.6,349.6 157.7,349.6 151.9,350 146.6,350.5 142.3,351.2 139.2,352.1 137.7,353 137.7,353.9 139.4,354.7 142.7,355.4 142.4,354.4 143.9,353.6 146.5,352.9 149.4,352.5 152.1,352.1 154.4,351.9 156.5,351.7 158.7,351.5 161.5,351.2 165.3,351 170,350.9 175.2,351" fill="url(#mc)"/>
<polygon points="174.1,355 177.7,354.3 180.2,353.5 181.4,352.7 181.4,351.9 180.1,351.2 177.7,350.6 174.2,350 169.8,349.7 164.9,349.5 159.7,349.5 154.5,349.8 149.5,350.1 145.1,350.7 150.2,350.3 155.1,350.2 159.7,350.2 163.6,350.3 167.1,350.5 170,350.8 172.5,351.2 174.6,351.6 176.2,352.1 177.2,352.8 177.4,353.5 176.4,354.2" fill="#1c5882"/>
<g fill="#389ae0"><polygon points="420.7,533.7 414.5,533.4 408.6,532.8 403.4,531.8 398.9,530.6 395.5,529.1 393.3,527.5 392.3,525.8 392.3,519.1 392.6,517.5 394.1,515.9 396.9,514.4 400.6,513.2 405.3,512.2 410.6,511.4 416.4,511 422.4,510.9 428.3,511.2 434,511.8 439.2,512.6 443.6,513.8 447.2,515.2 449.6,516.7 450.8,518.3 450.7,525 450.7,526.7 449.3,528.4 446.8,529.9 443.1,531.2 438.4,532.3 432.9,533.1 426.9,533.6"/><polygon points="394.8,520.7 395.2,360.9 395.5,360 396.9,359.1 399.5,358.3 403.1,357.5 407.5,357 412.6,356.6 418,356.3 423.7,356.3 429.4,356.4 434.8,356.8 439.8,357.3 444,357.9 447.3,358.7 449.6,359.5 450.8,360.4 448.3,519.9 448.3,521.4 447,522.9 444.7,524.3 441.3,525.5 437,526.5 432,527.2 426.5,527.7 420.8,527.7 415.2,527.5 409.8,526.9 405,526.1 400.9,524.9 397.8,523.6 395.7,522.2"/></g>
<polygon points="395.1,360.6 397.9,362.6 400.7,363.4 403.5,363.9 406.2,364.3 409,364.6 411.8,364.8 414.5,365 417.3,365.1 420.1,365.2 418.4,533.7 415.5,533.5 412.6,533.3 409.7,533 406.8,532.6 403.9,532 401,531.3 398.1,530.4 395.1,529 392.2,525.4" fill="url(#mb)"/>
<polygon points="420.1,365.2 421.9,365.2 423.8,365.2 425.6,365.2 427.5,365.1 429.3,365.1 431.2,365 433,364.9 434.9,364.8 436.7,364.6 435.9,532.6 433.9,532.9 432,533.2 430.1,533.3 428.1,533.5 426.2,533.6 424.2,533.7 422.3,533.7 420.4,533.7 418.4,533.7" fill="url(#lb)"/>
<polygon points="395.1,360.6 395.6,361.4 396,361.8 396.4,362 396.9,362.2 397.3,362.4 397.7,362.6 398.2,362.7 398.6,362.8 399,363 396.3,529.6 395.9,529.4 395.4,529.2 395,528.9 394.5,528.6 394.1,528.3 393.6,527.9 393.1,527.5 392.7,526.9 392.2,525.4" fill="#1c5882"/>
<polygon points="449.6,359.5 447.3,358.7 444,357.9 439.8,357.3 434.8,356.8 429.4,356.4 423.7,356.3 418,356.3 412.6,356.6 407.5,357 403.1,357.5 399.5,358.3 396.9,359.1 395.5,360 395.2,360.9 396.1,361.8 398.3,362.7 401.5,363.5 405.8,364.2 410.8,364.7 416.4,365 422.3,365.2 428.2,365.1 433.9,364.9 439.1,364.4 443.6,363.8 447.1,363.1 449.5,362.3 450.8,361.4 450.8,360.4" fill="#1c5882" stroke="#1c5882" stroke-width="1"/>
<polygon points="447.5,359.6 445.4,358.8 442.3,358.1 438.4,357.5 433.9,357.1 428.9,356.8 423.7,356.6 418.4,356.7 413.4,356.9 408.7,357.3 404.6,357.8 401.4,358.4 399,359.2 397.6,360 397.4,360.9 398.3,361.7 400.3,362.5 403.3,363.3 407.2,363.9 411.8,364.4 416.9,364.7 422.3,364.8 427.8,364.8 433,364.5 437.8,364.1 441.9,363.6 445.1,362.9 447.4,362.1 448.6,361.3 448.6,360.4" fill="#389ae0"/>
<polygon points="422.4,364.5 417.3,364.4 412.5,364.1 408.2,363.7 404.6,363.1 401.8,362.4 399.9,361.6 399.1,360.8 399.1,354.7 399.3,353.9 400.6,353.2 402.8,352.5 405.9,351.9 409.7,351.5 414,351.1 418.8,350.9 423.7,350.9 428.6,351 433.3,351.3 437.5,351.7 441.2,352.2 444,352.9 446,353.6 447,354.3 446.9,360.5 446.9,361.3 445.8,362 443.7,362.8 440.7,363.4 436.8,363.9 432.4,364.3 427.5,364.5" fill="#389ae0"/>
<polygon points="446,353.6 444,352.9 441.2,352.2 437.5,351.7 433.3,351.3 428.6,351 423.7,350.9 418.8,350.9 414,351.1 409.7,351.5 405.9,351.9 402.8,352.5 400.6,353.2 399.3,353.9 399.1,354.7 399.9,355.5 401.8,356.2 404.6,356.9 408.3,357.5 412.6,357.9 417.4,358.2 422.4,358.3 427.5,358.3 432.4,358.1 436.9,357.7 440.7,357.2 443.8,356.6 445.9,355.9 447,355.1 447,354.3" fill="#1c5882" stroke="#1c5882" stroke-width="1"/>
<polygon points="443.9,353.7 442.1,353 439.5,352.4 436.2,351.9 432.3,351.6 428.1,351.3 423.6,351.2 419.2,351.2 414.9,351.4 410.9,351.7 407.4,352.2 404.7,352.7 402.6,353.3 401.5,354 401.3,354.7 402.1,355.4 403.8,356.1 406.3,356.7 409.7,357.2 413.6,357.6 417.9,357.8 422.5,358 427.1,357.9 431.6,357.7 435.6,357.4 439.1,357 441.8,356.4 443.8,355.8 444.8,355.1 444.8,354.4" fill="#389ae0"/>
<polygon points="442.5,353.1 439.1,352.3 434.5,351.8 429.1,351.4 423.2,351.2 417.4,351.3 412,351.6 407.3,352.2 403.9,352.9 401.8,353.8 401.3,354.7 402.5,355.6 405.2,356.4 409.4,357.1 407.9,356.2 408.4,355.3 410.2,354.6 412.5,354.2 414.8,353.8 416.9,353.6 418.7,353.4 420.6,353.1 423.2,352.9 426.7,352.6 431.3,352.5 436.7,352.7" fill="url(#mc)"/>
<polygon points="440.5,356.8 443.3,356.1 444.9,355.3 445.1,354.4 444.1,353.6 441.9,352.9 438.7,352.2 434.5,351.7 429.7,351.3 424.6,351.2 419.3,351.2 414.3,351.4 409.8,351.8 406,352.4 411.2,352.1 416.1,352 420.4,352.2 424,352.4 427,352.6 429.5,352.9 431.9,353.2 434.2,353.6 436.5,354 438.7,354.5 440.4,355.1 441.2,355.9" fill="#1c5882"/>
<g fill="#389ae0"><polygon points="312.8,531.7 312.7,524.9 313.3,523.2 315.2,521.6 318.3,520.1 322.4,518.8 327.3,517.7 332.9,517 338.8,516.6 344.9,516.5 350.9,516.7 356.6,517.3 361.6,518.2 365.9,519.4 369.2,520.8 371.3,522.4 372.3,524.1 372.3,530.9 371.9,532.6 370.2,534.3 367.3,535.9 363.2,537.3 358.3,538.4 352.6,539.3 346.4,539.7 340,539.8 333.8,539.5 328,538.9 322.8,537.9 318.5,536.6 315.4,535.1 313.4,533.5"/><polygon points="315.2,526.5 312.4,364.4 313,363.5 314.9,362.5 317.8,361.7 321.7,361 326.4,360.4 331.7,360 337.3,359.7 343.1,359.7 348.9,359.8 354.2,360.2 359.1,360.7 363.1,361.3 366.2,362.1 368.3,363 369.1,363.9 369.7,525.7 369.3,527.3 367.8,528.8 365.1,530.2 361.4,531.5 356.9,532.5 351.6,533.3 346,533.7 340.2,533.8 334.5,533.5 329.2,532.9 324.4,532 320.5,530.9 317.6,529.5 315.9,528"/></g>
<polygon points="312.4,364.6 315,366.4 317.6,367 320.2,367.5 322.7,367.9 325.3,368.2 327.9,368.4 330.4,368.6 333,368.7 335.6,368.8 337.1,539.7 334.4,539.5 331.7,539.3 329,539 326.3,538.6 323.6,538 320.9,537.4 318.2,536.5 315.5,535.3 312.8,532" fill="url(#mb)"/>
<polygon points="335.6,368.8 337.3,368.8 339,368.8 340.7,368.9 342.4,368.8 344.1,368.8 345.8,368.8 347.6,368.7 349.3,368.7 351,368.6 353.3,539.3 351.5,539.5 349.7,539.6 347.9,539.7 346.1,539.8 344.3,539.8 342.5,539.8 340.7,539.8 338.9,539.8 337.1,539.7" fill="url(#lb)"/>
<polygon points="312.4,364.6 312.8,365.2 313.1,365.5 313.4,365.7 313.7,365.8 314,366 314.3,366.1 314.7,366.2 315,366.3 315.3,366.4 315.8,535.4 315.4,535.2 315.1,535 314.8,534.8 314.5,534.6 314.1,534.3 313.8,534 313.5,533.7 313.1,533.2 312.8,532" fill="#1c5882"/>
<polygon points="368.3,363 366.2,362.1 363.1,361.3 359.1,360.7 354.2,360.2 348.9,359.8 343.1,359.7 337.3,359.7 331.7,360 326.4,360.4 321.7,361 317.8,361.7 314.9,362.5 313,363.5 312.4,364.4 313.1,365.4 314.9,366.3 317.9,367.1 322,367.8 326.9,368.3 332.4,368.7 338.3,368.8 344.4,368.8 350.3,368.5 355.7,368.1 360.5,367.5 364.3,366.7 367.1,365.8 368.7,364.9 369.1,363.9" fill="#1c5882" stroke="#1c5882" stroke-width="1"/>
<polygon points="366.1,363.1 364.2,362.3 361.4,361.6 357.6,360.9 353.2,360.5 348.2,360.2 343,360 337.6,360.1 332.4,360.3 327.5,360.7 323.2,361.2 319.6,361.9 316.9,362.7 315.3,363.5 314.7,364.4 315.3,365.3 317,366.1 319.8,366.9 323.5,367.5 328,368 333.1,368.3 338.5,368.5 344.1,368.4 349.5,368.2 354.5,367.8 358.9,367.2 362.4,366.5 365,365.7 366.5,364.8 366.9,364" fill="#389ae0"/>
<polygon points="316.4,364.4 316.3,358.2 316.8,357.4 318.4,356.6 320.9,355.9 324.2,355.3 328.3,354.8 332.9,354.4 337.7,354.2 342.8,354.2 347.7,354.3 352.3,354.6 356.5,355 360,355.6 362.7,356.2 364.4,357 365.1,357.8 365.1,364 364.8,364.8 363.4,365.6 361,366.3 357.7,367 353.6,367.5 348.9,367.9 343.9,368.1 338.7,368.2 333.6,368 328.8,367.7 324.6,367.3 321.2,366.7 318.6,366 317,365.2" fill="#389ae0"/>
<polygon points="364.4,357 362.7,356.2 360,355.6 356.5,355 352.3,354.6 347.7,354.3 342.8,354.2 337.7,354.2 332.9,354.4 328.3,354.8 324.2,355.3 320.9,355.9 318.4,356.6 316.8,357.4 316.3,358.2 316.9,359 318.5,359.7 321.1,360.4 324.5,361 328.8,361.4 333.5,361.7 338.6,361.9 343.8,361.8 348.9,361.6 353.5,361.2 357.6,360.7 361,360.1 363.4,359.4 364.8,358.6 365.1,357.8" fill="#1c5882" stroke="#1c5882" stroke-width="1"/>
<polygon points="362.2,357.1 360.6,356.4 358.2,355.8 355,355.3 351.3,354.9 347.1,354.6 342.6,354.5 338,354.6 333.6,354.8 329.4,355.1 325.8,355.5 322.7,356.1 320.4,356.7 319,357.4 318.6,358.1 319.1,358.9 320.5,359.6 322.9,360.2 326.1,360.7 329.9,361.1 334.2,361.4 338.8,361.5 343.5,361.5 348.1,361.3 352.3,360.9 356,360.5 359.1,359.9 361.3,359.2 362.5,358.5 362.9,357.8" fill="#389ae0"/>
<polygon points="361,356.5 357.8,355.7 353.4,355.1 348,354.7 342.2,354.5 336.2,354.6 330.6,355 325.6,355.5 321.8,356.3 319.4,357.2 318.6,358.1 319.4,359.1 321.9,359.9 325.8,360.7 324.6,359.6 325.5,358.8 327.6,358.1 330.1,357.6 332.6,357.2 334.8,357 336.7,356.8 338.8,356.5 341.4,356.2 345.1,356 349.8,355.9 355.3,356" fill="url(#mc)"/>
<polygon points="357.6,360.3 360.7,359.5 362.6,358.7 363.2,357.9 362.5,357 360.5,356.3 357.4,355.6 353.4,355 348.7,354.7 343.5,354.5 338.2,354.5 333,354.7 328.3,355.1 324.2,355.7 329.4,355.4 334.4,355.3 338.8,355.4 342.6,355.6 345.8,355.9 348.5,356.2 351,356.5 353.3,356.9 355.5,357.3 357.4,357.9 358.6,358.6 358.8,359.4" fill="#1c5882"/>
<g fill="#389ae0"><polygon points="232.8,541.3 231.1,539.6 230.9,537.8 230.6,530.9 231.6,529.2 233.9,527.5 237.3,525.9 241.8,524.6 247,523.5 252.8,522.7 258.9,522.3 265.2,522.2 271.2,522.5 276.8,523.1 281.7,524 285.8,525.2 288.9,526.7 290.7,528.3 291.3,530 291.4,536.9 290.7,538.7 288.6,540.5 285.3,542.1 280.9,543.5 275.6,544.7 269.7,545.6 263.3,546 256.8,546.1 250.5,545.8 244.8,545.2 239.7,544.1 235.7,542.8"/><polygon points="284.8,367.6 288.7,531.7 288,533.3 286.1,534.9 283.1,536.4 279.1,537.7 274.2,538.7 268.8,539.5 262.9,539.9 257,540 251.3,539.7 246,539.1 241.4,538.2 237.7,537 235,535.6 233.5,534.1 233.2,532.5 227,368.1 228,367.1 230.2,366.1 233.5,365.3 237.7,364.5 242.7,363.9 248.3,363.5 254.1,363.2 260,363.2 265.8,363.3 271.1,363.7 275.8,364.2 279.7,364.9 282.5,365.7 284.3,366.6"/></g>
<polygon points="227,368.2 229.3,370 231.7,370.6 234.1,371.1 236.5,371.5 238.8,371.8 241.2,372 243.6,372.2 245.9,372.4 248.3,372.5 253.2,545.9 250.7,545.7 248.2,545.4 245.7,545 243.2,544.6 240.8,544.1 238.3,543.4 235.8,542.5 233.3,541.3 230.8,538.1" fill="url(#mb)"/>
<polygon points="248.3,372.5 249.9,372.5 251.5,372.6 253,372.6 254.6,372.6 256.2,372.6 257.8,372.6 259.4,372.6 260.9,372.6 262.5,372.5 268.1,545.9 266.4,546 264.8,546.1 263.1,546.1 261.5,546.2 259.8,546.1 258.2,546.1 256.5,546.1 254.8,546 253.2,545.9" fill="url(#lb)"/>
<polygon points="227,368.2 227.2,368.7 227.4,368.9 227.5,369.1 227.7,369.2 227.9,369.4 228.1,369.5 228.3,369.6 228.5,369.6 228.7,369.7 232.6,540.8 232.4,540.7 232.2,540.5 232,540.3 231.8,540.2 231.6,539.9 231.4,539.7 231.2,539.4 231,539 230.8,538.1" fill="#1c5882"/>
<polygon points="284.3,366.6 282.5,365.7 279.7,364.9 275.8,364.2 271.1,363.7 265.8,363.3 260,363.2 254.1,363.2 248.3,363.5 242.7,363.9 237.7,364.5 233.5,365.3 230.2,366.1 228,367.1 227,368.1 227.3,369 228.8,370 231.6,370.8 235.4,371.5 240.2,372.1 245.7,372.5 251.7,372.6 257.8,372.6 263.9,372.3 269.6,371.9 274.7,371.2 278.9,370.4 282,369.5 284,368.6 284.8,367.6" fill="#1c5882" stroke="#1c5882" stroke-width="1"/>
<polygon points="282,366.7 280.4,365.9 277.8,365.1 274.2,364.5 269.9,364 265,363.7 259.7,363.5 254.2,363.6 248.9,363.8 243.8,364.2 239.2,364.8 235.3,365.5 232.2,366.3 230.2,367.1 229.3,368 229.6,368.9 231,369.8 233.5,370.6 237.1,371.2 241.5,371.8 246.5,372.1 252,372.2 257.7,372.2 263.3,372 268.5,371.5 273.1,370.9 277,370.2 279.9,369.4 281.8,368.5 282.5,367.6" fill="#389ae0"/>
<polygon points="231.1,368 230.8,361.7 231.7,360.9 233.6,360.1 236.4,359.4 240,358.7 244.3,358.2 249.1,357.9 254.2,357.7 259.3,357.6 264.2,357.7 268.8,358 272.9,358.5 276.2,359 278.7,359.7 280.2,360.5 280.6,361.3 280.7,367.6 280.1,368.5 278.4,369.3 275.6,370.1 272,370.7 267.7,371.3 262.8,371.7 257.6,371.9 252.3,371.9 247.1,371.8 242.4,371.5 238.3,371 235,370.4 232.6,369.7 231.3,368.9" fill="#389ae0"/>
<polygon points="280.2,360.5 278.7,359.7 276.2,359 272.9,358.5 268.8,358 264.2,357.7 259.3,357.6 254.2,357.7 249.1,357.9 244.3,358.2 240,358.7 236.4,359.4 233.6,360.1 231.7,360.9 230.8,361.7 231.1,362.5 232.4,363.3 234.8,364 238.1,364.6 242.2,365.1 246.9,365.4 252.1,365.5 257.4,365.5 262.6,365.3 267.5,364.9 271.8,364.4 275.5,363.7 278.2,362.9 279.9,362.1 280.6,361.3" fill="#1c5882" stroke="#1c5882" stroke-width="1"/>
<polygon points="277.9,360.6 276.6,359.9 274.3,359.3 271.3,358.7 267.6,358.3 263.5,358.1 258.9,358 254.3,358 249.7,358.2 245.4,358.5 241.5,359 238.2,359.6 235.6,360.2 233.9,360.9 233.1,361.7 233.4,362.4 234.6,363.2 236.7,363.8 239.7,364.3 243.5,364.8 247.8,365 252.4,365.2 257.2,365.1 261.9,364.9 266.4,364.6 270.3,364.1 273.6,363.5 276.1,362.8 277.7,362.1 278.3,361.3" fill="#389ae0"/>
<polygon points="276.9,360 273.9,359.2 269.7,358.5 264.4,358.1 258.5,358 252.4,358.1 246.6,358.4 241.4,359 237.2,359.8 234.4,360.7 233.1,361.7 233.6,362.6 235.8,363.5 239.5,364.3 238.7,363.2 239.9,362.3 242.3,361.6 245.1,361.1 247.8,360.8 250.1,360.5 252.1,360.3 254.3,360 257.1,359.7 260.9,359.5 265.8,359.4 271.3,359.5" fill="url(#mc)"/>
<polygon points="272,363.9 275.4,363.1 277.6,362.3 278.6,361.4 278.2,360.5 276.5,359.7 273.6,359 269.7,358.5 265.1,358.1 259.9,357.9 254.5,358 249.1,358.2 244.2,358.6 239.8,359.2 245.1,358.8 250.2,358.7 254.8,358.7 258.8,358.9 262.1,359.2 265.1,359.5 267.6,359.9 269.9,360.3 271.9,360.8 273.4,361.4 274.1,362.2 273.8,363" fill="#1c5882"/>
<g fill="#389ae0"><polygon points="555.6,534.9 555.3,541.9 554.4,543.7 552.1,545.3 548.7,546.8 544.1,548 538.6,548.8 532.5,549.3 526.1,549.4 519.6,549.1 513.3,548.4 507.5,547.4 502.6,546.1 498.6,544.5 495.9,542.8 494.4,540.9 494.2,539.1 494.4,532.2 495.6,530.5 498,528.9 501.6,527.6 506.1,526.5 511.4,525.7 517.3,525.3 523.5,525.2 529.8,525.4 535.8,526.1 541.5,527 546.4,528.2 550.4,529.7 553.4,531.4 555.2,533.1"/><polygon points="559.9,370.5 552.9,536.4 552,538 550,539.5 546.8,540.9 542.6,541.9 537.6,542.7 532.1,543.2 526.2,543.2 520.2,543 514.5,542.4 509.2,541.4 504.7,540.2 501,538.8 498.5,537.2 497.1,535.6 497,533.9 501.6,369 502.7,368 505,367.1 508.3,366.3 512.6,365.7 517.7,365.3 523.3,365 529.2,365 535.2,365.1 541,365.5 546.3,366 551,366.7 554.9,367.5 557.8,368.5 559.4,369.5"/></g>
<polygon points="501.5,369.3 504.7,371.7 507.8,372.6 511,373.2 514.1,373.7 517.3,374 520.4,374.3 523.6,374.5 526.7,374.6 529.9,374.6 523.9,549.4 520.6,549.4 517.3,549.2 513.9,548.8 510.6,548.4 507.3,547.7 504,546.9 500.7,545.8 497.4,544.1 494.1,539.7" fill="url(#mb)"/>
<polygon points="529.9,374.6 532,374.6 534.1,374.6 536.2,374.5 538.3,374.4 540.4,374.3 542.5,374.2 544.6,374 546.7,373.7 548.8,373.5 543.7,547.4 541.5,547.9 539.3,548.3 537.1,548.6 534.9,548.9 532.7,549.1 530.5,549.3 528.3,549.4 526.1,549.4 523.9,549.4" fill="url(#lb)"/>
<polygon points="501.5,369.3 502.1,370.3 502.7,370.8 503.3,371.1 503.9,371.4 504.4,371.6 505,371.8 505.6,372 506.2,372.2 506.8,372.3 499.6,545.3 499,545 498.4,544.7 497.8,544.3 497.2,544 496.6,543.5 496,543 495.4,542.4 494.7,541.7 494.1,539.7" fill="#1c5882"/>
<polygon points="557.8,368.5 554.9,367.5 551,366.7 546.3,366 541,365.5 535.2,365.1 529.2,365 523.3,365 517.7,365.3 512.6,365.7 508.3,366.3 505,367.1 502.7,368 501.6,369 501.8,370 503.2,371 505.9,371.9 509.7,372.8 514.4,373.5 519.9,374.1 525.9,374.4 532.1,374.6 538.3,374.6 544.1,374.3 549.3,373.8 553.6,373.2 556.9,372.4 559,371.4 559.9,370.5 559.4,369.5" fill="#1c5882" stroke="#1c5882" stroke-width="1"/>
<polygon points="555.6,368.6 553,367.7 549.4,367 545.1,366.3 540.2,365.8 534.8,365.5 529.3,365.4 523.9,365.4 518.7,365.6 514,366 510.1,366.6 507,367.3 504.9,368.1 503.9,369 504.1,369.9 505.4,370.9 507.9,371.7 511.4,372.5 515.7,373.2 520.8,373.7 526.3,374.1 532,374.2 537.7,374.2 543,373.9 547.8,373.5 551.8,372.9 554.8,372.1 556.7,371.3 557.5,370.4 557.1,369.5" fill="#389ae0"/>
<polygon points="505.7,369.1 505.8,362.7 506.8,361.9 508.7,361.2 511.6,360.5 515.3,360 519.7,359.6 524.5,359.4 529.6,359.4 534.8,359.5 539.8,359.8 544.4,360.3 548.5,360.8 551.8,361.5 554.2,362.3 555.7,363.1 556,364 555.8,370.4 555,371.2 553.2,372 550.3,372.7 546.6,373.2 542.2,373.6 537.2,373.9 531.9,373.9 526.6,373.8 521.4,373.5 516.7,373 512.7,372.3 509.4,371.6 507.1,370.8 505.8,369.9" fill="#389ae0"/>
<polygon points="554.2,362.3 551.8,361.5 548.5,360.8 544.4,360.3 539.8,359.8 534.8,359.5 529.6,359.4 524.5,359.4 519.7,359.6 515.3,360 511.6,360.5 508.7,361.2 506.8,361.9 505.8,362.7 506,363.6 507.3,364.4 509.6,365.2 512.9,365.9 516.9,366.5 521.7,367 526.8,367.3 532.1,367.5 537.4,367.4 542.4,367.2 546.9,366.8 550.6,366.2 553.4,365.6 555.3,364.8 556,364 555.7,363.1" fill="#1c5882" stroke="#1c5882" stroke-width="1"/>
<polygon points="552.1,362.4 549.9,361.7 546.9,361.1 543.2,360.5 539,360.1 534.4,359.9 529.7,359.8 525.1,359.8 520.7,360 516.7,360.3 513.4,360.8 510.7,361.4 509,362 508.1,362.8 508.3,363.5 509.5,364.3 511.6,365 514.5,365.7 518.2,366.2 522.5,366.7 527.2,366.9 532,367.1 536.8,367 541.3,366.8 545.4,366.5 548.8,366 551.3,365.4 553,364.7 553.7,363.9 553.4,363.2" fill="#389ae0"/>
<polygon points="550.3,361.8 546.3,361 541.3,360.3 535.5,359.9 529.3,359.8 523.3,359.9 517.8,360.2 513.3,360.8 510,361.6 508.3,362.5 508.3,363.5 510,364.5 513.3,365.4 517.9,366.2 515.9,365.1 515.9,364.2 517.5,363.5 519.7,362.9 521.9,362.6 523.9,362.3 525.7,362.1 527.6,361.8 530.1,361.6 533.6,361.3 538.3,361.2 544.1,361.3" fill="url(#mc)"/>
<polygon points="550.2,365.8 552.7,365 553.9,364.1 553.7,363.3 552.3,362.4 549.6,361.6 545.9,360.9 541.3,360.3 536.1,359.9 530.7,359.7 525.2,359.7 520.1,360 515.6,360.4 511.9,361 517.4,360.7 522.5,360.7 527,360.9 530.7,361.2 533.7,361.5 536.2,361.8 538.6,362.1 541,362.4 543.6,362.8 546.3,363.3 548.6,364 550.1,364.8" fill="#1c5882"/>
<g fill="#389ae0"><polygon points="206,532.7 207.6,534.4 207.8,536.2 208.1,543.1 206.9,545 204.5,546.8 200.8,548.5 196,550 190.4,551.2 184.1,552.1 177.5,552.6 170.9,552.7 164.6,552.4 158.9,551.7 154,550.6 150.2,549.3 147.6,547.7 146.3,545.9 145.9,538.9 145.9,537.1 147.4,535.3 150.1,533.5 153.9,531.9 158.7,530.5 164.2,529.4 170.3,528.6 176.6,528.2 182.9,528.1 189,528.4 194.6,529 199.4,529.9 203.3,531.2"/><polygon points="148.6,540.3 138.7,372.8 138.8,371.8 140.2,370.8 142.8,369.8 146.5,368.9 151.1,368.2 156.4,367.5 162.2,367.1 168.2,366.8 174.2,366.8 180,366.9 185.3,367.3 189.9,367.8 193.6,368.5 196.2,369.4 197.6,370.3 197.7,371.3 205.2,537.8 204.1,539.5 201.9,541.1 198.5,542.7 194.1,544 189,545.1 183.2,545.9 177.2,546.3 171.2,546.4 165.4,546.1 160.2,545.5 155.7,544.6 152.2,543.3 149.8,541.9"/></g>
<polygon points="138.6,372.4 141.9,374.3 145.2,375 148.5,375.5 151.7,375.9 155,376.1 158.3,376.3 161.6,376.5 164.9,376.5 168.2,376.6 177.1,552.7 173.7,552.6 170.3,552.5 166.8,552.2 163.4,551.9 159.9,551.4 156.5,550.8 153,549.9 149.6,548.6 146.1,545.1" fill="url(#nb)"/>
<polygon points="197.6,370.3 196.2,369.4 193.6,368.5 189.9,367.8 185.3,367.3 180,366.9 174.2,366.8 168.2,366.8 162.2,367.1 156.4,367.5 151.1,368.2 146.5,368.9 142.8,369.8 140.2,370.8 138.8,371.8 138.7,372.8 139.9,373.8 142.4,374.7 146,375.4 150.6,376 156.1,376.4 162.1,376.6 168.4,376.5 174.7,376.2 180.6,375.7 186,375.1 190.6,374.3 194.2,373.3 196.6,372.3 197.7,371.3" fill="#1c5882" stroke="#1c5882" stroke-width="1"/>
<polygon points="195.2,370.4 194,369.5 191.6,368.8 188.2,368.1 184,367.6 179.1,367.3 173.8,367.2 168.2,367.2 162.7,367.4 157.3,367.8 152.4,368.4 148.2,369.1 144.8,370 142.4,370.9 141.2,371.8 141.1,372.7 142.2,373.6 144.5,374.4 147.8,375.1 152.1,375.6 157.1,376 162.6,376.1 168.4,376.1 174.1,375.8 179.6,375.4 184.6,374.8 188.8,374 192.1,373.2 194.3,372.3 195.4,371.3" fill="#389ae0"/>
<polygon points="142.9,372.7 142.5,366.2 142.6,365.4 143.8,364.5 146,363.7 149.2,363 153.1,362.3 157.7,361.8 162.7,361.4 167.9,361.2 173.1,361.1 178.1,361.3 182.7,361.6 186.6,362 189.8,362.6 192,363.3 193.2,364.1 193.3,365 193.6,371.3 192.6,372.2 190.5,373.1 187.4,373.9 183.5,374.6 178.9,375.1 173.8,375.6 168.4,375.8 163,375.8 157.8,375.7 153.2,375.4 149.2,374.9 146,374.2 143.9,373.5" fill="#389ae0"/>
<polygon points="193.2,364.1 192,363.3 189.8,362.6 186.6,362 182.7,361.6 178.1,361.3 173.1,361.1 167.9,361.2 162.7,361.4 157.7,361.8 153.1,362.3 149.2,363 146,363.7 143.8,364.5 142.6,365.4 142.5,366.2 143.5,367 145.7,367.8 148.8,368.4 152.8,368.9 157.5,369.2 162.6,369.3 168,369.3 173.4,369.1 178.6,368.7 183.2,368.1 187.1,367.4 190.2,366.6 192.3,365.8 193.3,365" fill="#1c5882" stroke="#1c5882" stroke-width="1"/>
<polygon points="190.9,364.2 189.8,363.5 187.8,362.9 184.9,362.3 181.3,361.9 177.2,361.6 172.6,361.5 167.9,361.6 163.2,361.7 158.6,362.1 154.5,362.6 150.9,363.2 148,363.8 146,364.6 144.9,365.4 144.9,366.1 145.8,366.9 147.8,367.5 150.6,368.1 154.2,368.5 158.5,368.8 163.1,368.9 168,368.9 172.9,368.7 177.6,368.3 181.8,367.8 185.4,367.2 188.1,366.5 190,365.8 191,365" fill="#389ae0"/>
<polygon points="190,363.6 187.4,362.8 183.3,362.1 178.1,361.7 172.2,361.5 166,361.6 159.9,362 154.3,362.6 149.8,363.4 146.6,364.3 144.9,365.3 145,366.3 146.9,367.3 150.3,368 150,367 151.6,366 154.3,365.3 157.3,364.7 160.2,364.4 162.6,364.1 164.8,363.9 167.1,363.6 170.1,363.3 174,363.1 179,363 184.6,363.1" fill="url(#mc)"/>
<polygon points="183.5,367.6 187.3,366.8 189.9,366 191.2,365.1 191.1,364.2 189.7,363.3 187.1,362.6 183.4,362.1 178.8,361.7 173.6,361.5 168.1,361.5 162.6,361.7 157.4,362.2 152.7,362.8 158.1,362.4 163.3,362.2 168.1,362.2 172.3,362.3 175.9,362.6 179,362.9 181.7,363.3 183.9,363.8 185.6,364.4 186.7,365.1 186.9,365.9 185.9,366.7" fill="#1c5882"/>
<g fill="#389ae0"><polygon points="475.2,541.2 475,548.3 473.8,550.1 471.1,551.8 467.3,553.3 462.4,554.6 456.7,555.5 450.4,556 443.8,556.1 437.3,555.8 431,555 425.4,554 420.7,552.6 417,551 414.5,549.2 413.4,547.3 413.4,540.3 413.6,538.4 415.2,536.7 418,535 421.9,533.6 426.7,532.5 432.3,531.7 438.3,531.2 444.6,531.1 450.9,531.4 457,532.1 462.5,533 467.2,534.3 471,535.8 473.7,537.6 475.1,539.4"/><polygon points="476.2,374.3 472.5,542.7 471.3,544.4 468.9,546 465.4,547.3 461,548.4 455.7,549.2 450,549.7 444,549.8 438,549.5 432.3,548.9 427.1,547.9 422.7,546.6 419.4,545.2 417.1,543.6 416,541.9 417.4,373.8 417.5,372.7 419,371.8 421.6,370.8 425.3,370.1 429.9,369.4 435.2,369 441,368.7 447,368.7 453.1,368.8 458.8,369.2 464.1,369.7 468.6,370.4 472.2,371.3 474.8,372.2 476.1,373.3"/></g>
<polygon points="417.3,373.5 420.2,375.7 423.2,376.6 426.1,377.1 429,377.6 431.9,377.9 434.9,378.2 437.8,378.4 440.7,378.5 443.7,378.6 440.9,556 437.9,555.9 434.8,555.6 431.7,555.3 428.7,554.8 425.6,554.2 422.5,553.4 419.4,552.4 416.4,550.8 413.3,546.8" fill="url(#mb)"/>
<polygon points="443.7,378.6 445.6,378.6 447.6,378.6 449.5,378.6 451.5,378.5 453.5,378.5 455.4,378.4 457.4,378.3 459.3,378.1 461.3,377.9 459.4,554.9 457.3,555.2 455.3,555.5 453.2,555.7 451.2,555.8 449.1,556 447.1,556 445,556.1 443,556.1 440.9,556" fill="url(#lb)"/>
<polygon points="417.3,373.5 417.7,374.4 418.2,374.8 418.7,375.1 419.1,375.3 419.6,375.5 420,375.7 420.5,375.8 421,376 421.4,376.1 417.6,551.5 417.1,551.3 416.7,551 416.2,550.7 415.7,550.4 415.2,550 414.7,549.6 414.3,549.1 413.8,548.5 413.3,546.8" fill="#1c5882"/>
<polygon points="474.8,372.2 472.2,371.3 468.6,370.4 464.1,369.7 458.8,369.2 453.1,368.8 447,368.7 441,368.7 435.2,369 429.9,369.4 425.3,370.1 421.6,370.8 419,371.8 417.5,372.7 417.4,373.8 418.5,374.8 420.8,375.8 424.4,376.7 428.9,377.4 434.3,378 440.2,378.4 446.5,378.6 452.8,378.5 458.8,378.3 464.2,377.8 468.9,377.1 472.5,376.3 475,375.3 476.2,374.3 476.1,373.3" fill="#1c5882" stroke="#1c5882" stroke-width="1"/>
<polygon points="472.6,372.3 470.2,371.5 466.9,370.7 462.7,370 457.9,369.5 452.6,369.2 447,369 441.5,369.1 436.2,369.3 431.3,369.7 427,370.3 423.6,371.1 421.2,371.9 419.9,372.8 419.7,373.8 420.7,374.7 422.9,375.6 426.2,376.4 430.4,377.1 435.3,377.7 440.8,378 446.5,378.2 452.3,378.1 457.8,377.9 462.8,377.4 467.1,376.8 470.4,376 472.7,375.2 473.9,374.2 473.8,373.3" fill="#389ae0"/>
<polygon points="472.2,367.7 472.1,374.2 471,375.1 468.9,375.9 465.7,376.6 461.7,377.2 457.1,377.6 451.9,377.8 446.5,377.9 441.2,377.7 436.1,377.4 431.5,376.9 427.5,376.2 424.5,375.5 422.4,374.6 421.5,373.7 421.5,367.3 421.7,366.4 422.9,365.6 425.2,364.8 428.4,364.2 432.3,363.6 436.9,363.2 441.9,363 447.1,363 452.3,363.1 457.3,363.4 461.8,363.9 465.7,364.5 468.8,365.2 471,366 472.2,366.9" fill="#389ae0"/>
<polygon points="471,366 468.8,365.2 465.7,364.5 461.8,363.9 457.3,363.4 452.3,363.1 447.1,363 441.9,363 436.9,363.2 432.3,363.6 428.4,364.2 425.2,364.8 422.9,365.6 421.7,366.4 421.5,367.3 422.5,368.2 424.6,369 427.6,369.7 431.5,370.4 436.1,370.8 441.3,371.2 446.6,371.3 452,371.3 457.2,371 461.9,370.6 465.9,370.1 469,369.4 471.1,368.6 472.2,367.7 472.2,366.9" fill="#1c5882" stroke="#1c5882" stroke-width="1"/>
<polygon points="468.8,366.1 466.8,365.4 464,364.7 460.4,364.2 456.3,363.8 451.8,363.5 447.1,363.4 442.4,363.4 437.8,363.6 433.7,363.9 430.1,364.4 427.2,365 425.1,365.7 424,366.5 423.9,367.3 424.8,368.1 426.6,368.8 429.4,369.5 433,370 437.2,370.5 441.8,370.8 446.7,370.9 451.5,370.9 456.2,370.7 460.5,370.3 464.1,369.8 466.9,369.2 468.9,368.4 469.9,367.7 469.8,366.9" fill="#389ae0"/>
<polygon points="467.2,365.5 463.5,364.6 458.6,364 452.8,363.5 446.7,363.4 440.5,363.5 434.8,363.8 430,364.4 426.4,365.3 424.3,366.2 423.9,367.2 425.2,368.3 428.2,369.2 432.6,370 431,368.9 431.4,367.9 433.2,367.2 435.6,366.6 438.1,366.3 440.2,366 442.1,365.8 444.1,365.5 446.8,365.2 450.4,365 455.3,364.8 461.1,365" fill="url(#mc)"/>
<polygon points="465.6,369.6 468.4,368.8 470,367.9 470.2,367 469,366.1 466.6,365.2 463.1,364.5 458.6,363.9 453.5,363.5 448,363.3 442.5,363.3 437.2,363.6 432.5,364 428.5,364.6 434,364.3 439.2,364.3 443.8,364.4 447.6,364.7 450.8,365 453.5,365.3 456,365.6 458.5,366 461,366.4 463.4,367 465.2,367.7 466.1,368.6" fill="#1c5882"/>
<g fill="#389ae0"><polygon points="329.7,553.9 329.6,546.7 330.3,544.8 332.2,543 335.4,541.3 339.6,539.9 344.8,538.7 350.6,537.9 356.9,537.4 363.3,537.3 369.6,537.6 375.6,538.3 381,539.3 385.6,540.6 389.1,542.2 391.5,543.9 392.5,545.8 392.5,552.9 392.2,554.9 390.5,556.8 387.5,558.5 383.3,560.1 378.1,561.4 372.1,562.3 365.6,562.8 358.9,562.9 352.3,562.6 346.1,561.9 340.6,560.8 336.1,559.3 332.6,557.7 330.5,555.8"/><polygon points="332.4,548.4 330.1,377.7 330.7,376.7 332.5,375.6 335.6,374.7 339.6,373.9 344.5,373.2 350.1,372.8 356.1,372.5 362.2,372.4 368.3,372.6 374,373 379.1,373.5 383.5,374.3 386.8,375.2 389.1,376.2 390.1,377.2 389.9,547.5 389.6,549.3 388,551 385.2,552.6 381.4,554 376.6,555.1 371.2,555.9 365.2,556.4 359.1,556.5 353,556.2 347.4,555.6 342.3,554.6 338.2,553.3 335,551.8 333.1,550.1"/></g>
<polygon points="330.1,377.5 332.9,379.7 335.6,380.5 338.3,381.1 341,381.5 343.7,381.9 346.5,382.1 349.2,382.4 351.9,382.5 354.6,382.6 355.4,562.8 352.6,562.6 349.7,562.3 346.9,561.9 344,561.4 341.2,560.7 338.3,559.9 335.5,558.9 332.6,557.3 329.8,553.4" fill="url(#mb)"/>
<polygon points="354.6,382.6 356.4,382.7 358.2,382.7 360,382.7 361.9,382.7 363.7,382.7 365.5,382.6 367.3,382.6 369.1,382.5 370.9,382.4 372.5,562.3 370.6,562.5 368.7,562.6 366.8,562.8 364.9,562.9 363,562.9 361.1,562.9 359.2,562.9 357.3,562.8 355.4,562.8" fill="url(#lb)"/>
<polygon points="330.1,377.5 330.5,378.2 330.8,378.6 331.1,378.8 331.5,379 331.8,379.2 332.1,379.4 332.5,379.5 332.8,379.6 333.1,379.8 332.9,557.5 332.6,557.3 332.2,557.1 331.9,556.8 331.5,556.5 331.2,556.2 330.8,555.8 330.5,555.4 330.1,554.8 329.8,553.4" fill="#1c5882"/>
<polygon points="389.1,376.2 386.8,375.2 383.5,374.3 379.1,373.5 374,373 368.3,372.6 362.2,372.4 356.1,372.5 350.1,372.8 344.5,373.2 339.6,373.9 335.6,374.7 332.5,375.6 330.7,376.7 330.1,377.7 330.9,378.8 332.9,379.8 336.2,380.7 340.5,381.5 345.7,382.1 351.7,382.5 358,382.7 364.4,382.7 370.6,382.4 376.3,381.9 381.3,381.2 385.3,380.3 388.1,379.3 389.8,378.3 390.1,377.2" fill="#1c5882" stroke="#1c5882" stroke-width="1"/>
<polygon points="386.8,376.3 384.7,375.3 381.6,374.5 377.6,373.9 372.9,373.3 367.6,373 362,372.8 356.4,372.9 350.9,373.1 345.8,373.6 341.2,374.2 337.5,374.9 334.7,375.8 333,376.7 332.5,377.7 333.2,378.7 335.1,379.6 338.1,380.5 342.1,381.2 346.9,381.8 352.3,382.1 358.1,382.3 364,382.2 369.7,382 375,381.5 379.5,380.9 383.2,380.1 385.9,379.2 387.4,378.2 387.7,377.2" fill="#389ae0"/>
<polygon points="385.9,370.7 385.9,377.2 385.6,378.2 384.2,379.1 381.7,379.9 378.3,380.6 374,381.2 369.1,381.7 363.8,381.9 358.3,382 352.9,381.8 347.8,381.5 343.3,380.9 339.5,380.3 336.7,379.5 335,378.6 334.3,377.7 334.2,371.1 334.7,370.2 336.3,369.4 338.9,368.6 342.4,367.9 346.6,367.4 351.4,367 356.6,366.7 361.9,366.7 367.1,366.8 372,367.1 376.5,367.6 380.2,368.2 383.1,369 385,369.8" fill="#389ae0"/>
<polygon points="385,369.8 383.1,369 380.2,368.2 376.5,367.6 372,367.1 367.1,366.8 361.9,366.7 356.6,366.7 351.4,367 346.6,367.4 342.4,367.9 338.9,368.6 336.3,369.4 334.7,370.2 334.2,371.1 334.9,372 336.7,372.9 339.5,373.7 343.2,374.3 347.7,374.8 352.8,375.1 358.2,375.3 363.7,375.2 369,375 374,374.6 378.2,374 381.7,373.3 384.2,372.5 385.6,371.6 385.9,370.7" fill="#1c5882" stroke="#1c5882" stroke-width="1"/>
<polygon points="382.7,369.9 381,369.2 378.4,368.5 375,367.9 371,367.5 366.5,367.2 361.7,367.1 356.9,367.1 352.2,367.3 347.9,367.7 344,368.2 340.8,368.8 338.5,369.5 337.1,370.3 336.6,371.1 337.2,371.9 338.8,372.7 341.4,373.4 344.8,374 348.9,374.4 353.5,374.8 358.4,374.9 363.4,374.8 368.2,374.6 372.7,374.2 376.5,373.7 379.7,373.1 381.9,372.3 383.2,371.5 383.5,370.7" fill="#389ae0"/>
<polygon points="381.4,369.3 377.9,368.4 373.2,367.7 367.5,367.3 361.3,367.1 355,367.2 349,367.6 343.9,368.2 339.9,369 337.4,370 336.6,371.1 337.6,372.2 340.3,373.1 344.5,373.9 343.2,372.8 344,371.8 346.2,371 348.8,370.5 351.4,370.1 353.7,369.8 355.7,369.6 357.9,369.3 360.7,369 364.5,368.7 369.5,368.6 375.3,368.8" fill="url(#mc)"/>
<polygon points="378.2,373.5 381.4,372.7 383.3,371.8 383.8,370.8 383,369.9 380.8,369 377.5,368.2 373.2,367.6 368.2,367.2 362.7,367 357.1,367.1 351.6,367.3 346.6,367.8 342.4,368.4 347.9,368.1 353.1,368 357.9,368 361.9,368.3 365.3,368.6 368.2,368.9 370.8,369.3 373.3,369.7 375.7,370.2 377.7,370.8 379.1,371.6 379.4,372.5" fill="#1c5882"/>
<g fill="#389ae0"><polygon points="245.6,564.6 243.8,562.6 243.4,560.6 243.2,553.4 244.2,551.4 246.6,549.6 250.1,547.8 254.8,546.3 260.3,545.1 266.4,544.3 272.8,543.8 279.4,543.7 285.7,544 291.7,544.7 297,545.7 301.3,547.1 304.6,548.7 306.6,550.5 307.3,552.4 307.4,559.7 306.7,561.7 304.6,563.6 301.2,565.5 296.6,567.1 291,568.4 284.7,569.3 278,569.9 271.2,570 264.5,569.6 258.4,568.9 253,567.8 248.7,566.3"/><polygon points="301.1,381.3 304.6,554.2 303.9,556 302,557.7 298.8,559.4 294.6,560.8 289.5,562 283.8,562.9 277.6,563.4 271.4,563.5 265.3,563.2 259.7,562.5 254.8,561.5 250.8,560.1 248,558.6 246.3,556.9 246,555 239.9,381.8 240.9,380.7 243.2,379.7 246.6,378.7 251.1,377.8 256.3,377.2 262.1,376.7 268.3,376.4 274.6,376.4 280.6,376.5 286.3,376.9 291.3,377.5 295.5,378.3 298.6,379.2 300.5,380.2"/></g>
<polygon points="239.9,382 242.4,384 244.9,384.7 247.4,385.3 249.9,385.7 252.4,386 254.9,386.3 257.4,386.5 260,386.7 262.5,386.8 267,569.7 264.4,569.4 261.8,569.1 259.1,568.7 256.5,568.3 253.9,567.7 251.3,566.9 248.6,565.9 246,564.6 243.4,561" fill="url(#mb)"/>
<polygon points="262.5,386.8 264.1,386.9 265.8,386.9 267.5,387 269.2,387 270.8,387 272.5,387 274.2,386.9 275.8,386.9 277.5,386.8 282.8,569.8 281,569.9 279.3,569.9 277.5,570 275.8,570 274,570 272.3,570 270.5,569.9 268.8,569.8 267,569.7" fill="url(#lb)"/>
<polygon points="239.9,382 240.1,382.6 240.3,382.8 240.5,383 240.7,383.1 240.9,383.3 241.1,383.4 241.3,383.5 241.5,383.6 241.7,383.7 245.3,564.1 245.1,563.9 244.9,563.7 244.7,563.5 244.4,563.3 244.2,563 244,562.8 243.8,562.4 243.6,562 243.4,561" fill="#1c5882"/>
<polygon points="300.5,380.2 298.6,379.2 295.5,378.3 291.3,377.5 286.3,376.9 280.6,376.5 274.6,376.4 268.3,376.4 262.1,376.7 256.3,377.2 251.1,377.8 246.6,378.7 243.2,379.7 240.9,380.7 239.9,381.8 240.3,382.9 241.9,384 244.9,384.9 249,385.7 254.1,386.4 260,386.8 266.3,387 272.9,386.9 279.3,386.6 285.3,386.1 290.6,385.4 295,384.5 298.3,383.5 300.4,382.4 301.1,381.3" fill="#1c5882" stroke="#1c5882" stroke-width="1"/>
<polygon points="298.1,380.3 296.4,379.3 293.5,378.5 289.7,377.8 285.1,377.3 279.9,376.9 274.2,376.8 268.5,376.8 262.8,377.1 257.4,377.5 252.6,378.1 248.5,378.9 245.3,379.8 243.3,380.8 242.4,381.8 242.7,382.8 244.2,383.8 247,384.7 250.8,385.4 255.5,386 260.8,386.4 266.7,386.5 272.7,386.5 278.6,386.2 284.1,385.7 289,385.1 293.1,384.2 296.1,383.3 298,382.3 298.7,381.3" fill="#389ae0"/>
<polygon points="244.2,381.8 244,375.1 244.8,374.2 246.8,373.3 249.7,372.5 253.5,371.8 258.1,371.2 263.1,370.8 268.4,370.6 273.8,370.5 279.1,370.7 284,371 288.3,371.5 291.9,372.1 294.5,372.9 296.2,373.7 296.7,374.7 296.8,381.3 296.2,382.3 294.4,383.2 291.6,384.1 287.8,384.8 283.2,385.4 278,385.9 272.5,386.1 266.9,386.2 261.5,386 256.5,385.7 252.1,385.1 248.5,384.5 246,383.6 244.5,382.7" fill="#389ae0"/>
<polygon points="296.2,373.7 294.5,372.9 291.9,372.1 288.3,371.5 284,371 279.1,370.7 273.8,370.5 268.4,370.6 263.1,370.8 258.1,371.2 253.5,371.8 249.7,372.5 246.8,373.3 244.8,374.2 244,375.1 244.3,376 245.8,376.9 248.3,377.7 251.9,378.4 256.3,378.9 261.3,379.3 266.7,379.4 272.4,379.4 277.9,379.1 283,378.7 287.6,378.1 291.4,377.3 294.3,376.5 296,375.6 296.7,374.7" fill="#1c5882" stroke="#1c5882" stroke-width="1"/>
<polygon points="293.8,373.9 292.3,373.1 289.9,372.4 286.7,371.8 282.7,371.3 278.3,371 273.5,370.9 268.6,371 263.8,371.2 259.2,371.5 255.1,372.1 251.6,372.7 248.9,373.4 247.2,374.3 246.4,375.1 246.7,375.9 248,376.7 250.4,377.5 253.6,378.1 257.6,378.5 262.1,378.9 267.1,379 272.2,379 277.2,378.7 281.8,378.3 286,377.8 289.4,377.1 292,376.4 293.6,375.5 294.2,374.7" fill="#389ae0"/>
<polygon points="292.6,373.2 289.5,372.3 284.9,371.6 279.3,371.1 273.1,370.9 266.6,371 260.4,371.4 255,372.1 250.6,373 247.7,374 246.4,375.1 247,376.2 249.3,377.2 253.3,378 252.4,376.8 253.7,375.8 256.1,375 259.1,374.4 261.9,374.1 264.3,373.8 266.4,373.5 268.7,373.2 271.7,372.9 275.7,372.6 280.8,372.5 286.7,372.7" fill="url(#mc)"/>
<polygon points="287.8,377.6 291.3,376.7 293.6,375.8 294.5,374.8 294,373.8 292.2,372.9 289.1,372.1 285,371.5 280,371.1 274.5,370.9 268.8,370.9 263.1,371.2 257.9,371.6 253.3,372.3 258.9,371.9 264.3,371.7 269.1,371.8 273.4,372 277,372.3 280.1,372.6 282.8,373.1 285.3,373.5 287.4,374.1 289.1,374.8 289.9,375.6 289.6,376.6" fill="#1c5882"/>
<g fill="#389ae0"><polygon points="587.1,557.9 586.7,565.2 585.9,567.2 583.6,569.1 580.1,570.7 575.3,572 569.6,573 563.2,573.6 556.4,573.7 549.5,573.3 542.8,572.6 536.6,571.4 531.3,569.9 527,568.1 523.9,566.2 522.2,564.2 521.9,562.1 522.2,554.9 523.3,553 525.7,551.2 529.4,549.7 534.1,548.5 539.6,547.6 545.8,547.1 552.4,547 559,547.3 565.5,548 571.5,549 576.8,550.4 581.2,552.1 584.5,553.9 586.5,555.9"/><polygon points="593,384.5 584.2,559.5 583.4,561.3 581.4,563 578.1,564.4 573.8,565.6 568.6,566.5 562.7,567 556.4,567.1 550.1,566.8 544,566.1 538.4,565.1 533.5,563.7 529.5,562.1 526.7,560.4 525.1,558.5 524.9,556.7 531,382.8 532,381.7 534.3,380.8 537.8,379.9 542.2,379.2 547.5,378.7 553.4,378.4 559.7,378.4 566,378.6 572.2,379 578,379.5 583.1,380.3 587.3,381.2 590.4,382.3 592.3,383.4"/></g>
<polygon points="530.9,383.2 534.3,385.9 537.6,386.9 541,387.6 544.3,388.1 547.7,388.5 551,388.8 554.4,389 557.7,389.1 561.1,389.2 553.4,573.7 549.9,573.6 546.4,573.4 542.9,573 539.4,572.5 535.9,571.8 532.4,570.8 528.9,569.6 525.4,567.7 521.8,562.8" fill="url(#mb)"/>
<polygon points="561.1,389.2 563.3,389.2 565.5,389.2 567.8,389.1 570,389 572.2,388.9 574.5,388.7 576.7,388.5 578.9,388.2 581.2,387.9 574.4,571.3 572,571.9 569.7,572.4 567.4,572.8 565,573.1 562.7,573.3 560.4,573.5 558,573.6 555.7,573.7 553.4,573.7" fill="url(#lb)"/>
<polygon points="530.9,383.2 531.6,384.4 532.2,384.9 532.8,385.2 533.4,385.6 534,385.8 534.7,386.1 535.3,386.3 535.9,386.5 536.5,386.6 527.7,569 527,568.7 526.4,568.4 525.7,568 525.1,567.5 524.4,567.1 523.8,566.5 523.1,565.9 522.5,565 521.8,562.8" fill="#1c5882"/>
<polygon points="590.4,382.3 587.3,381.2 583.1,380.3 578,379.5 572.2,379 566,378.6 559.7,378.4 553.4,378.4 547.5,378.7 542.2,379.2 537.8,379.9 534.3,380.8 532,381.7 531,382.8 531.3,384 533,385.1 535.9,386.2 540.1,387.1 545.2,387.9 551.1,388.6 557.5,389 564.1,389.2 570.7,389.1 576.8,388.8 582.2,388.3 586.7,387.6 590.1,386.7 592.2,385.6 593,384.5 592.3,383.4" fill="#1c5882" stroke="#1c5882" stroke-width="1"/>
<polygon points="588.2,382.4 585.3,381.4 581.4,380.6 576.7,379.9 571.4,379.3 565.7,379 559.8,378.8 554.1,378.9 548.7,379.1 543.8,379.6 539.7,380.2 536.5,381 534.4,381.9 533.4,382.9 533.7,383.9 535.3,385 538,386 541.8,386.8 546.6,387.6 552,388.2 557.9,388.6 564,388.7 570,388.7 575.6,388.4 580.6,387.9 584.7,387.2 587.8,386.4 589.8,385.5 590.5,384.5 589.9,383.4" fill="#389ae0"/>
<polygon points="588.9,377.7 588.6,384.4 587.9,385.4 586.1,386.2 583.2,387 579.3,387.6 574.7,388.1 569.4,388.4 563.8,388.4 558.1,388.2 552.6,387.9 547.6,387.3 543.2,386.6 539.6,385.8 537,384.9 535.6,383.9 535.3,382.9 535.5,376.3 536.4,375.3 538.4,374.5 541.3,373.8 545.2,373.2 549.8,372.8 554.9,372.6 560.3,372.5 565.7,372.7 571.1,373 576,373.5 580.4,374.1 584.1,374.9 586.8,375.8 588.4,376.7" fill="#389ae0"/>
<polygon points="586.8,375.8 584.1,374.9 580.4,374.1 576,373.5 571.1,373 565.7,372.7 560.3,372.5 554.9,372.6 549.8,372.8 545.2,373.2 541.3,373.8 538.4,374.5 536.4,375.3 535.5,376.3 535.8,377.2 537.3,378.1 539.9,379 543.4,379.8 547.8,380.5 552.9,381.1 558.4,381.4 564.1,381.6 569.7,381.5 575,381.3 579.6,380.8 583.5,380.2 586.4,379.5 588.3,378.6 588.9,377.7 588.4,376.7" fill="#1c5882" stroke="#1c5882" stroke-width="1"/>
<polygon points="584.5,375.9 582.1,375.1 578.8,374.4 574.8,373.8 570.3,373.4 565.4,373.1 560.4,372.9 555.5,373 550.9,373.2 546.7,373.6 543.2,374.1 540.5,374.7 538.8,375.5 538,376.3 538.3,377.2 539.6,378 541.9,378.8 545.2,379.6 549.2,380.2 553.8,380.7 558.8,381 563.9,381.1 569,381.1 573.8,380.9 578,380.5 581.5,379.9 584.2,379.2 585.8,378.5 586.4,377.6 586,376.8" fill="#389ae0"/>
<polygon points="582.5,375.2 578.2,374.3 572.7,373.6 566.5,373.1 560,372.9 553.6,373 547.9,373.4 543.1,374.1 539.8,375 538.1,376 538.3,377.2 540.2,378.3 543.8,379.3 548.8,380.2 546.5,379 546.4,377.9 548,377.1 550.2,376.5 552.6,376.1 554.6,375.8 556.5,375.6 558.5,375.3 561.1,374.9 564.8,374.7 569.8,374.5 575.9,374.7" fill="url(#mc)"/>
<polygon points="583,379.7 585.5,378.8 586.7,377.9 586.4,376.9 584.7,375.9 581.7,375 577.7,374.2 572.7,373.5 567.2,373.1 561.4,372.9 555.7,372.9 550.3,373.2 545.5,373.6 541.8,374.3 547.5,374 552.9,374 557.7,374.2 561.7,374.5 564.9,374.9 567.6,375.2 570.1,375.5 572.8,375.9 575.6,376.3 578.5,376.9 581.1,377.7 582.8,378.6" fill="#1c5882"/>
<g fill="#389ae0"><polygon points="217.3,555.4 218.9,557.3 219.2,559.3 219.5,566.6 218.3,568.7 215.8,570.7 211.9,572.6 206.9,574.3 201,575.6 194.4,576.6 187.4,577.2 180.5,577.3 173.8,576.9 167.7,576.2 162.5,575 158.4,573.5 155.6,571.7 154.2,569.7 153.8,562.3 153.8,560.3 155.3,558.3 158.1,556.3 162.1,554.5 167.2,553 173,551.7 179.4,550.9 186,550.3 192.7,550.2 199.1,550.6 205,551.3 210.2,552.3 214.3,553.7"/><polygon points="156.7,563.8 146.5,387.2 146.6,386 148,384.9 150.8,383.8 154.6,382.8 159.5,381.9 165.1,381.2 171.2,380.7 177.6,380.4 183.9,380.4 190.1,380.6 195.7,381 200.6,381.6 204.5,382.4 207.3,383.3 208.8,384.4 209,385.5 216.5,561 215.4,562.9 213,564.8 209.5,566.5 204.9,568 199.5,569.2 193.5,570.1 187.1,570.6 180.7,570.7 174.6,570.4 169,569.7 164.3,568.6 160.5,567.2 158,565.6"/></g>
<polygon points="146.4,386.7 149.9,388.9 153.4,389.7 156.8,390.2 160.3,390.6 163.8,390.9 167.3,391.1 170.8,391.3 174.3,391.4 177.7,391.4 186.8,577.3 183.2,577.3 179.5,577.1 175.9,576.8 172.2,576.4 168.6,575.9 165,575.2 161.3,574.2 157.7,572.7 154,568.9" fill="url(#nb)"/>
<polygon points="208.8,384.4 207.3,383.3 204.5,382.4 200.6,381.6 195.7,381 190.1,380.6 183.9,380.4 177.6,380.4 171.2,380.7 165.1,381.2 159.5,381.9 154.6,382.8 150.8,383.8 148,384.9 146.6,386 146.5,387.2 147.8,388.3 150.5,389.3 154.3,390.1 159.3,390.8 165.1,391.2 171.5,391.4 178.2,391.3 184.8,391 191.1,390.5 196.8,389.7 201.6,388.8 205.4,387.8 207.9,386.6 209,385.5" fill="#1c5882" stroke="#1c5882" stroke-width="1"/>
<polygon points="206.4,384.5 205,383.5 202.4,382.6 198.8,381.9 194.3,381.3 189.1,381 183.5,380.8 177.6,380.9 171.7,381.1 166.1,381.6 160.9,382.2 156.5,383 152.9,384 150.4,385 149.1,386 149,387.1 150.2,388.1 152.7,389 156.2,389.8 160.8,390.4 166.1,390.8 172,390.9 178.1,390.9 184.2,390.6 190.1,390.1 195.3,389.4 199.7,388.6 203.2,387.6 205.5,386.6 206.6,385.5" fill="#389ae0"/>
<polygon points="150.9,387 150.5,380.2 150.6,379.2 151.8,378.3 154.2,377.4 157.5,376.5 161.6,375.8 166.5,375.2 171.8,374.8 177.3,374.5 182.8,374.5 188.1,374.6 192.9,375 197.1,375.5 200.5,376.1 202.9,376.9 204.2,377.8 204.4,378.8 204.7,385.5 203.7,386.5 201.5,387.5 198.3,388.4 194.1,389.2 189.2,389.8 183.8,390.3 178.1,390.5 172.4,390.6 166.9,390.4 161.9,390.1 157.7,389.5 154.3,388.8 152.1,387.9" fill="#389ae0"/>
<polygon points="204.2,377.8 202.9,376.9 200.5,376.1 197.1,375.5 192.9,375 188.1,374.6 182.8,374.5 177.3,374.5 171.8,374.8 166.5,375.2 161.6,375.8 157.5,376.5 154.2,377.4 151.8,378.3 150.6,379.2 150.5,380.2 151.7,381.1 154,381.9 157.3,382.6 161.6,383.2 166.6,383.5 172,383.7 177.8,383.6 183.5,383.4 188.9,382.9 193.8,382.3 198,381.5 201.2,380.7 203.4,379.7 204.4,378.8" fill="#1c5882" stroke="#1c5882" stroke-width="1"/>
<polygon points="201.8,377.9 200.6,377.1 198.4,376.4 195.3,375.8 191.5,375.3 187.1,375 182.3,374.9 177.3,374.9 172.3,375.2 167.5,375.5 163.1,376.1 159.3,376.7 156.3,377.5 154.2,378.3 153.1,379.2 153.1,380.1 154.1,380.9 156.2,381.7 159.2,382.3 163.1,382.8 167.6,383.1 172.6,383.3 177.7,383.2 182.9,383 187.8,382.6 192.3,382 196.1,381.3 199,380.5 201,379.7 201.9,378.8" fill="#389ae0"/>
<polygon points="200.8,377.2 198,376.3 193.7,375.6 188.1,375.1 181.9,374.9 175.3,375 168.8,375.4 163,376.1 158.2,377 154.8,378.1 153.1,379.2 153.2,380.3 155.2,381.4 158.9,382.2 158.5,381 160.2,379.9 163,379.1 166.2,378.5 169.2,378.1 171.8,377.9 174.1,377.6 176.5,377.3 179.7,376.9 183.9,376.7 189.1,376.5 195,376.7" fill="url(#mc)"/>
<polygon points="194.2,381.8 198.1,380.9 200.8,379.9 202.1,378.9 202,377.9 200.5,377 197.7,376.1 193.7,375.5 188.9,375.1 183.4,374.9 177.5,374.9 171.7,375.1 166.1,375.6 161.2,376.3 166.9,375.9 172.4,375.7 177.5,375.7 182,375.8 185.8,376.1 189.1,376.5 191.9,377 194.3,377.5 196.2,378.2 197.4,378.9 197.7,379.8 196.7,380.8" fill="#1c5882"/>
<g fill="#389ae0"><polygon points="502.5,565 502.3,572.4 501,574.4 498.4,576.4 494.4,578 489.4,579.4 483.4,580.4 476.7,581 469.8,581.1 462.8,580.8 456.1,580 450.1,578.8 445,577.2 440.9,575.4 438.2,573.4 436.9,571.3 437,563.9 437.1,561.8 438.6,559.8 441.5,558 445.5,556.5 450.6,555.2 456.4,554.3 462.8,553.8 469.5,553.7 476.1,554 482.6,554.7 488.5,555.8 493.6,557.2 497.7,558.9 500.7,560.8 502.3,562.9"/><polygon points="504.8,388.9 499.6,566.5 498.5,568.4 496,570.1 492.4,571.7 487.8,572.9 482.3,573.8 476.2,574.3 469.9,574.4 463.5,574.1 457.4,573.4 451.9,572.3 447.2,570.9 443.5,569.3 441,567.5 439.8,565.6 442.2,388.3 442.3,387.1 443.8,386 446.4,385 450.3,384.1 455.1,383.4 460.7,382.8 466.8,382.6 473.1,382.5 479.5,382.7 485.7,383.1 491.3,383.7 496.2,384.5 500.2,385.5 503,386.5 504.5,387.7"/></g>
<polygon points="442.1,388 445.2,390.5 448.4,391.4 451.5,392 454.6,392.5 457.7,392.9 460.8,393.2 463.9,393.4 467,393.6 470.2,393.7 466.1,581.1 462.8,580.9 459.6,580.6 456.3,580.2 453.1,579.7 449.8,579 446.6,578.1 443.3,577 440.1,575.3 436.8,570.8" fill="url(#mb)"/>
<polygon points="470.2,393.7 472.2,393.7 474.3,393.7 476.4,393.7 478.5,393.6 480.5,393.5 482.6,393.4 484.7,393.3 486.8,393.2 488.8,393 485.6,579.8 483.5,580.1 481.3,580.4 479.1,580.7 477,580.9 474.8,581 472.6,581.1 470.4,581.1 468.3,581.1 466.1,581.1" fill="url(#lb)"/>
<polygon points="442.1,388 442.6,389 443.1,389.4 443.6,389.7 444.1,390 444.6,390.2 445.1,390.4 445.5,390.6 446,390.7 446.5,390.9 441.4,576 440.9,575.8 440.4,575.5 439.9,575.1 439.4,574.8 438.8,574.4 438.3,573.9 437.8,573.3 437.3,572.6 436.8,570.8" fill="#1c5882"/>
<polygon points="503,386.5 500.2,385.5 496.2,384.5 491.3,383.7 485.7,383.1 479.5,382.7 473.1,382.5 466.8,382.6 460.7,382.8 455.1,383.4 450.3,384.1 446.4,385 443.8,386 442.3,387.1 442.2,388.3 443.5,389.4 446.1,390.5 450,391.5 454.9,392.4 460.7,393.1 467.1,393.5 473.7,393.7 480.4,393.6 486.7,393.3 492.5,392.8 497.3,392 501.1,391.1 503.6,390 504.8,388.9 504.5,387.7" fill="#1c5882" stroke="#1c5882" stroke-width="1"/>
<polygon points="500.6,386.6 498.1,385.7 494.4,384.8 489.9,384 484.7,383.5 479,383.1 473.2,382.9 467.3,383 461.7,383.2 456.5,383.7 452.1,384.4 448.6,385.2 446.1,386.1 444.8,387.2 444.7,388.2 445.9,389.3 448.3,390.3 451.9,391.2 456.4,392 461.7,392.6 467.6,393 473.7,393.2 479.8,393.2 485.7,392.9 490.9,392.4 495.4,391.7 498.8,390.8 501.2,389.8 502.3,388.8 502.1,387.7" fill="#389ae0"/>
<polygon points="446.8,380.4 448,379.5 450.3,378.6 453.6,377.9 457.7,377.3 462.5,376.8 467.8,376.6 473.3,376.6 478.8,376.7 484.1,377 489,377.6 493.2,378.2 496.6,379 499.1,379.9 500.4,380.9 500.5,381.9 500.4,388.7 499.3,389.7 497.2,390.6 493.9,391.4 489.8,392.1 484.8,392.5 479.4,392.8 473.7,392.9 468,392.7 462.5,392.3 457.6,391.8 453.3,391 450,390.2 447.7,389.2 446.6,388.2 446.7,381.4" fill="#389ae0"/>
<polygon points="499.1,379.9 496.6,379 493.2,378.2 489,377.6 484.1,377 478.8,376.7 473.3,376.6 467.8,376.6 462.5,376.8 457.7,377.3 453.6,377.9 450.3,378.6 448,379.5 446.8,380.4 446.7,381.4 447.8,382.4 450.1,383.3 453.4,384.1 457.7,384.8 462.6,385.4 468.1,385.8 473.8,385.9 479.6,385.9 485,385.6 489.9,385.1 494.1,384.5 497.3,383.7 499.5,382.8 500.5,381.9 500.4,380.9" fill="#1c5882" stroke="#1c5882" stroke-width="1"/>
<polygon points="496.7,380.1 494.5,379.2 491.4,378.5 487.6,377.9 483.2,377.4 478.4,377.1 473.3,377 468.3,377 463.5,377.2 459.2,377.6 455.4,378.2 452.4,378.8 450.3,379.6 449.2,380.5 449.2,381.4 450.2,382.2 452.3,383.1 455.3,383.9 459.2,384.5 463.7,385 468.6,385.3 473.8,385.5 479,385.4 483.9,385.2 488.4,384.8 492.2,384.2 495.1,383.5 497.1,382.7 498,381.8 497.9,380.9" fill="#389ae0"/>
<polygon points="494.9,379.4 490.9,378.4 485.6,377.6 479.5,377.2 472.9,377 466.4,377.1 460.4,377.5 455.3,378.2 451.6,379.1 449.5,380.2 449.2,381.3 450.7,382.5 454,383.6 458.8,384.4 456.9,383.2 457.3,382.1 459.1,381.3 461.6,380.7 464.1,380.3 466.4,380 468.3,379.7 470.5,379.4 473.2,379.1 477.1,378.8 482.2,378.6 488.4,378.8" fill="url(#mc)"/>
<polygon points="493.8,384 496.7,383.1 498.2,382.1 498.3,381 496.9,380 494.3,379.1 490.4,378.2 485.6,377.6 480.2,377.1 474.4,376.9 468.5,377 462.9,377.2 457.9,377.7 453.8,378.4 459.6,378.1 465.1,378 470,378.2 474.1,378.4 477.5,378.8 480.4,379.1 483.1,379.5 485.8,379.9 488.5,380.4 491.1,381.1 493.1,381.9 494.2,382.9" fill="#1c5882"/>
<g fill="#389ae0"><polygon points="348.7,578.6 348.7,571.1 349.2,569 351.2,567 354.4,565.1 358.9,563.4 364.3,562.1 370.4,561.2 377,560.7 383.8,560.6 390.5,560.9 396.9,561.6 402.7,562.8 407.6,564.2 411.4,566 414,568 415.2,570.1 415.2,577.6 415,579.8 413.3,581.9 410.2,583.9 405.9,585.6 400.4,587.1 394.1,588.1 387.2,588.7 380.1,588.8 373.1,588.4 366.5,587.6 360.6,586.4 355.7,584.8 352,582.9 349.6,580.8"/><polygon points="351.5,572.8 350,392.7 350.5,391.5 352.4,390.3 355.5,389.3 359.8,388.4 364.9,387.6 370.8,387.1 377.1,386.8 383.6,386.8 390,386.9 396.1,387.4 401.6,388 406.3,388.8 410,389.8 412.5,390.9 413.6,392.1 412.4,571.9 412.2,573.8 410.6,575.8 407.8,577.6 403.8,579.1 398.8,580.4 393,581.4 386.8,581.9 380.3,582 373.8,581.7 367.8,580.9 362.4,579.8 357.9,578.4 354.5,576.7 352.4,574.8"/></g>
<polygon points="350,392.4 352.9,394.9 355.8,395.8 358.7,396.5 361.6,397 364.5,397.4 367.3,397.7 370.2,397.9 373.1,398.1 376,398.2 375.9,588.6 372.9,588.4 369.8,588.1 366.8,587.6 363.8,587.1 360.8,586.4 357.8,585.4 354.8,584.3 351.7,582.6 348.7,578.1" fill="url(#mb)"/>
<polygon points="376,398.2 377.9,398.3 379.9,398.3 381.8,398.3 383.7,398.3 385.6,398.3 387.6,398.3 389.5,398.2 391.4,398.1 393.3,397.9 394,588.1 392,588.3 390,588.5 387.9,588.6 385.9,588.7 383.9,588.8 381.9,588.8 379.9,588.8 377.9,588.7 375.9,588.6" fill="url(#lb)"/>
<polygon points="350,392.4 350.4,393.3 350.7,393.7 351.1,393.9 351.4,394.2 351.8,394.4 352.1,394.5 352.5,394.7 352.8,394.9 353.2,395 352.1,582.8 351.7,582.5 351.3,582.2 350.9,581.9 350.6,581.6 350.2,581.3 349.8,580.8 349.5,580.3 349.1,579.7 348.7,578.1" fill="#1c5882"/>
<polygon points="412.5,390.9 410,389.8 406.3,388.8 401.6,388 396.1,387.4 390,386.9 383.6,386.8 377.1,386.8 370.8,387.1 364.9,387.6 359.8,388.4 355.5,389.3 352.4,390.3 350.5,391.5 350,392.7 350.9,393.9 353.1,395.1 356.7,396.1 361.4,397 367,397.7 373.3,398.1 380.1,398.3 386.9,398.3 393.4,397.9 399.5,397.4 404.7,396.6 408.9,395.6 411.8,394.5 413.4,393.3 413.6,392.1" fill="#1c5882" stroke="#1c5882" stroke-width="1"/>
<polygon points="410.1,391 407.8,390 404.4,389.1 400.1,388.3 395,387.7 389.4,387.4 383.5,387.2 377.5,387.2 371.6,387.5 366.2,388 361.5,388.7 357.6,389.5 354.7,390.5 353,391.6 352.6,392.7 353.4,393.8 355.5,394.9 358.7,395.8 363,396.6 368.2,397.3 374,397.7 380.2,397.9 386.5,397.8 392.5,397.5 398,397 402.8,396.2 406.7,395.4 409.4,394.3 410.9,393.3 411.1,392.1" fill="#389ae0"/>
<polygon points="409.2,385.2 409.2,392.2 409,393.2 407.6,394.2 405,395.2 401.4,396 397,396.7 391.8,397.2 386.1,397.4 380.3,397.5 374.6,397.3 369.1,396.9 364.3,396.3 360.3,395.6 357.2,394.7 355.2,393.7 354.5,392.7 354.4,385.7 354.9,384.7 356.5,383.7 359.1,382.9 362.8,382.1 367.2,381.5 372.3,381 377.7,380.8 383.4,380.7 388.9,380.9 394.2,381.2 398.9,381.8 403,382.5 406.1,383.3 408.2,384.2" fill="#389ae0"/>
<polygon points="408.2,384.2 406.1,383.3 403,382.5 398.9,381.8 394.2,381.2 388.9,380.9 383.4,380.7 377.7,380.8 372.3,381 367.2,381.5 362.8,382.1 359.1,382.9 356.5,383.7 354.9,384.7 354.4,385.7 355.2,386.7 357.2,387.7 360.2,388.6 364.3,389.3 369.1,389.9 374.5,390.3 380.3,390.4 386.1,390.4 391.8,390.1 397,389.6 401.5,389 405.1,388.2 407.6,387.2 409,386.2 409.2,385.2" fill="#1c5882" stroke="#1c5882" stroke-width="1"/>
<polygon points="405.8,384.3 403.9,383.5 401,382.7 397.4,382.1 393.1,381.6 388.3,381.3 383.2,381.2 378.1,381.2 373.2,381.4 368.6,381.8 364.5,382.4 361.2,383.1 358.8,383.9 357.3,384.8 357,385.7 357.7,386.6 359.5,387.5 362.2,388.3 365.9,389 370.3,389.5 375.2,389.8 380.5,390 385.7,389.9 390.9,389.7 395.6,389.2 399.6,388.6 402.9,387.9 405.2,387.1 406.5,386.2 406.7,385.3" fill="#389ae0"/>
<polygon points="404.3,383.6 400.5,382.6 395.4,381.9 389.4,381.4 382.8,381.1 376.1,381.3 369.8,381.7 364.4,382.4 360.3,383.4 357.7,384.5 357,385.7 358.1,386.9 361,388 365.6,388.9 364.1,387.6 364.9,386.5 367.1,385.6 369.9,385 372.6,384.6 375,384.3 377.1,384 379.4,383.7 382.3,383.3 386.4,383 391.6,382.9 397.8,383" fill="url(#mc)"/>
<polygon points="401.3,388.4 404.6,387.5 406.6,386.4 407.1,385.4 406.1,384.3 403.7,383.3 400.1,382.5 395.5,381.8 390.1,381.3 384.3,381.1 378.3,381.1 372.5,381.4 367.3,381.9 362.8,382.6 368.6,382.3 374.2,382.1 379.2,382.2 383.5,382.5 387.1,382.8 390.2,383.2 393.1,383.6 395.8,384.1 398.3,384.7 400.5,385.4 402.1,386.3 402.5,387.3" fill="#1c5882"/>
<g fill="#389ae0"><polygon points="259.9,590.7 258,588.5 257.5,586.3 257.3,578.6 258.3,576.4 260.7,574.3 264.4,572.4 269.3,570.7 275.1,569.3 281.5,568.4 288.3,567.8 295.3,567.7 302,568 308.4,568.8 314,570 318.7,571.5 322.2,573.3 324.4,575.4 325.2,577.6 325.3,585.1 324.7,587.4 322.5,589.6 319,591.7 314.2,593.5 308.3,595 301.7,596 294.6,596.7 287.3,596.8 280.2,596.4 273.7,595.5 267.9,594.3 263.3,592.6"/><polygon points="319.5,396.7 322.3,579.4 321.7,581.4 319.7,583.4 316.5,585.3 312.1,586.9 306.7,588.2 300.7,589.2 294.2,589.7 287.5,589.8 281.1,589.5 275.1,588.7 269.8,587.6 265.6,586.1 262.5,584.3 260.7,582.4 260.2,580.4 254.5,397.3 255.4,396.1 257.8,394.9 261.4,393.8 266,392.8 271.6,392.1 277.7,391.5 284.3,391.2 290.9,391.2 297.4,391.3 303.4,391.8 308.8,392.4 313.3,393.3 316.6,394.3 318.7,395.5"/></g>
<polygon points="254.4,397.5 257.1,399.8 259.8,400.6 262.4,401.2 265.1,401.7 267.8,402.1 270.4,402.4 273.1,402.6 275.7,402.8 278.4,403 282.5,596.4 279.7,596.2 276.9,595.8 274.2,595.4 271.4,594.8 268.6,594.2 265.8,593.3 263,592.2 260.3,590.7 257.5,586.6" fill="url(#mb)"/>
<polygon points="278.4,403 280.2,403 282,403.1 283.7,403.1 285.5,403.2 287.3,403.2 289.1,403.2 290.9,403.1 292.6,403.1 294.4,403 299.2,596.5 297.3,596.6 295.5,596.7 293.6,596.8 291.8,596.8 289.9,596.8 288.1,596.7 286.2,596.7 284.4,596.6 282.5,596.4" fill="url(#lb)"/>
<polygon points="254.4,397.5 254.6,398.2 254.9,398.5 255.1,398.7 255.3,398.8 255.5,399 255.7,399.1 255.9,399.2 256.2,399.4 256.4,399.5 259.5,590.1 259.3,589.9 259.1,589.7 258.8,589.5 258.6,589.2 258.4,589 258.2,588.7 257.9,588.3 257.7,587.8 257.5,586.6" fill="#1c5882"/>
<polygon points="318.7,395.5 316.6,394.3 313.3,393.3 308.8,392.4 303.4,391.8 297.4,391.3 290.9,391.2 284.3,391.2 277.7,391.5 271.6,392.1 266,392.8 261.4,393.8 257.8,394.9 255.4,396.1 254.5,397.3 254.9,398.6 256.7,399.8 260,400.9 264.4,401.8 269.9,402.5 276.1,403 282.9,403.2 289.9,403.1 296.7,402.8 303,402.2 308.7,401.3 313.3,400.3 316.7,399.2 318.8,398 319.5,396.7" fill="#1c5882" stroke="#1c5882" stroke-width="1"/>
<polygon points="316.2,395.6 314.3,394.5 311.2,393.6 307.1,392.8 302.1,392.2 296.6,391.8 290.6,391.6 284.5,391.7 278.4,392 272.8,392.5 267.7,393.2 263.4,394 260.1,395 257.9,396.2 257.1,397.3 257.5,398.5 259.2,399.6 262.1,400.5 266.2,401.4 271.3,402 277,402.5 283.2,402.7 289.6,402.6 295.9,402.3 301.7,401.7 306.9,401 311.2,400.1 314.3,399 316.2,397.9 316.9,396.7" fill="#389ae0"/>
<polygon points="259,397.3 258.8,390.2 259.6,389.2 261.6,388.2 264.7,387.3 268.7,386.5 273.5,385.8 278.8,385.4 284.5,385.1 290.2,385 295.8,385.2 301,385.6 305.7,386.1 309.5,386.8 312.4,387.7 314.2,388.7 314.8,389.7 314.9,396.8 314.3,397.8 312.5,398.9 309.5,399.9 305.6,400.7 300.8,401.4 295.3,401.9 289.5,402.2 283.5,402.3 277.7,402.1 272.3,401.7 267.6,401.1 263.8,400.3 261,399.4 259.4,398.4" fill="#389ae0"/>
<polygon points="314.2,388.7 312.4,387.7 309.5,386.8 305.7,386.1 301,385.6 295.8,385.2 290.2,385 284.5,385.1 278.8,385.4 273.5,385.8 268.7,386.5 264.7,387.3 261.6,388.2 259.6,389.2 258.8,390.2 259.2,391.3 260.8,392.3 263.6,393.2 267.4,393.9 272.1,394.5 277.5,394.9 283.3,395.1 289.3,395 295.1,394.8 300.6,394.3 305.4,393.6 309.4,392.7 312.4,391.8 314.2,390.8 314.8,389.7" fill="#1c5882" stroke="#1c5882" stroke-width="1"/>
<polygon points="311.7,388.8 310,387.9 307.4,387.1 303.9,386.5 299.7,386 295,385.6 289.9,385.5 284.7,385.5 279.5,385.8 274.7,386.2 270.4,386.8 266.7,387.5 264,388.3 262.1,389.3 261.4,390.2 261.8,391.2 263.2,392.1 265.8,392.9 269.2,393.6 273.5,394.1 278.4,394.5 283.6,394.6 289.1,394.6 294.4,394.3 299.3,393.9 303.7,393.2 307.3,392.5 310,391.6 311.6,390.7 312.2,389.7" fill="#389ae0"/>
<polygon points="310.4,388.1 307,387 302.1,386.2 296.1,385.7 289.4,385.5 282.6,385.6 276,386.1 270.3,386.8 265.7,387.8 262.6,388.9 261.4,390.2 262.1,391.4 264.6,392.6 268.9,393.5 267.9,392.2 269.1,391 271.7,390.1 274.8,389.5 277.7,389 280.3,388.7 282.6,388.4 285,388.1 288.1,387.7 292.4,387.4 297.8,387.3 304,387.4" fill="url(#mc)"/>
<polygon points="305.5,393 309.2,392 311.6,391 312.5,389.8 311.9,388.8 309.9,387.7 306.6,386.8 302.1,386.2 296.8,385.7 291,385.4 284.9,385.5 278.9,385.8 273.4,386.3 268.5,387 274.4,386.6 280.1,386.4 285.3,386.5 289.8,386.7 293.7,387 297,387.4 300,387.9 302.6,388.4 304.9,389.1 306.7,389.9 307.7,390.8 307.4,391.9" fill="#1c5882"/>
<g fill="#389ae0"><polygon points="622.4,583.7 621.9,591.4 621.2,593.7 619,595.8 615.4,597.6 610.5,599.1 604.5,600.2 597.7,600.8 590.5,600.9 583.1,600.6 575.9,599.7 569.3,598.4 563.5,596.7 558.8,594.7 555.4,592.5 553.4,590.2 552.9,587.9 553.3,580.3 554.3,578.1 556.7,576.2 560.5,574.5 565.4,573.1 571.2,572.1 577.7,571.5 584.7,571.4 591.7,571.8 598.6,572.5 605.1,573.7 610.8,575.3 615.6,577.1 619.3,579.2 621.6,581.4"/><polygon points="556.1,582.2 564.1,398.5 565,397.2 567.3,396.1 570.9,395.2 575.5,394.4 581.1,393.8 587.3,393.5 594,393.5 600.7,393.6 607.3,394.1 613.6,394.8 619.1,395.6 623.7,396.7 627.2,397.9 629.5,399.1 630.3,400.4 619.3,585.3 618.7,587.4 616.6,589.3 613.3,590.9 608.8,592.3 603.3,593.3 597.1,593.8 590.5,593.9 583.8,593.6 577.2,592.8 571.1,591.6 565.8,590.1 561.5,588.3 558.4,586.4 556.6,584.3"/></g>
<polygon points="564.1,398.9 567.7,402 571.3,403.1 574.8,403.9 578.4,404.5 582,404.9 585.6,405.3 589.1,405.5 592.7,405.6 596.3,405.7 586.5,600.9 582.7,600.8 579,600.6 575.3,600.2 571.6,599.6 567.8,598.8 564.1,597.7 560.4,596.3 556.7,594.2 552.9,588.7" fill="url(#ma)"/>
<polygon points="596.3,405.7 598.7,405.7 601,405.6 603.4,405.6 605.8,405.5 608.2,405.3 610.6,405.1 613,404.9 615.3,404.6 617.7,404.2 608.8,598.3 606.3,598.9 603.9,599.5 601.4,599.9 598.9,600.3 596.4,600.5 593.9,600.7 591.4,600.9 589,600.9 586.5,600.9" fill="url(#la)"/>
<polygon points="564.1,398.9 564.8,400.2 565.4,400.8 566.1,401.2 566.8,401.6 567.4,401.9 568.1,402.1 568.7,402.4 569.4,402.6 570.1,402.8 559.1,595.7 558.5,595.3 557.8,594.9 557.1,594.5 556.4,594 555.7,593.5 555,592.9 554.3,592.1 553.6,591.1 552.9,588.7" fill="#1c5882"/>
<polygon points="627.2,397.9 623.7,396.7 619.1,395.6 613.6,394.8 607.3,394.1 600.7,393.6 594,393.5 587.3,393.5 581.1,393.8 575.5,394.4 570.9,395.2 567.3,396.1 565,397.2 564.1,398.5 564.6,399.7 566.6,401 569.9,402.2 574.4,403.3 580,404.3 586.4,405 593.3,405.5 600.3,405.7 607.3,405.6 613.8,405.3 619.5,404.7 624.1,403.8 627.6,402.8 629.7,401.6 630.3,400.4 629.5,399.1" fill="#1c5882" stroke="#1c5882" stroke-width="1"/>
<polygon points="624.8,398 621.6,396.9 617.4,395.9 612.3,395.1 606.5,394.5 600.4,394.1 594.2,393.9 588.1,394 582.4,394.3 577.2,394.8 572.9,395.5 569.7,396.4 567.6,397.4 566.7,398.5 567.2,399.7 569,400.9 572,402 576.2,403 581.4,403.9 587.2,404.5 593.6,405 600.1,405.2 606.5,405.1 612.4,404.8 617.6,404.2 622,403.5 625.1,402.5 627.1,401.5 627.6,400.3 626.9,399.1" fill="#389ae0"/>
<polygon points="626,393.1 625.6,400.3 625.1,401.3 623.3,402.3 620.3,403.2 616.3,403.9 611.4,404.4 605.8,404.7 599.9,404.8 593.8,404.6 587.9,404.2 582.4,403.6 577.6,402.8 573.7,401.8 570.8,400.8 569.2,399.7 568.7,398.6 569,391.5 569.8,390.5 571.8,389.5 574.8,388.7 578.8,388.1 583.6,387.6 589,387.3 594.7,387.3 600.6,387.5 606.3,387.8 611.7,388.4 616.4,389.1 620.4,390 623.4,391 625.3,392.1" fill="#389ae0"/>
<polygon points="623.4,391 620.4,390 616.4,389.1 611.7,388.4 606.3,387.8 600.6,387.5 594.7,387.3 589,387.3 583.6,387.6 578.8,388.1 574.8,388.7 571.8,389.5 569.8,390.5 569,391.5 569.5,392.6 571.2,393.6 574,394.7 578,395.6 582.8,396.4 588.3,397 594.2,397.4 600.3,397.5 606.2,397.5 611.8,397.2 616.7,396.7 620.7,396 623.7,395.1 625.5,394.2 626,393.1 625.3,392.1" fill="#1c5882" stroke="#1c5882" stroke-width="1"/>
<polygon points="621,391.1 618.3,390.2 614.7,389.4 610.4,388.8 605.5,388.2 600.3,387.9 595,387.7 589.8,387.8 584.9,388 580.5,388.5 576.9,389.1 574.1,389.8 572.3,390.7 571.6,391.6 572.1,392.6 573.6,393.5 576.2,394.4 579.8,395.3 584.1,396 589.1,396.5 594.5,396.9 600,397 605.4,397 610.4,396.7 614.9,396.3 618.5,395.7 621.2,394.9 622.9,394 623.4,393 622.8,392.1" fill="#389ae0"/>
<polygon points="618.8,390.4 614.1,389.3 608.2,388.5 601.5,388 594.5,387.7 587.8,387.9 581.7,388.3 576.8,389.1 573.4,390.1 571.8,391.3 572,392.5 574.3,393.8 578.3,395 583.8,395.9 581.1,394.6 580.9,393.4 582.4,392.4 584.7,391.8 587.1,391.4 589.3,391 591.2,390.7 593.3,390.4 596,390 599.9,389.7 605.2,389.6 611.7,389.7" fill="url(#mb)"/>
<polygon points="620.1,395.4 622.6,394.4 623.7,393.3 623.2,392.2 621.3,391.1 618,390 613.5,389.1 608.2,388.4 602.2,387.9 596,387.7 589.9,387.7 584.2,388 579.3,388.6 575.3,389.3 581.4,389 587.2,389 592.3,389.2 596.6,389.5 600,389.9 603,390.3 605.7,390.7 608.6,391.1 611.7,391.6 614.8,392.2 617.7,393.1 619.6,394.2" fill="#1c5882"/>
<polygon points="553.3,586.1 555.3,588.8 559.2,591.3 564.8,593.5 571.8,595.3 579.8,596.6 588.3,597.3 596.7,597.3 604.6,596.6 611.4,595.3 616.8,593.5 620.4,591.3 622,588.8 621.7,586.1 620.8,577.3 621.2,579.8 619.6,582.1 616.1,584.2 611,585.9 604.4,587.1 596.8,587.8 588.7,587.8 580.5,587.1 572.9,585.9 566.1,584.2 560.7,582.1 557,579.7 555.1,577.3" fill="url(#s)"/>
<g fill="#389ae0"><polygon points="229.9,580.9 231.7,583 232,585.3 232.3,593 231.2,595.3 228.5,597.6 224.5,599.8 219.2,601.6 212.9,603.2 206,604.3 198.6,604.9 191.2,605 184,604.6 177.6,603.8 172,602.4 167.6,600.7 164.6,598.7 163.1,596.5 162.6,588.7 162.6,586.4 164.2,584.1 167.1,581.9 171.3,579.9 176.6,578.2 182.8,576.8 189.5,575.8 196.6,575.2 203.7,575.1 210.5,575.4 216.8,576.2 222.2,577.4 226.7,579"/><polygon points="165.7,590.2 155.3,403.4 155.4,402.1 156.9,400.8 159.7,399.6 163.8,398.4 168.9,397.5 174.8,396.7 181.3,396.1 188.1,395.8 194.9,395.7 201.4,395.9 207.4,396.4 212.6,397 216.8,397.9 219.8,399 221.5,400.2 221.8,401.5 229.1,587.1 228.1,589.2 225.6,591.3 221.9,593.2 217.1,594.9 211.3,596.3 205,597.3 198.2,597.9 191.4,598 184.9,597.6 179,596.8 173.9,595.6 169.9,594.1 167.1,592.3"/></g>
<polygon points="155.2,402.9 158.9,405.3 162.6,406.2 166.3,406.8 170,407.3 173.7,407.6 177.4,407.9 181.1,408 184.8,408.1 188.5,408.2 197.6,605 193.8,605 189.9,604.8 186.1,604.5 182.2,604 178.3,603.4 174.5,602.6 170.6,601.5 166.8,599.9 162.9,595.5" fill="url(#nb)"/>
<polygon points="221.5,400.2 219.8,399 216.8,397.9 212.6,397 207.4,396.4 201.4,395.9 194.9,395.7 188.1,395.8 181.3,396.1 174.8,396.7 168.9,397.5 163.8,398.4 159.7,399.6 156.9,400.8 155.4,402.1 155.3,403.4 156.8,404.7 159.6,405.8 163.8,406.7 169.1,407.5 175.3,408 182.1,408.2 189.2,408.1 196.3,407.7 203,407.1 209,406.3 214.1,405.2 218,404.1 220.6,402.8 221.8,401.5" fill="#1c5882" stroke="#1c5882" stroke-width="1"/>
<polygon points="218.9,400.3 217.4,399.2 214.6,398.2 210.7,397.4 205.9,396.8 200.4,396.4 194.4,396.2 188.1,396.2 181.9,396.5 175.9,397.1 170.5,397.8 165.8,398.7 162,399.8 159.4,400.9 158,402.1 158,403.3 159.3,404.4 162,405.5 165.8,406.3 170.7,407 176.4,407.5 182.6,407.7 189.2,407.6 195.7,407.3 201.8,406.7 207.4,405.9 212.1,405 215.7,403.9 218.1,402.7 219.2,401.5" fill="#389ae0"/>
<polygon points="160,403.2 159.6,396 159.7,394.9 160.9,393.8 163.4,392.8 166.9,391.8 171.3,391 176.4,390.3 182,389.8 187.8,389.6 193.7,389.5 199.3,389.7 204.5,390.1 209,390.6 212.6,391.4 215.2,392.3 216.7,393.3 216.9,394.4 217.2,401.5 216.1,402.6 213.9,403.7 210.5,404.8 206.1,405.6 201,406.4 195.2,406.9 189.1,407.2 183,407.3 177.2,407.1 171.9,406.7 167.3,406 163.7,405.2 161.3,404.2" fill="#389ae0"/>
<polygon points="216.7,393.3 215.2,392.3 212.6,391.4 209,390.6 204.5,390.1 199.3,389.7 193.7,389.5 187.8,389.6 182,389.8 176.4,390.3 171.3,391 166.9,391.8 163.4,392.8 160.9,393.8 159.7,394.9 159.6,396 160.9,397 163.4,397.9 166.9,398.7 171.5,399.4 176.8,399.8 182.7,399.9 188.8,399.9 194.9,399.6 200.6,399.1 205.8,398.4 210.2,397.5 213.6,396.5 215.9,395.4 216.9,394.4" fill="#1c5882" stroke="#1c5882" stroke-width="1"/>
<polygon points="214.1,393.4 212.7,392.5 210.4,391.7 207.1,391 203,390.5 198.3,390.1 193.2,390 187.9,390 182.5,390.3 177.5,390.7 172.8,391.3 168.8,392.1 165.7,392.9 163.4,393.9 162.3,394.9 162.3,395.9 163.4,396.8 165.7,397.6 168.9,398.4 173.1,398.9 177.9,399.3 183.2,399.4 188.7,399.4 194.3,399.1 199.5,398.7 204.2,398 208.2,397.2 211.2,396.3 213.3,395.4 214.2,394.4" fill="#389ae0"/>
<polygon points="213,392.6 210,391.6 205.3,390.7 199.4,390.2 192.7,390 185.7,390.1 178.9,390.6 172.7,391.3 167.6,392.4 164.1,393.5 162.3,394.8 162.5,396.1 164.7,397.3 168.6,398.3 168.2,396.9 169.9,395.7 172.9,394.8 176.3,394.1 179.4,393.6 182.1,393.3 184.6,393 187.2,392.7 190.5,392.3 195,392 200.5,391.8 206.8,392" fill="url(#mc)"/>
<polygon points="206.2,397.7 210.3,396.8 213.2,395.7 214.5,394.5 214.4,393.4 212.7,392.3 209.6,391.4 205.4,390.7 200.2,390.2 194.3,389.9 188.1,390 181.9,390.3 176,390.8 170.9,391.6 176.9,391.1 182.7,390.8 188.1,390.8 192.9,391 197,391.4 200.5,391.8 203.6,392.3 206.1,392.9 208.2,393.7 209.5,394.5 209.8,395.5 208.8,396.6" fill="#1c5882"/>
<g fill="#389ae0"><polygon points="533.2,591.7 532.9,599.5 531.7,601.8 529.1,604 525,605.9 519.7,607.4 513.4,608.6 506.4,609.2 499,609.3 491.5,608.9 484.4,608 477.9,606.7 472.3,604.9 467.9,602.9 464.9,600.6 463.4,598.2 463.4,595.9 463.5,588.1 465,585.9 467.9,583.8 472.1,582.1 477.4,580.6 483.5,579.6 490.2,579 497.3,578.9 504.4,579.3 511.3,580.1 517.6,581.3 523.1,582.9 527.6,584.8 530.9,587 532.8,589.3"/><polygon points="537,405.3 530.1,593.3 529,595.4 526.6,597.4 522.8,599.1 518,600.5 512.2,601.5 505.8,602.1 499,602.2 492.2,601.9 485.7,601 479.8,599.8 474.7,598.3 470.7,596.4 467.9,594.4 466.5,592.2 466.4,590.1 470.3,403.3 471.7,402 474.4,400.9 478.4,399.9 483.5,399.1 489.3,398.5 495.8,398.2 502.5,398.1 509.3,398.3 515.9,398.8 522,399.5 527.3,400.4 531.7,401.4 534.8,402.7 536.6,404"/></g>
<polygon points="470.2,403.7 473.5,406.8 476.8,408 480.1,408.8 483.5,409.4 486.8,409.8 490.1,410.2 493.4,410.5 496.7,410.6 500.1,410.8 494.4,609.3 490.9,609.1 487.4,608.8 484,608.3 480.5,607.6 477.1,606.8 473.6,605.7 470.1,604.3 466.7,602.2 463.2,596.7" fill="url(#ma)"/>
<polygon points="500.1,410.8 502.3,410.8 504.5,410.8 506.7,410.8 508.9,410.7 511.1,410.6 513.4,410.5 515.6,410.3 517.8,410.1 520,409.9 515.1,607.7 512.8,608.2 510.5,608.5 508.2,608.8 505.9,609 503.6,609.2 501.3,609.3 499,609.4 496.7,609.3 494.4,609.3" fill="url(#la)"/>
<polygon points="470.2,403.7 470.7,405 471.2,405.5 471.7,405.9 472.2,406.2 472.8,406.5 473.3,406.7 473.8,406.9 474.3,407.1 474.8,407.3 468.1,603.1 467.5,602.8 467,602.4 466.5,602 465.9,601.6 465.4,601.1 464.8,600.5 464.3,599.8 463.7,598.9 463.2,596.7" fill="#1c5882"/>
<polygon points="534.8,402.7 531.7,401.4 527.3,400.4 522,399.5 515.9,398.8 509.3,398.3 502.5,398.1 495.8,398.2 489.3,398.5 483.5,399.1 478.4,399.9 474.4,400.9 471.7,402 470.3,403.3 470.4,404.6 471.9,405.9 474.8,407.2 479,408.3 484.4,409.3 490.6,410.1 497.5,410.6 504.6,410.8 511.7,410.7 518.4,410.4 524.5,409.7 529.5,408.9 533.4,407.8 535.9,406.6 537,405.3 536.6,404" fill="#1c5882" stroke="#1c5882" stroke-width="1"/>
<polygon points="532.4,402.8 529.5,401.7 525.5,400.7 520.6,399.8 515,399.2 508.9,398.8 502.6,398.6 496.4,398.6 490.4,398.9 485,399.5 480.4,400.2 476.7,401.1 474.2,402.2 472.9,403.4 473,404.6 474.4,405.8 477.1,407 481,408 485.9,408.9 491.7,409.6 498,410.1 504.5,410.3 511,410.2 517.2,409.9 522.8,409.3 527.4,408.5 531,407.5 533.3,406.4 534.4,405.2 534,404" fill="#389ae0"/>
<polygon points="532.6,397.9 532.3,405.2 531.4,406.3 529.2,407.3 525.8,408.2 521.5,409 516.3,409.5 510.5,409.8 504.5,409.9 498.3,409.7 492.5,409.2 487.1,408.6 482.5,407.8 478.9,406.8 476.3,405.7 475,404.6 474.9,403.4 475.1,396.2 476.3,395.2 478.6,394.2 482.1,393.3 486.4,392.7 491.5,392.2 497,391.9 502.9,391.8 508.8,392 514.5,392.4 519.7,393 524.3,393.8 528,394.7 530.7,395.7 532.3,396.8" fill="#389ae0"/>
<polygon points="530.7,395.7 528,394.7 524.3,393.8 519.7,393 514.5,392.4 508.8,392 502.9,391.8 497,391.9 491.5,392.2 486.4,392.7 482.1,393.3 478.6,394.2 476.3,395.2 475.1,396.2 475.2,397.3 476.5,398.4 479,399.5 482.7,400.4 487.3,401.3 492.7,401.9 498.5,402.3 504.7,402.5 510.8,402.4 516.5,402.1 521.7,401.6 526.1,400.9 529.4,400 531.6,399 532.6,397.9 532.3,396.8" fill="#1c5882" stroke="#1c5882" stroke-width="1"/>
<polygon points="528.2,395.8 525.8,394.9 522.4,394.1 518.2,393.4 513.5,392.8 508.3,392.5 503,392.3 497.6,392.4 492.6,392.6 488,393.1 484,393.7 480.9,394.4 478.8,395.3 477.7,396.3 477.8,397.3 479,398.3 481.3,399.3 484.6,400.1 488.8,400.9 493.7,401.4 499,401.8 504.6,402 510.1,401.9 515.3,401.6 520,401.2 524,400.5 527,399.7 529,398.8 529.9,397.8 529.6,396.8" fill="#389ae0"/>
<polygon points="526.3,395 521.8,393.9 516.1,393.1 509.5,392.5 502.5,392.3 495.5,392.4 489.2,392.9 483.9,393.7 480.1,394.7 478,396 477.8,397.3 479.6,398.6 483.2,399.8 488.5,400.8 486.3,399.4 486.5,398.2 488.3,397.2 490.9,396.5 493.6,396.1 495.9,395.7 498,395.4 500.2,395.1 503.1,394.7 507.2,394.4 512.6,394.2 519.2,394.4" fill="url(#mb)"/>
<polygon points="525.7,400.2 528.6,399.2 530.1,398.1 530.1,396.9 528.5,395.8 525.5,394.7 521.3,393.8 516.1,393 510.2,392.5 504,392.3 497.8,392.3 491.9,392.6 486.7,393.2 482.4,393.9 488.4,393.6 494.3,393.5 499.5,393.7 503.9,394 507.6,394.4 510.8,394.8 513.7,395.2 516.6,395.7 519.5,396.2 522.4,397 524.7,397.9 526,399" fill="#1c5882"/>
<polygon points="463.3,594.1 464.8,596.8 468.2,599.4 473.5,601.7 480.2,603.6 488.1,604.9 496.6,605.6 505.2,605.6 513.4,604.9 520.6,603.6 526.4,601.7 530.5,599.4 532.7,596.8 532.9,594.1 531.8,585.1 531.7,587.7 529.6,590.1 525.6,592.3 520,594.1 513,595.3 505.2,595.9 496.9,595.9 488.8,595.3 481.2,594 474.7,592.3 469.6,590.1 466.3,587.6 464.9,585.1" fill="url(#s)"/>
<g fill="#389ae0"><polygon points="370.1,606.6 370.1,598.6 370.5,596.2 372.5,593.9 375.9,591.8 380.5,589.9 386.2,588.5 392.6,587.4 399.6,586.8 406.8,586.7 414,587.1 420.8,587.9 427,589.2 432.3,590.8 436.5,592.8 439.4,595.1 440.8,597.4 440.7,605.3 440.6,607.8 438.9,610.2 435.8,612.5 431.3,614.5 425.5,616.1 418.9,617.3 411.6,617.9 404,618.1 396.5,617.6 389.5,616.7 383.1,615.3 377.8,613.5 373.8,611.4 371.2,609"/><polygon points="373.1,600.4 372.5,409.7 373,408.3 374.9,407 378.1,405.8 382.5,404.8 387.9,403.9 394.1,403.3 400.8,403 407.7,402.9 414.6,403.1 421.1,403.6 427.1,404.3 432.2,405.3 436.2,406.4 439,407.7 440.3,409 437.8,599.3 437.7,601.6 436.1,603.7 433.2,605.8 429.1,607.6 423.8,609 417.8,610.1 411.1,610.7 404.2,610.8 397.3,610.4 390.9,609.6 385.1,608.3 380.2,606.7 376.5,604.8 374.1,602.6"/></g>
<polygon points="372.5,409.3 375.6,412.1 378.7,413.2 381.8,414 384.8,414.5 387.9,415 391,415.4 394.1,415.6 397.2,415.8 400.2,416 398.9,617.9 395.7,617.6 392.5,617.2 389.3,616.7 386.1,616.1 382.9,615.3 379.7,614.3 376.5,612.9 373.3,611 370.1,605.9" fill="url(#ma)"/>
<polygon points="400.2,416 402.3,416 404.3,416.1 406.4,416.1 408.4,416.1 410.5,416.1 412.5,416 414.6,415.9 416.7,415.8 418.7,415.6 418.2,617.3 416,617.5 413.9,617.7 411.8,617.9 409.6,618 407.5,618.1 405.4,618.1 403.2,618 401.1,618 398.9,617.9" fill="url(#la)"/>
<polygon points="372.5,409.3 372.9,410.3 373.3,410.8 373.6,411.1 374,411.3 374.4,411.6 374.8,411.8 375.2,412 375.5,412.1 375.9,412.3 373.6,611.2 373.2,610.9 372.8,610.6 372.4,610.3 372,609.9 371.7,609.5 371.3,609 370.9,608.5 370.5,607.7 370.1,605.9" fill="#1c5882"/>
<polygon points="439,407.7 436.2,406.4 432.2,405.3 427.1,404.3 421.1,403.6 414.6,403.1 407.7,402.9 400.8,403 394.1,403.3 387.9,403.9 382.5,404.8 378.1,405.8 374.9,407 373,408.3 372.5,409.7 373.6,411.1 376.1,412.4 380,413.6 385.1,414.6 391.2,415.3 398,415.9 405.2,416.1 412.4,416 419.4,415.6 425.8,415 431.3,414.1 435.6,413 438.6,411.7 440.2,410.4 440.3,409" fill="#1c5882" stroke="#1c5882" stroke-width="1"/>
<polygon points="436.4,407.8 433.8,406.6 430.2,405.6 425.5,404.7 420,404 414,403.6 407.6,403.4 401.3,403.5 395.1,403.8 389.4,404.3 384.4,405.1 380.3,406.1 377.4,407.2 375.6,408.4 375.3,409.7 376.2,410.9 378.5,412.1 382.1,413.2 386.8,414.1 392.4,414.9 398.7,415.3 405.3,415.5 411.9,415.5 418.3,415.1 424.2,414.5 429.3,413.7 433.3,412.7 436.1,411.5 437.5,410.3 437.6,409" fill="#389ae0"/>
<polygon points="435.5,410.2 434.1,411.4 431.5,412.5 427.7,413.4 423,414.2 417.6,414.7 411.6,415.1 405.3,415.1 399.2,414.9 393.3,414.5 388.1,413.8 383.7,413 380.4,411.9 378.2,410.8 377.3,409.6 377.3,402.3 377.6,401.1 379.3,400 382,399 385.8,398.1 390.5,397.4 395.8,396.9 401.6,396.6 407.6,396.6 413.5,396.7 419.2,397.1 424.3,397.8 428.7,398.5 432.2,399.5 434.5,400.6 435.7,401.7 435.6,409.1" fill="#389ae0"/>
<polygon points="434.5,400.6 432.2,399.5 428.7,398.5 424.3,397.8 419.2,397.1 413.5,396.7 407.6,396.6 401.6,396.6 395.8,396.9 390.5,397.4 385.8,398.1 382,399 379.3,400 377.6,401.1 377.3,402.3 378.2,403.4 380.4,404.5 383.7,405.5 388.1,406.3 393.4,407 399.2,407.4 405.4,407.6 411.6,407.6 417.6,407.2 423.1,406.7 427.8,405.9 431.6,405 434.2,404 435.6,402.9 435.7,401.7" fill="#1c5882" stroke="#1c5882" stroke-width="1"/>
<polygon points="431.9,400.7 429.8,399.7 426.7,398.9 422.7,398.1 418,397.6 412.9,397.2 407.5,397.1 402.1,397.1 396.8,397.4 392,397.8 387.7,398.5 384.3,399.3 381.8,400.2 380.3,401.2 380,402.2 380.8,403.3 382.8,404.3 385.9,405.2 389.9,405.9 394.6,406.5 399.9,406.9 405.5,407.1 411.1,407 416.6,406.7 421.5,406.3 425.8,405.6 429.2,404.7 431.6,403.8 432.9,402.8 433,401.7" fill="#389ae0"/>
<polygon points="430.2,399.9 426.1,398.7 420.6,397.9 414.1,397.3 407,397.1 399.9,397.2 393.3,397.7 387.6,398.5 383.3,399.6 380.7,400.8 380,402.2 381.3,403.6 384.5,404.8 389.5,405.9 387.8,404.4 388.5,403.1 390.8,402.1 393.7,401.4 396.5,400.9 399,400.6 401.3,400.3 403.7,399.9 406.8,399.5 411,399.2 416.6,399 423.3,399.2" fill="url(#mb)"/>
<polygon points="427.6,405.3 431,404.2 433,403.1 433.4,401.8 432.2,400.6 429.6,399.5 425.6,398.6 420.6,397.8 414.9,397.3 408.6,397 402.3,397 396.1,397.4 390.6,397.9 385.9,398.7 392.1,398.3 398,398.2 403.3,398.3 407.9,398.6 411.8,399 415.2,399.4 418.3,399.9 421.2,400.4 424,401.1 426.4,401.9 428.2,402.9 428.7,404" fill="#1c5882"/>
<polygon points="370.1,602.3 371,605.1 374,607.8 378.8,610.2 385.3,612.2 393.1,613.5 401.6,614.3 410.3,614.3 418.8,613.5 426.4,612.2 432.7,610.2 437.4,607.8 440.2,605.1 440.9,602.3 439.6,593.2 438.9,595.8 436.2,598.4 431.7,600.6 425.7,602.5 418.3,603.8 410.2,604.4 401.8,604.4 393.6,603.8 386.2,602.5 379.9,600.6 375.2,598.4 372.4,595.8 371.4,593.2" fill="url(#s)"/>
<g fill="#389ae0"><polygon points="273.4,615.2 273.2,607.1 274.2,604.6 276.7,602.2 280.6,600 285.7,598.1 291.8,596.6 298.5,595.5 305.8,594.9 313.1,594.7 320.3,595.1 327.1,596 333.1,597.3 338.2,599 342,601.1 344.5,603.4 345.5,605.9 345.5,613.9 344.9,616.5 342.7,619 339.1,621.3 334,623.4 327.9,625.1 320.9,626.3 313.3,627 305.6,627.1 298,626.7 291,625.7 284.8,624.2 279.8,622.4 276.1,620.2 274,617.7"/><polygon points="340.3,414.2 342.4,607.8 341.8,610.1 339.8,612.4 336.4,614.5 331.8,616.3 326.2,617.8 319.8,618.9 312.9,619.6 305.8,619.7 298.9,619.3 292.5,618.4 286.8,617.1 282.2,615.4 278.9,613.4 276.9,611.2 276.3,608.9 271,414.9 271.9,413.5 274.4,412.1 278.1,410.9 283,409.8 288.8,409 295.4,408.3 302.3,408 309.4,407.9 316.3,408.1 322.8,408.6 328.6,409.4 333.4,410.3 337.1,411.5 339.4,412.8"/></g>
<polygon points="270.9,415.2 273.8,417.7 276.6,418.7 279.5,419.4 282.3,419.9 285.2,420.4 288,420.7 290.8,421 293.7,421.2 296.5,421.4 300,626.7 297.1,626.4 294.1,626 291.1,625.5 288.2,624.9 285.2,624.1 282.3,623.2 279.3,621.9 276.3,620.2 273.4,615.6" fill="url(#ma)"/>
<polygon points="296.5,421.4 298.4,421.5 300.3,421.5 302.2,421.6 304.1,421.6 306,421.6 307.9,421.6 309.8,421.6 311.7,421.5 313.6,421.4 317.8,626.8 315.8,626.9 313.8,627 311.8,627.1 309.9,627.1 307.9,627.1 305.9,627.1 304,627 302,626.9 300,626.7" fill="url(#la)"/>
<polygon points="270.9,415.2 271.2,415.9 271.4,416.2 271.6,416.5 271.9,416.7 272.1,416.8 272.3,417 272.6,417.1 272.8,417.2 273,417.4 275.6,619.5 275.3,619.3 275.1,619.1 274.8,618.8 274.6,618.5 274.4,618.2 274.1,617.9 273.9,617.5 273.6,616.9 273.4,615.6" fill="#1c5882"/>
<polygon points="339.4,412.8 337.1,411.5 333.4,410.3 328.6,409.4 322.8,408.6 316.3,408.1 309.4,407.9 302.3,408 295.4,408.3 288.8,409 283,409.8 278.1,410.9 274.4,412.1 271.9,413.5 271,414.9 271.5,416.4 273.6,417.7 277.1,419 281.9,420 287.8,420.8 294.5,421.4 301.8,421.6 309.2,421.5 316.5,421.1 323.2,420.5 329.2,419.5 334,418.4 337.6,417.1 339.7,415.7 340.3,414.2" fill="#1c5882" stroke="#1c5882" stroke-width="1"/>
<polygon points="336.7,413 334.6,411.8 331.2,410.7 326.8,409.8 321.4,409.1 315.5,408.6 309.1,408.4 302.6,408.5 296.2,408.8 290.2,409.4 284.8,410.2 280.3,411.2 276.8,412.3 274.6,413.6 273.7,414.9 274.2,416.2 276.2,417.5 279.4,418.6 283.8,419.6 289.2,420.3 295.4,420.8 302.1,421 308.9,421 315.6,420.6 321.8,420 327.3,419.1 331.7,418.1 335,416.9 337,415.6 337.5,414.3" fill="#389ae0"/>
<polygon points="275.8,414.9 275.6,407.4 276.4,406.2 278.5,405 281.7,404 286,403.1 291,402.4 296.6,401.8 302.6,401.5 308.7,401.5 314.7,401.7 320.3,402.1 325.3,402.7 329.5,403.5 332.6,404.5 334.6,405.6 335.4,406.8 335.5,414.3 334.9,415.5 333.1,416.7 330,417.8 325.8,418.8 320.7,419.6 314.9,420.2 308.7,420.5 302.3,420.6 296.1,420.4 290.3,419.9 285.3,419.2 281.1,418.3 278.1,417.3 276.3,416.1" fill="#389ae0"/>
<polygon points="334.6,405.6 332.6,404.5 329.5,403.5 325.3,402.7 320.3,402.1 314.7,401.7 308.7,401.5 302.6,401.5 296.6,401.8 291,402.4 286,403.1 281.7,404 278.5,405 276.4,406.2 275.6,407.4 276.1,408.6 277.9,409.7 280.9,410.7 285.1,411.6 290.2,412.3 296,412.7 302.2,412.9 308.6,412.9 314.8,412.6 320.6,412 325.7,411.2 329.9,410.3 333,409.2 334.8,408 335.4,406.8" fill="#1c5882" stroke="#1c5882" stroke-width="1"/>
<polygon points="331.9,405.8 330.1,404.7 327.3,403.9 323.5,403.1 319,402.5 313.9,402.1 308.4,402 302.9,402 297.4,402.3 292.3,402.8 287.7,403.5 283.9,404.3 281,405.2 279.1,406.3 278.4,407.4 278.9,408.4 280.5,409.5 283.3,410.4 287,411.2 291.6,411.8 296.9,412.2 302.5,412.4 308.3,412.3 313.9,412 319.2,411.5 323.8,410.8 327.6,410 330.4,409 332.1,407.9 332.6,406.8" fill="#389ae0"/>
<polygon points="330.5,404.9 326.8,403.7 321.5,402.8 315.1,402.2 307.9,402 300.7,402.1 293.7,402.6 287.6,403.5 282.8,404.6 279.6,405.9 278.4,407.3 279.2,408.7 282,410 286.7,411.1 285.5,409.6 286.7,408.3 289.4,407.2 292.7,406.5 295.8,406 298.4,405.7 300.8,405.3 303.4,404.9 306.7,404.5 311.2,404.2 317,404 323.7,404.2" fill="url(#mb)"/>
<polygon points="325.8,410.5 329.6,409.4 332.1,408.2 333,407 332.2,405.7 330,404.5 326.3,403.5 321.5,402.7 315.9,402.2 309.6,401.9 303.1,402 296.7,402.3 290.9,402.9 285.8,403.7 292,403.2 298.1,403 303.6,403.1 308.5,403.4 312.6,403.7 316.2,404.2 319.4,404.7 322.3,405.3 324.8,406.1 326.8,407 327.9,408 327.7,409.2" fill="#1c5882"/>
<polygon points="273.4,610.8 273.8,613.8 276.2,616.5 280.7,619 286.9,621.1 294.5,622.5 303,623.2 311.9,623.2 320.7,622.5 328.7,621.1 335.6,619.1 340.8,616.6 344.2,613.8 345.5,610.8 344,601.6 342.7,604.3 339.5,607 334.4,609.3 327.8,611.2 320,612.5 311.6,613.2 303,613.2 294.9,612.5 287.6,611.2 281.6,609.3 277.3,606.9 274.9,604.3 274.6,601.5" fill="url(#s)"/>
<g fill="#389ae0"><polygon points="661.2,623.6 659.1,625.9 655.4,628 650.3,629.7 644,631 636.8,631.7 629.1,631.8 621.2,631.4 613.5,630.4 606.3,628.9 600,627 594.8,624.8 591,622.3 588.7,619.7 588,617.1 588.4,609 589.3,606.5 591.8,604.3 595.6,602.4 600.7,600.8 606.8,599.7 613.7,599.1 621,599 628.6,599.3 636,600.2 643,601.6 649.2,603.3 654.5,605.4 658.6,607.8 661.2,610.3 662.3,612.9 661.8,621"/><polygon points="591.5,611 601.7,416.2 602.5,414.8 604.8,413.6 608.5,412.5 613.3,411.6 619.1,411 625.7,410.6 632.8,410.5 640,410.7 647.2,411.2 653.9,412 660,413 665.1,414.2 669,415.5 671.6,417 672.7,418.4 659,614.6 658.5,616.9 656.5,619 653.1,620.9 648.5,622.5 642.7,623.6 636.2,624.2 629.1,624.4 621.9,624 614.8,623.1 608.2,621.7 602.5,620 597.7,618 594.2,615.7 592.1,613.4"/></g>
<polygon points="601.7,416.1 605.6,419.9 609.4,421.3 613.2,422.3 617.1,423 620.9,423.6 624.7,424 628.6,424.2 632.4,424.4 636.3,424.5 623.9,631.8 619.9,631.7 615.9,631.4 611.9,630.9 607.9,630.2 603.9,629.2 600,627.9 596,626.2 592,623.6 588,616.9" fill="url(#ma)"/>
<polygon points="636.3,424.5 638.8,424.5 641.4,424.4 643.9,424.3 646.5,424.2 649,424 651.6,423.8 654.2,423.5 656.7,423.1 659.3,422.7 647.8,628.6 645.1,629.4 642.5,630 639.8,630.6 637.1,631 634.5,631.3 631.8,631.6 629.2,631.7 626.5,631.8 623.9,631.8" fill="url(#la)"/>
<polygon points="601.7,416.1 602.4,417.8 603.2,418.5 603.9,419 604.6,419.4 605.3,419.8 606,420.1 606.7,420.4 607.4,420.7 608.1,420.9 594.7,625.4 593.9,625 593.2,624.5 592.4,624 591.7,623.4 591,622.7 590.2,622 589.5,621.1 588.8,619.8 588,616.9" fill="#1c5882"/>
<polygon points="669,415.5 665.1,414.2 660,413 653.9,412 647.2,411.2 640,410.7 632.8,410.5 625.7,410.6 619.1,411 613.3,411.6 608.5,412.5 604.8,413.6 602.5,414.8 601.7,416.2 602.5,417.7 604.7,419.1 608.5,420.5 613.5,421.8 619.6,422.9 626.6,423.7 634,424.2 641.6,424.5 649,424.4 655.9,424 661.9,423.3 666.8,422.4 670.3,421.2 672.3,419.9 672.7,418.4 671.6,417" fill="#1c5882" stroke="#1c5882" stroke-width="1"/>
<polygon points="666.5,415.7 662.9,414.4 658.2,413.3 652.6,412.4 646.4,411.7 639.8,411.3 633.1,411.1 626.6,411.1 620.5,411.5 615.2,412 610.7,412.9 607.3,413.9 605.3,415 604.5,416.3 605.2,417.7 607.3,419 610.8,420.3 615.4,421.4 621,422.4 627.4,423.2 634.3,423.7 641.2,423.9 648.1,423.8 654.4,423.5 659.9,422.8 664.4,422 667.6,420.9 669.5,419.7 669.9,418.3 668.9,417" fill="#389ae0"/>
<polygon points="668.3,410.7 667.7,418.3 667.3,419.5 665.6,420.6 662.5,421.6 658.4,422.5 653.2,423.1 647.3,423.4 641,423.5 634.4,423.3 628.1,422.8 622.1,422.1 616.8,421.2 612.5,420.1 609.3,418.9 607.3,417.6 606.7,416.4 607.1,408.8 607.7,407.7 609.7,406.6 612.8,405.7 617,404.9 622,404.4 627.7,404.1 633.8,404 640.1,404.2 646.3,404.6 652.1,405.3 657.3,406.1 661.7,407.1 665.1,408.3 667.3,409.5" fill="#389ae0"/>
<polygon points="665.1,408.3 661.7,407.1 657.3,406.1 652.1,405.3 646.3,404.6 640.1,404.2 633.8,404 627.7,404.1 622,404.4 617,404.9 612.8,405.7 609.7,406.6 607.7,407.7 607.1,408.8 607.7,410.1 609.7,411.3 612.9,412.4 617.3,413.5 622.5,414.4 628.5,415.1 634.9,415.5 641.5,415.7 647.8,415.7 653.7,415.3 658.9,414.8 663.1,414 666.1,413 667.8,411.9 668.3,410.7 667.3,409.5" fill="#1c5882" stroke="#1c5882" stroke-width="1"/>
<polygon points="662.6,408.4 659.5,407.4 655.5,406.5 650.8,405.7 645.5,405.1 639.9,404.7 634.2,404.6 628.6,404.6 623.5,404.9 618.9,405.4 615.1,406.1 612.2,406.9 610.5,407.9 609.9,408.9 610.5,410 612.3,411.1 615.2,412.2 619.2,413.1 624,414 629.4,414.6 635.2,415 641.1,415.2 646.8,415.1 652.2,414.8 656.9,414.3 660.7,413.6 663.4,412.7 665,411.7 665.4,410.6 664.6,409.5" fill="#389ae0"/>
<polygon points="660.1,407.5 654.8,406.3 648.4,405.4 641.1,404.8 633.7,404.6 626.5,404.7 620.1,405.2 615,406.1 611.5,407.2 609.9,408.6 610.5,410 613,411.5 617.5,412.8 623.5,413.9 620.5,412.3 620,411 621.5,409.9 623.8,409.2 626.4,408.7 628.6,408.3 630.6,408 632.8,407.6 635.6,407.2 639.7,406.8 645.3,406.6 652.3,406.8" fill="url(#mb)"/>
<polygon points="662.3,413.3 664.8,412.2 665.8,410.9 665.1,409.6 662.8,408.3 659.1,407.2 654.2,406.1 648.3,405.3 641.9,404.8 635.3,404.5 628.8,404.5 622.7,404.9 617.5,405.5 613.5,406.3 619.9,406 626.1,406 631.6,406.2 636.2,406.6 639.9,407 643.1,407.5 646.1,407.9 649.3,408.4 652.6,408.9 656.1,409.7 659.3,410.7 661.6,411.9" fill="#1c5882"/>
<polygon points="588.6,615.3 590.9,618.3 595.3,621.1 601.4,623.7 609,625.7 617.7,627.2 626.8,627.9 635.8,627.9 644.1,627.2 651.3,625.7 656.9,623.7 660.5,621.1 662,618.3 661.4,615.3 660.6,605.9 661.2,608.8 659.7,611.4 656.2,613.8 650.9,615.8 644,617.1 635.9,617.8 627.3,617.8 618.5,617.1 610.2,615.8 602.9,613.8 597,611.4 592.8,608.7 590.5,605.9" fill="url(#s)"/>
<g fill="#389ae0"><polygon points="244.1,609.7 246.1,612.1 246.6,614.6 246.8,622.8 245.7,625.5 242.9,628.1 238.7,630.5 233.1,632.6 226.5,634.4 219.1,635.6 211.2,636.3 203.3,636.5 195.7,636 188.8,635 182.8,633.5 178.1,631.6 174.8,629.3 173.1,626.7 172.7,618.5 172.6,615.9 174.2,613.3 177.3,610.8 181.7,608.5 187.3,606.6 193.9,605 201,603.9 208.5,603.2 216,603.1 223.3,603.5 230,604.4 235.8,605.7 240.6,607.5"/><polygon points="236.4,419.7 243.5,616.6 242.4,619 239.8,621.3 236,623.5 230.9,625.5 224.8,627 218,628.2 210.8,628.8 203.6,628.9 196.7,628.5 190.3,627.6 184.8,626.3 180.5,624.5 177.5,622.4 176,620.2 165.4,421.9 165.4,420.4 166.9,418.9 169.9,417.5 174.2,416.2 179.6,415.1 185.9,414.2 192.8,413.5 200,413.2 207.3,413.1 214.2,413.3 220.6,413.8 226.3,414.6 230.8,415.6 234.1,416.8 236,418.2"/></g>
<polygon points="165.2,421.3 169.2,424 173.1,425.1 177.1,425.8 181,426.3 185,426.7 188.9,427 192.9,427.2 196.8,427.3 200.8,427.3 209.9,636.5 205.8,636.4 201.7,636.2 197.6,635.9 193.5,635.4 189.4,634.7 185.2,633.7 181.1,632.5 177,630.6 172.9,625.7" fill="url(#na)"/>
<polygon points="236,418.2 234.1,416.8 230.8,415.6 226.3,414.6 220.6,413.8 214.2,413.3 207.3,413.1 200,413.2 192.8,413.5 185.9,414.2 179.6,415.1 174.2,416.2 169.9,417.5 166.9,418.9 165.4,420.4 165.4,421.9 167,423.3 170.1,424.6 174.6,425.7 180.3,426.5 186.9,427.1 194.2,427.3 201.9,427.2 209.4,426.8 216.6,426.1 223,425.2 228.3,424 232.5,422.6 235.2,421.2 236.4,419.7" fill="#1c5882" stroke="#1c5882" stroke-width="1"/>
<polygon points="233.2,418.4 231.5,417.1 228.5,416 224.3,415 219.1,414.3 213.2,413.8 206.8,413.6 200.1,413.7 193.4,414 187.1,414.6 181.3,415.5 176.3,416.5 172.4,417.7 169.6,419 168.2,420.4 168.2,421.7 169.7,423 172.6,424.2 176.7,425.2 182,426 188.1,426.5 194.8,426.7 201.8,426.7 208.7,426.3 215.3,425.6 221.2,424.8 226.1,423.7 229.9,422.4 232.4,421.1 233.5,419.7" fill="#389ae0"/>
<polygon points="171.8,422.8 170.4,421.6 170,413.9 170,412.7 171.3,411.5 173.8,410.3 177.5,409.2 182.2,408.2 187.6,407.5 193.6,406.9 199.8,406.6 206.1,406.6 212.1,406.8 217.6,407.2 222.5,407.8 226.4,408.7 229.2,409.7 230.8,410.9 231.1,412.1 231.4,419.7 230.4,421 228,422.3 224.5,423.4 219.8,424.4 214.3,425.3 208.2,425.9 201.7,426.2 195.2,426.3 188.9,426.1 183.2,425.6 178.3,424.9 174.4,423.9" fill="#389ae0"/>
<polygon points="230.8,410.9 229.2,409.7 226.4,408.7 222.5,407.8 217.6,407.2 212.1,406.8 206.1,406.6 199.8,406.6 193.6,406.9 187.6,407.5 182.2,408.2 177.5,409.2 173.8,410.3 171.3,411.5 170,412.7 170,413.9 171.4,415.1 174,416.2 177.9,417.1 182.8,417.8 188.6,418.3 194.8,418.5 201.4,418.4 207.9,418.1 214,417.5 219.5,416.7 224.2,415.7 227.7,414.6 230.1,413.3 231.1,412.1" fill="#1c5882" stroke="#1c5882" stroke-width="1"/>
<polygon points="228,411 226.6,410 224,409 220.5,408.3 216.1,407.7 211,407.3 205.6,407.1 199.9,407.2 194.2,407.4 188.8,407.9 183.9,408.6 179.6,409.5 176.3,410.5 174,411.5 172.8,412.7 172.8,413.8 174.1,414.9 176.5,415.8 180.1,416.7 184.5,417.3 189.7,417.7 195.4,417.9 201.3,417.9 207.2,417.6 212.7,417 217.7,416.3 222,415.4 225.2,414.4 227.3,413.3 228.3,412.1" fill="#389ae0"/>
<polygon points="226.9,410.1 223.6,408.9 218.5,408 212.2,407.3 205.1,407.1 197.6,407.2 190.3,407.8 183.7,408.6 178.4,409.8 174.6,411.2 172.8,412.6 173.1,414.1 175.4,415.5 179.7,416.6 179.1,415 180.9,413.6 184.1,412.5 187.7,411.8 191,411.3 193.9,410.9 196.5,410.6 199.3,410.2 202.8,409.7 207.5,409.4 213.5,409.2 220.2,409.4" fill="url(#mb)"/>
<polygon points="219.8,416 224.2,414.8 227.2,413.6 228.6,412.3 228.3,411 226.5,409.8 223.2,408.7 218.6,407.9 213,407.3 206.8,407 200.1,407.1 193.5,407.4 187.3,408 181.8,408.9 188.2,408.3 194.5,408.1 200.2,408.1 205.3,408.3 209.7,408.7 213.5,409.2 216.8,409.8 219.5,410.5 221.8,411.3 223.2,412.3 223.6,413.4 222.6,414.7" fill="#1c5882"/>
<polygon points="173.1,619.7 172.9,622.7 174.8,625.6 178.8,628.2 184.6,630.3 192.1,631.8 200.6,632.6 209.7,632.6 218.8,631.8 227.3,630.3 234.7,628.2 240.6,625.6 244.6,622.7 246.6,619.7 244.8,610.3 242.9,613.1 239,615.9 233.3,618.3 226.2,620.3 218,621.7 209.3,622.4 200.5,622.4 192.3,621.7 185.2,620.3 179.5,618.3 175.7,615.8 173.8,613.1 174.1,610.2" fill="url(#s)"/>
<g fill="#389ae0"><polygon points="567.9,621.9 567.5,630.2 566.5,632.8 563.8,635.3 559.6,637.5 554.1,639.2 547.5,640.5 540,641.3 532.1,641.4 524.1,641 516.5,639.9 509.4,638.4 503.4,636.4 498.5,634.1 495.2,631.5 493.4,628.8 493.2,626.1 493.4,617.9 494.8,615.3 497.8,613 502.1,611 507.6,609.4 514.1,608.2 521.2,607.6 528.7,607.4 536.3,607.8 543.7,608.8 550.5,610.2 556.5,612 561.5,614.2 565.1,616.6 567.3,619.2"/><polygon points="573.8,424 564.6,623.6 563.7,626 561.2,628.3 557.4,630.2 552.3,631.8 546.2,633 539.4,633.6 532.2,633.8 524.9,633.4 517.9,632.4 511.4,631.1 505.9,629.3 501.5,627.1 498.4,624.8 496.7,622.4 496.5,619.9 502.2,421.8 503.5,420.3 506.3,419 510.4,417.8 515.7,416.9 521.9,416.3 528.7,415.9 535.9,415.8 543.2,416 550.3,416.6 556.9,417.4 562.7,418.4 567.5,419.6 571.1,421 573.2,422.5"/></g>
<polygon points="502.1,422.3 505.6,425.8 509.2,427.1 512.8,428 516.3,428.7 519.9,429.2 523.4,429.7 527,430 530.6,430.2 534.1,430.3 526.3,641.3 522.6,641.1 519,640.7 515.3,640.2 511.6,639.5 507.9,638.5 504.2,637.3 500.5,635.6 496.8,633.2 493.1,627" fill="url(#ma)"/>
<polygon points="534.1,430.3 536.5,430.3 538.9,430.3 541.3,430.3 543.6,430.2 546,430.1 548.4,430 550.8,429.8 553.1,429.6 555.5,429.3 548.5,639.6 546.1,640.1 543.6,640.5 541.1,640.8 538.7,641.1 536.2,641.2 533.7,641.4 531.3,641.4 528.8,641.4 526.3,641.3" fill="url(#la)"/>
<polygon points="502.1,422.3 502.6,423.7 503.2,424.3 503.7,424.7 504.3,425.1 504.9,425.4 505.4,425.7 506,425.9 506.5,426.2 507.1,426.4 498.3,634.3 497.7,634 497.1,633.5 496.5,633.1 496,632.6 495.4,632 494.8,631.3 494.2,630.5 493.6,629.5 493.1,627" fill="#1c5882"/>
<polygon points="571.1,421 567.5,419.6 562.7,418.4 556.9,417.4 550.3,416.6 543.2,416 535.9,415.8 528.7,415.9 521.9,416.3 515.7,416.9 510.4,417.8 506.3,419 503.5,420.3 502.2,421.8 502.4,423.3 504.2,424.8 507.5,426.2 512.2,427.5 518,428.6 524.8,429.5 532.2,430.1 539.9,430.3 547.5,430.3 554.6,429.8 561,429.1 566.3,428.1 570.3,426.9 572.8,425.5 573.8,424 573.2,422.5" fill="#1c5882" stroke="#1c5882" stroke-width="1"/>
<polygon points="568.4,421.2 565.2,419.9 560.8,418.7 555.4,417.8 549.3,417.1 542.8,416.6 536.1,416.4 529.4,416.4 523.1,416.8 517.4,417.4 512.6,418.2 508.8,419.3 506.2,420.5 505,421.8 505.2,423.2 506.9,424.6 509.9,426 514.2,427.2 519.6,428.2 525.9,429 532.7,429.5 539.7,429.7 546.7,429.7 553.3,429.3 559.1,428.6 564,427.7 567.7,426.6 570,425.3 570.9,423.9 570.4,422.5" fill="#389ae0"/>
<polygon points="569.1,416.1 568.8,423.9 567.9,425.2 565.7,426.3 562.2,427.4 557.7,428.2 552.2,428.8 546.1,429.2 539.6,429.3 533,429.1 526.7,428.6 520.8,427.8 515.8,426.9 511.8,425.7 508.9,424.5 507.4,423.2 507.2,421.9 507.4,414.2 508.5,413 510.9,411.9 514.4,410.9 519,410.2 524.3,409.6 530.2,409.3 536.5,409.2 542.8,409.4 548.9,409.9 554.6,410.5 559.6,411.4 563.7,412.5 566.8,413.6 568.6,414.9" fill="#389ae0"/>
<polygon points="566.8,413.6 563.7,412.5 559.6,411.4 554.6,410.5 548.9,409.9 542.8,409.4 536.5,409.2 530.2,409.3 524.3,409.6 519,410.2 514.4,410.9 510.9,411.9 508.5,413 507.4,414.2 507.6,415.5 509.2,416.8 512,418 516,419.1 521.1,420 526.9,420.7 533.3,421.2 539.9,421.4 546.4,421.3 552.5,421 558,420.4 562.6,419.6 566,418.5 568.2,417.4 569.1,416.1 568.6,414.9" fill="#1c5882" stroke="#1c5882" stroke-width="1"/>
<polygon points="564.1,413.8 561.4,412.7 557.7,411.8 553.1,411 547.9,410.3 542.4,409.9 536.6,409.8 530.9,409.8 525.6,410.1 520.7,410.6 516.6,411.3 513.4,412.2 511.2,413.2 510.2,414.3 510.4,415.5 511.9,416.6 514.5,417.7 518.1,418.7 522.7,419.5 528,420.2 533.8,420.6 539.7,420.8 545.6,420.8 551.2,420.4 556.1,419.9 560.3,419.2 563.4,418.2 565.4,417.2 566.2,416.1 565.8,414.9" fill="#389ae0"/>
<polygon points="561.9,412.9 557,411.6 550.8,410.7 543.6,410 536.1,409.8 528.7,409.9 522,410.5 516.5,411.4 512.5,412.5 510.4,413.9 510.4,415.4 512.5,416.9 516.5,418.3 522.3,419.5 519.7,417.9 519.8,416.4 521.7,415.3 524.4,414.6 527.1,414 529.6,413.7 531.7,413.3 534.1,412.9 537.1,412.5 541.4,412.1 547.2,411.9 554.3,412.1" fill="url(#mb)"/>
<polygon points="562,418.8 565.1,417.7 566.5,416.4 566.3,415 564.4,413.7 561.1,412.5 556.4,411.4 550.8,410.6 544.4,410 537.8,409.7 531.1,409.8 524.8,410.1 519.3,410.7 514.8,411.6 521.3,411.2 527.5,411.1 533.1,411.3 537.9,411.7 541.9,412.1 545.3,412.6 548.5,413.1 551.7,413.6 554.9,414.2 558,415.1 560.7,416.1 562.2,417.4" fill="#1c5882"/>
<polygon points="493.3,624.3 495,627.4 498.9,630.4 504.7,633 512,635.1 520.5,636.7 529.6,637.4 538.8,637.4 547.5,636.7 555.1,635.2 561.2,633 565.4,630.4 567.5,627.4 567.4,624.3 566.4,614.8 566.4,617.7 564.4,620.5 560.3,623 554.5,625 547.2,626.4 538.9,627.2 530,627.2 521.3,626.4 513.1,625 506,623 500.5,620.5 496.7,617.7 495,614.8" fill="url(#s)"/>
<g fill="#389ae0"><polygon points="469.9,631.3 469.7,639.7 468.1,642.4 464.9,645 460.2,647.3 454.2,649.1 447.1,650.4 439.4,651.2 431.3,651.4 423.2,650.9 415.6,649.8 408.8,648.2 403,646.1 398.6,643.7 395.7,641 394.4,638.2 394.4,629.8 394.8,627.1 396.7,624.4 400.2,622 405,619.9 411,618.3 417.8,617.1 425.2,616.4 432.9,616.3 440.5,616.7 447.9,617.6 454.5,619.1 460.3,621 464.9,623.2 468.1,625.8 469.8,628.5"/><polygon points="470.9,429.9 466.6,633 465.1,635.5 462.2,637.8 457.8,639.9 452.3,641.5 445.9,642.7 438.8,643.4 431.4,643.6 424.1,643.1 417.1,642.2 410.8,640.7 405.6,638.9 401.5,636.7 398.8,634.3 397.6,631.7 398.3,429.1 398.6,427.5 400.5,426 403.8,424.6 408.5,423.4 414.2,422.5 420.7,421.8 427.8,421.4 435.2,421.3 442.6,421.6 449.6,422.1 456.1,422.9 461.6,424 466.1,425.3 469.2,426.7 470.8,428.3"/></g>
<polygon points="398.2,428.7 401.5,431.9 404.8,433.1 408.1,434 411.4,434.7 414.7,435.2 418,435.6 421.3,435.9 424.6,436.1 427.9,436.3 425.1,651.1 421.7,650.8 418.3,650.4 414.9,649.9 411.4,649.1 408,648.2 404.6,647 401.2,645.5 397.7,643.3 394.3,637.5" fill="url(#ma)"/>
<polygon points="427.9,436.3 430.1,436.4 432.3,436.4 434.5,436.4 436.7,436.4 438.9,436.4 441.1,436.3 443.3,436.2 445.5,436.1 447.7,435.9 445.7,650.4 443.4,650.7 441.1,651 438.8,651.2 436.6,651.3 434.3,651.4 432,651.4 429.7,651.3 427.4,651.3 425.1,651.1" fill="url(#la)"/>
<polygon points="398.2,428.7 398.6,429.8 399,430.3 399.4,430.7 399.8,431 400.2,431.2 400.6,431.5 401,431.7 401.5,431.9 401.9,432.1 398.1,643.6 397.7,643.2 397.2,642.9 396.8,642.5 396.4,642.1 396,641.6 395.6,641.1 395.1,640.4 394.7,639.6 394.3,637.5" fill="#1c5882"/>
<polygon points="469.2,426.7 466.1,425.3 461.6,424 456.1,422.9 449.6,422.1 442.6,421.6 435.2,421.3 427.8,421.4 420.7,421.8 414.2,422.5 408.5,423.4 403.8,424.6 400.5,426 398.6,427.5 398.3,429.1 399.5,430.6 402.4,432.1 406.7,433.5 412.2,434.7 418.8,435.6 426.2,436.2 433.9,436.4 441.7,436.3 449.1,435.9 455.9,435.2 461.7,434.1 466.2,432.9 469.3,431.4 470.9,429.9 470.8,428.3" fill="#1c5882" stroke="#1c5882" stroke-width="1"/>
<polygon points="466.4,426.9 463.6,425.6 459.5,424.4 454.4,423.4 448.5,422.6 442,422.1 435.2,421.9 428.4,422 421.8,422.3 415.8,422.9 410.5,423.8 406.3,424.9 403.2,426.2 401.5,427.6 401.2,429 402.4,430.5 405,431.9 408.9,433.1 414,434.2 420.1,435 426.9,435.6 434,435.8 441.1,435.7 448,435.3 454.2,434.6 459.5,433.7 463.7,432.5 466.5,431.2 468,429.8 467.9,428.3" fill="#389ae0"/>
<polygon points="403.4,429 403.4,421.1 403.7,419.8 405.3,418.6 408.1,417.4 412.1,416.4 417,415.6 422.7,415 428.8,414.7 435.2,414.6 441.6,414.8 447.7,415.3 453.2,416 458,416.9 461.8,418 464.5,419.2 465.9,420.5 465.9,421.8 465.8,429.7 464.4,431 461.7,432.3 457.8,433.3 452.9,434.2 447.1,434.9 440.7,435.2 434,435.3 427.4,435.1 421.1,434.6 415.4,433.8 410.6,432.8 406.9,431.6 404.5,430.4" fill="#389ae0"/>
<polygon points="464.5,419.2 461.8,418 458,416.9 453.2,416 447.7,415.3 441.6,414.8 435.2,414.6 428.8,414.7 422.7,415 417,415.6 412.1,416.4 408.1,417.4 405.3,418.6 403.7,419.8 403.4,421.1 404.5,422.5 407,423.7 410.7,424.9 415.5,425.8 421.1,426.6 427.5,427.1 434.1,427.3 440.8,427.2 447.2,426.9 453,426.2 458,425.4 461.9,424.3 464.6,423.1 465.9,421.8 465.9,420.5" fill="#1c5882" stroke="#1c5882" stroke-width="1"/>
<polygon points="461.8,419.3 459.4,418.2 455.9,417.3 451.6,416.4 446.5,415.8 441,415.4 435.2,415.2 429.4,415.3 423.8,415.5 418.6,416.1 414.2,416.8 410.6,417.7 408,418.8 406.5,419.9 406.3,421.1 407.3,422.3 409.6,423.5 412.9,424.5 417.3,425.4 422.4,426 428.1,426.5 434.2,426.7 440.2,426.6 446,426.3 451.3,425.7 455.8,425 459.3,424 461.8,422.9 463,421.7 463,420.5" fill="#389ae0"/>
<polygon points="459.8,418.4 455.3,417.1 449.3,416.1 442.2,415.4 434.7,415.2 427.1,415.3 420,415.9 414,416.8 409.5,418.1 406.9,419.5 406.3,421.1 407.8,422.6 411.5,424.1 416.9,425.3 414.9,423.6 415.5,422.1 417.8,421 420.9,420.2 423.9,419.6 426.5,419.2 428.9,418.9 431.4,418.5 434.7,418 439.2,417.6 445.2,417.4 452.3,417.7" fill="url(#mb)"/>
<polygon points="457.7,424.6 461.2,423.4 463.2,422.1 463.4,420.7 462,419.3 459.1,418 454.8,416.9 449.3,416 443.1,415.4 436.4,415.1 429.6,415.2 423.1,415.5 417.2,416.2 412.3,417.1 418.8,416.6 425.1,416.5 430.9,416.6 435.8,416.9 440,417.4 443.7,417.9 447,418.4 450.2,419 453.3,419.8 456,420.7 458,421.8 458.7,423.2" fill="#1c5882"/>
<polygon points="394.3,633.7 395.5,636.9 398.8,640 404.1,642.7 411.2,644.9 419.5,646.5 428.7,647.3 438,647.3 447,646.5 455.1,644.9 461.7,642.7 466.6,640 469.3,636.9 469.9,633.7 468.6,624 468,627.1 465.4,629.9 460.7,632.5 454.3,634.6 446.6,636.1 437.9,636.9 428.9,636.9 420.1,636.1 412.1,634.6 405.3,632.5 400.2,629.9 397,627 395.9,624" fill="url(#s)"/>
<g fill="#389ae0"><polygon points="291.5,648.1 291.3,639.5 292.3,636.7 294.8,633.9 298.9,631.4 304.3,629.2 310.7,627.5 317.9,626.3 325.6,625.6 333.4,625.4 341.1,625.8 348.4,626.8 354.9,628.3 360.4,630.3 364.6,632.6 367.3,635.3 368.5,638.1 368.5,646.6 368,649.5 365.8,652.4 362,655.1 356.7,657.4 350.2,659.4 342.7,660.8 334.7,661.5 326.4,661.7 318.3,661.2 310.7,660.1 304.1,658.4 298.6,656.3 294.6,653.8 292.2,651"/><polygon points="364.2,434.3 365.2,640.1 364.7,642.8 362.7,645.4 359.2,647.8 354.3,649.9 348.4,651.6 341.6,652.9 334.2,653.6 326.6,653.8 319.2,653.3 312.3,652.3 306.2,650.8 301.2,648.9 297.5,646.6 295.3,644.1 294.6,641.4 289.9,435.1 290.8,433.5 293.3,431.9 297.2,430.5 302.4,429.2 308.6,428.2 315.5,427.5 322.9,427.1 330.5,427 337.9,427.3 344.9,427.8 351.1,428.7 356.4,429.8 360.4,431.2 363.1,432.7"/></g>
<polygon points="289.9,435.4 292.9,438.3 296,439.4 299,440.2 302.1,440.9 305.1,441.4 308.1,441.8 311.2,442.1 314.2,442.3 317.3,442.5 319.9,661.3 316.8,660.9 313.6,660.5 310.5,659.9 307.3,659.2 304.1,658.3 301,657.2 297.8,655.8 294.7,653.8 291.5,648.5" fill="url(#ma)"/>
<polygon points="317.3,442.5 319.3,442.6 321.4,442.7 323.4,442.8 325.4,442.8 327.4,442.8 329.5,442.8 331.5,442.7 333.5,442.7 335.6,442.6 338.9,661.4 336.8,661.5 334.7,661.6 332.6,661.7 330.5,661.7 328.4,661.7 326.2,661.7 324.1,661.6 322,661.4 319.9,661.3" fill="url(#la)"/>
<polygon points="289.9,435.4 290.1,436.2 290.4,436.6 290.6,436.9 290.9,437.1 291.1,437.3 291.3,437.5 291.6,437.6 291.8,437.8 292.1,437.9 293.8,653 293.5,652.8 293.3,652.5 293,652.2 292.8,651.9 292.5,651.6 292.3,651.2 292,650.7 291.8,650.1 291.5,648.5" fill="#1c5882"/>
<polygon points="363.1,432.7 360.4,431.2 356.4,429.8 351.1,428.7 344.9,427.8 337.9,427.3 330.5,427 322.9,427.1 315.5,427.5 308.6,428.2 302.4,429.2 297.2,430.5 293.3,431.9 290.8,433.5 289.9,435.1 290.6,436.7 292.9,438.3 296.7,439.7 302,440.9 308.4,441.9 315.7,442.5 323.5,442.8 331.4,442.7 339.2,442.2 346.4,441.5 352.7,440.4 357.8,439.1 361.5,437.6 363.6,435.9 364.2,434.3" fill="#1c5882" stroke="#1c5882" stroke-width="1"/>
<polygon points="360.2,432.8 357.8,431.4 354.1,430.2 349.3,429.2 343.5,428.4 337.1,427.9 330.2,427.6 323.2,427.7 316.4,428.1 310,428.7 304.3,429.7 299.6,430.8 296,432.1 293.7,433.6 292.8,435.1 293.5,436.6 295.6,438 299.2,439.3 304,440.4 309.9,441.3 316.6,441.9 323.8,442.1 331.1,442 338.2,441.6 344.8,440.9 350.6,439.9 355.3,438.7 358.7,437.3 360.7,435.8 361.2,434.3" fill="#389ae0"/>
<polygon points="295.1,435 294.9,427 295.7,425.7 297.8,424.3 301.2,423.1 305.6,422.1 311,421.3 317,420.7 323.4,420.3 329.9,420.2 336.3,420.5 342.4,420.9 347.8,421.7 352.3,422.6 355.8,423.7 358,425 358.9,426.4 359,434.3 358.5,435.8 356.6,437.1 353.4,438.4 349,439.6 343.6,440.5 337.5,441.2 330.8,441.5 324,441.6 317.3,441.4 311,440.9 305.5,440.1 301,439 297.7,437.8 295.7,436.5" fill="#389ae0"/>
<polygon points="358,425 355.8,423.7 352.3,422.6 347.8,421.7 342.4,420.9 336.3,420.5 329.9,420.2 323.4,420.3 317,420.7 311,421.3 305.6,422.1 301.2,423.1 297.8,424.3 295.7,425.7 294.9,427 295.5,428.4 297.5,429.7 300.9,430.9 305.4,431.9 310.9,432.7 317.1,433.2 323.9,433.4 330.7,433.4 337.4,433 343.6,432.3 349,431.4 353.4,430.3 356.6,429.1 358.4,427.7 358.9,426.4" fill="#1c5882" stroke="#1c5882" stroke-width="1"/>
<polygon points="355.2,425.2 353.1,424 350,423 345.9,422.1 341,421.5 335.5,421 329.6,420.8 323.7,420.9 317.9,421.2 312.4,421.7 307.6,422.5 303.5,423.5 300.5,424.6 298.6,425.8 297.9,427 298.4,428.2 300.3,429.4 303.3,430.5 307.4,431.4 312.4,432.1 318.1,432.6 324.1,432.8 330.3,432.7 336.4,432.4 342,431.8 346.9,431 350.9,430 353.8,428.9 355.5,427.6 356,426.4" fill="#389ae0"/>
<polygon points="353.5,424.2 349.4,422.8 343.7,421.8 336.7,421.1 329.1,420.8 321.3,421 313.9,421.6 307.4,422.5 302.4,423.8 299.1,425.3 297.9,427 298.8,428.6 302,430.1 307,431.4 305.7,429.6 306.9,428.1 309.7,426.9 313.1,426 316.4,425.5 319.2,425 321.8,424.7 324.5,424.2 328,423.8 332.8,423.3 339,423.2 346.2,423.4" fill="url(#mb)"/>
<polygon points="349,430.7 353,429.4 355.5,428 356.4,426.5 355.5,425.1 352.9,423.8 349,422.6 343.7,421.7 337.6,421.1 330.9,420.8 323.9,420.8 317.1,421.2 310.9,421.9 305.5,422.8 312.2,422.3 318.7,422 324.6,422.1 329.8,422.4 334.3,422.8 338.1,423.4 341.6,424 344.7,424.7 347.5,425.5 349.7,426.6 351,427.8 350.9,429.2" fill="#1c5882"/>
<polygon points="291.5,643.4 292,646.7 294.7,649.9 299.6,652.8 306.3,655.1 314.5,656.8 323.7,657.6 333.2,657.6 342.5,656.8 351.1,655.1 358.3,652.8 363.8,650 367.3,646.8 368.5,643.4 367,633.6 365.7,636.7 362.4,639.8 357.1,642.4 350.1,644.6 341.9,646.2 332.9,646.9 323.8,646.9 315,646.1 307.1,644.6 300.6,642.4 295.9,639.7 293.3,636.7 292.8,633.6" fill="url(#s)"/>
<g fill="#389ae0"><polygon points="627.9,650.2 628.4,641.7 629.2,638.9 631.6,636.3 635.5,634.1 640.8,632.3 647.2,631.1 654.5,630.3 662.4,630.2 670.4,630.6 678.4,631.6 686,633.2 692.9,635.2 698.8,637.6 703.3,640.3 706.4,643.2 707.9,646.1 707.1,654.7 706.8,657.7 704.8,660.4 701,662.8 695.7,664.7 689.1,666.2 681.5,667 673.3,667.1 664.7,666.6 656.4,665.5 648.5,663.8 641.6,661.6 635.8,659 631.5,656.2 628.9,653.2"/><polygon points="631.7,643.8 644.8,436.6 645.5,435 647.7,433.5 651.4,432.3 656.5,431.3 662.6,430.5 669.6,430.1 677.2,430 685,430.3 692.7,430.9 700.1,431.7 706.7,432.9 712.4,434.3 716.9,435.8 720,437.4 721.4,439.1 704.3,647.9 704,650.5 702.1,653 698.6,655.2 693.8,656.9 687.7,658.2 680.8,659 673.2,659.1 665.5,658.7 657.8,657.6 650.6,656.1 644.3,654.1 639,651.8 635.1,649.2 632.6,646.5"/></g>
<polygon points="644.8,436.5 649,440.8 653.1,442.5 657.2,443.6 661.4,444.4 665.5,445 669.7,445.5 673.8,445.8 678,446 682.1,446.1 666.4,667.2 662.2,667 657.9,666.6 653.6,666.1 649.3,665.2 645,664.1 640.7,662.6 636.5,660.6 632.2,657.7 627.9,650" fill="url(#ma)"/>
<polygon points="682.1,446.1 684.9,446.1 687.6,446.1 690.4,445.9 693.2,445.8 695.9,445.6 698.7,445.3 701.4,445 704.2,444.5 707,444 692.1,663.5 689.3,664.3 686.4,665.1 683.6,665.7 680.7,666.2 677.9,666.6 675,666.9 672.1,667 669.3,667.1 666.4,667.2" fill="url(#la)"/>
<polygon points="644.8,436.5 645.6,438.4 646.4,439.2 647.1,439.8 647.9,440.2 648.7,440.7 649.4,441 650.2,441.4 651,441.7 651.7,442 635,659.8 634.2,659.3 633.4,658.7 632.6,658.1 631.9,657.5 631.1,656.7 630.3,655.8 629.5,654.8 628.7,653.4 627.9,650" fill="#1c5882"/>
<polygon points="716.9,435.8 712.4,434.3 706.7,432.9 700.1,431.7 692.7,430.9 685,430.3 677.2,430 669.6,430.1 662.6,430.5 656.5,431.3 651.4,432.3 647.7,433.5 645.5,435 644.8,436.6 645.9,438.3 648.5,439.9 652.8,441.5 658.4,443 665.2,444.2 672.8,445.2 680.9,445.8 689.1,446.1 697,446 704.4,445.6 710.7,444.8 715.7,443.7 719.3,442.3 721.2,440.8 721.4,439.1 720,437.4" fill="#1c5882" stroke="#1c5882" stroke-width="1"/>
<polygon points="714.2,436 710.1,434.5 704.9,433.3 698.7,432.2 692,431.4 684.8,430.9 677.6,430.6 670.7,430.7 664.2,431.1 658.5,431.8 653.9,432.7 650.5,433.9 648.4,435.2 647.9,436.7 648.8,438.2 651.3,439.8 655.2,441.2 660.4,442.6 666.6,443.7 673.6,444.6 681,445.2 688.6,445.4 695.9,445.4 702.6,444.9 708.4,444.2 713.1,443.2 716.4,441.9 718.1,440.5 718.4,439 717,437.5" fill="#389ae0"/>
<polygon points="715.8,440.4 714.1,441.7 711.1,442.8 706.7,443.8 701.3,444.5 695,444.8 688.2,444.9 681.2,444.7 674.2,444.1 667.7,443.3 661.9,442.3 657,441 653.4,439.7 651.1,438.2 650.2,436.8 650.7,428.7 651.2,427.4 653.1,426.1 656.3,425.1 660.6,424.2 666,423.6 672,423.3 678.5,423.2 685.3,423.4 692,423.9 698.3,424.6 704.1,425.6 709,426.7 712.8,428 715.5,429.4 716.7,430.8 716,438.9" fill="#389ae0"/>
<polygon points="712.8,428 709,426.7 704.1,425.6 698.3,424.6 692,423.9 685.3,423.4 678.5,423.2 672,423.3 666,423.6 660.6,424.2 656.3,425.1 653.1,426.1 651.2,427.4 650.7,428.7 651.6,430.1 653.9,431.5 657.6,432.9 662.4,434.1 668.3,435.1 674.8,435.9 681.8,436.4 688.8,436.7 695.7,436.6 701.9,436.2 707.4,435.5 711.7,434.6 714.8,433.5 716.5,432.2 716.7,430.8 715.5,429.4" fill="#1c5882" stroke="#1c5882" stroke-width="1"/>
<polygon points="710.2,428.2 706.7,427 702.2,426 697,425.1 691.2,424.4 685.1,424 679,423.8 673.1,423.8 667.6,424.2 662.7,424.7 658.8,425.5 655.9,426.5 654.2,427.6 653.7,428.8 654.6,430.1 656.7,431.4 660,432.6 664.4,433.7 669.7,434.6 675.6,435.3 681.9,435.8 688.3,436 694.5,435.9 700.2,435.6 705.1,435 709.1,434.2 711.9,433.2 713.4,432 713.6,430.7 712.5,429.5" fill="#389ae0"/>
<polygon points="707.3,427.2 701.5,425.8 694.4,424.8 686.5,424.1 678.4,423.8 670.8,423.9 664,424.5 658.7,425.5 655.1,426.8 653.7,428.4 654.5,430.1 657.5,431.7 662.6,433.3 669.2,434.5 665.7,432.7 665,431.2 666.3,429.9 668.7,429.1 671.3,428.5 673.7,428.1 675.8,427.7 678,427.3 681,426.8 685.3,426.4 691.3,426.2 698.9,426.4" fill="url(#mb)"/>
<polygon points="710.7,433.8 713.3,432.5 714.1,431.1 713.1,429.6 710.4,428.1 706.2,426.8 700.7,425.6 694.3,424.7 687.3,424 680.2,423.7 673.2,423.8 666.8,424.1 661.3,424.8 657.1,425.8 663.9,425.4 670.6,425.4 676.5,425.7 681.5,426.1 685.6,426.6 689.1,427.1 692.4,427.6 695.9,428.1 699.6,428.8 703.5,429.7 707.1,430.8 709.8,432.2" fill="#1c5882"/>
<polygon points="628.7,648.5 631.5,651.9 636.4,655.2 643.2,658.1 651.6,660.5 661,662.1 670.8,663 680.4,663 689.3,662.1 696.8,660.5 702.6,658.1 706.2,655.2 707.6,651.9 706.6,648.5 705.8,638.6 706.8,641.8 705.5,644.9 702,647.6 696.5,649.9 689.2,651.4 680.7,652.2 671.4,652.2 662,651.4 652.9,649.8 644.9,647.6 638.3,644.9 633.6,641.8 630.9,638.6" fill="url(#s)"/>
<g fill="#389ae0"><polygon points="260.3,642.4 262.5,645.2 263.1,648.1 263.4,656.8 262.2,659.8 259.4,662.8 254.9,665.6 249,668 242,670 234.1,671.5 225.7,672.3 217.2,672.5 209,672 201.6,670.8 195.1,669.1 190,666.8 186.5,664.2 184.6,661.3 184.2,652.6 184.1,649.6 185.7,646.6 188.9,643.8 193.6,641.2 199.5,638.9 206.4,637.1 214,635.8 222,635.1 230.1,634.9 237.8,635.4 245,636.4 251.3,638 256.5,640"/><polygon points="253,440.6 259.8,650.2 258.7,652.9 256.1,655.6 252,658.2 246.6,660.4 240.2,662.2 232.9,663.5 225.3,664.2 217.5,664.4 210.1,663.9 203.2,662.9 197.3,661.3 192.7,659.3 189.4,656.9 187.7,654.3 176.9,443.1 176.9,441.4 178.5,439.7 181.6,438 186.2,436.6 191.9,435.3 198.6,434.2 206,433.5 213.7,433.1 221.4,433 228.9,433.2 235.8,433.8 241.9,434.7 246.8,435.9 250.4,437.3 252.5,438.9"/></g>
<polygon points="176.7,442.4 180.9,445.6 185.2,446.8 189.4,447.6 193.7,448.2 197.9,448.7 202.2,449 206.4,449.2 210.6,449.4 214.9,449.4 223.9,672.5 219.5,672.4 215.1,672.2 210.7,671.8 206.3,671.2 201.9,670.4 197.5,669.3 193.1,667.9 188.8,665.8 184.4,660.1" fill="url(#na)"/>
<polygon points="252.5,438.9 250.4,437.3 246.8,435.9 241.9,434.7 235.8,433.8 228.9,433.2 221.4,433 213.7,433.1 206,433.5 198.6,434.2 191.9,435.3 186.2,436.6 181.6,438 178.5,439.7 176.9,441.4 176.9,443.1 178.7,444.7 182.1,446.2 187,447.5 193.1,448.5 200.3,449.1 208.2,449.4 216.4,449.3 224.5,448.8 232.2,448 239,446.9 244.7,445.5 249.1,444 251.9,442.3 253,440.6" fill="#1c5882" stroke="#1c5882" stroke-width="1"/>
<polygon points="249.6,439 247.7,437.6 244.3,436.3 239.8,435.2 234.2,434.4 227.8,433.8 220.9,433.6 213.8,433.7 206.7,434.1 199.9,434.8 193.7,435.7 188.4,436.9 184.2,438.3 181.3,439.8 179.9,441.4 180,442.9 181.6,444.4 184.7,445.8 189.2,447 194.9,447.9 201.5,448.5 208.8,448.7 216.3,448.6 223.7,448.2 230.8,447.4 237,446.4 242.3,445.2 246.3,443.7 248.9,442.2 250,440.6" fill="#389ae0"/>
<polygon points="183.8,444.2 182.3,442.8 182.2,441.3 181.8,433.2 183.1,431.7 185.8,430.4 189.8,429.1 194.7,428 200.5,427.1 206.9,426.5 213.5,426.2 220.2,426.1 226.7,426.3 232.7,426.8 237.9,427.6 242.2,428.5 245.3,429.7 247.1,431 247.5,432.5 247.7,440.6 246.7,442.1 244.3,443.5 240.5,444.9 235.6,446.1 229.7,447 223.1,447.7 216.2,448.1 209.2,448.2 202.4,447.9 196.3,447.4 191,446.6 186.8,445.5" fill="#389ae0"/>
<polygon points="247.1,431 245.3,429.7 242.2,428.5 237.9,427.6 232.7,426.8 226.7,426.3 220.2,426.1 213.5,426.2 206.9,426.5 200.5,427.1 194.7,428 189.8,429.1 185.8,430.4 183.1,431.7 181.8,433.2 181.9,434.6 183.4,436 186.4,437.2 190.6,438.3 195.9,439.1 202.1,439.6 208.8,439.9 215.9,439.8 222.8,439.4 229.4,438.7 235.3,437.8 240.2,436.6 244,435.3 246.4,433.9 247.5,432.5" fill="#1c5882" stroke="#1c5882" stroke-width="1"/>
<polygon points="244.1,431.2 242.5,430 239.6,428.9 235.8,428 231,427.4 225.6,426.9 219.7,426.7 213.6,426.8 207.6,427.1 201.8,427.7 196.5,428.5 192,429.4 188.5,430.6 186.1,431.8 184.8,433.1 184.9,434.4 186.3,435.7 189,436.8 192.8,437.7 197.7,438.5 203.3,439 209.4,439.2 215.7,439.1 222,438.8 228,438.2 233.3,437.3 237.8,436.3 241.2,435.1 243.5,433.8 244.4,432.5" fill="#389ae0"/>
<polygon points="242.8,430.2 239.1,428.8 233.7,427.7 226.9,427 219.2,426.7 211.2,426.9 203.4,427.5 196.4,428.5 190.7,429.8 186.8,431.4 184.9,433.1 185.2,434.8 187.8,436.4 192.5,437.7 191.8,435.8 193.6,434.2 197,433 200.8,432.1 204.4,431.5 207.4,431.1 210.2,430.7 213.2,430.2 216.9,429.7 222,429.3 228.3,429.1 235.6,429.4" fill="url(#mb)"/>
<polygon points="235.6,436.9 240.2,435.6 243.3,434.2 244.8,432.6 244.4,431.1 242.4,429.8 238.7,428.6 233.8,427.6 227.8,427 221,426.6 213.9,426.7 206.8,427.1 200.2,427.8 194.3,428.8 201.2,428.1 207.9,427.8 214,427.8 219.5,428.1 224.3,428.5 228.4,429.1 231.9,429.8 234.9,430.6 237.4,431.5 239,432.7 239.5,434 238.4,435.4" fill="#1c5882"/>
<polygon points="184.5,653.5 184.3,657 186.4,660.3 190.8,663.3 197.1,665.7 205.2,667.4 214.3,668.3 224.1,668.3 233.8,667.4 242.8,665.7 250.7,663.3 256.9,660.4 261.1,657 263.1,653.5 261.2,643.5 259.3,646.8 255.3,650 249.3,652.7 241.7,655 233,656.6 223.6,657.4 214.3,657.4 205.4,656.6 197.7,655 191.6,652.7 187.4,649.9 185.4,646.8 185.6,643.5" fill="url(#s)"/>
<g fill="#389ae0"><polygon points="527.2,660.5 527.5,651.8 528.8,648.9 531.8,646.3 536.3,644 542.1,642.1 548.9,640.8 556.4,640 564.4,639.9 572.6,640.4 580.6,641.4 588,643 594.6,645.1 600.1,647.6 604.2,650.4 606.8,653.4 607.7,656.4 607.2,665.2 606.3,668.3 603.6,671.1 599.3,673.6 593.5,675.6 586.5,677.1 578.6,678 570.1,678.1 561.5,677.6 553.2,676.4 545.5,674.7 538.9,672.4 533.5,669.7 529.7,666.7 527.6,663.6"/><polygon points="530.8,654 538.8,443 540,441.3 542.8,439.8 547.1,438.4 552.6,437.4 559.1,436.6 566.4,436.2 574.2,436.1 582,436.4 589.7,437 596.9,437.9 603.3,439.1 608.7,440.5 612.7,442.1 615.2,443.8 616.1,445.6 604.1,658.3 603.2,661 600.8,663.6 596.9,665.8 591.6,667.7 585.1,669 577.9,669.8 570.2,669.9 562.3,669.5 554.7,668.4 547.7,666.8 541.6,664.7 536.7,662.3 533.2,659.6 531.2,656.8"/></g>
<polygon points="538.7,443.5 542.6,447.6 546.4,449.1 550.3,450.2 554.1,451 558,451.6 561.8,452.1 565.6,452.4 569.5,452.7 573.3,452.8 562.9,678.1 558.9,677.8 554.9,677.4 551,676.7 547,675.9 543,674.8 539.1,673.4 535.1,671.5 531.1,668.8 527.1,661.6" fill="url(#ma)"/>
<polygon points="573.3,452.8 575.9,452.9 578.5,452.9 581,452.9 583.6,452.8 586.1,452.7 588.7,452.5 591.3,452.3 593.8,452 596.4,451.7 586.7,676 584.1,676.6 581.4,677.1 578.8,677.4 576.1,677.7 573.5,678 570.8,678.1 568.2,678.2 565.5,678.1 562.9,678.1" fill="url(#la)"/>
<polygon points="538.7,443.5 539.3,445.2 540,445.8 540.6,446.4 541.2,446.8 541.8,447.2 542.4,447.5 543,447.8 543.6,448.1 544.2,448.3 532.7,670 532.1,669.6 531.5,669.1 530.9,668.6 530.2,668 529.6,667.3 529,666.6 528.4,665.7 527.8,664.5 527.1,661.6" fill="#1c5882"/>
<polygon points="612.7,442.1 608.7,440.5 603.3,439.1 596.9,437.9 589.7,437 582,436.4 574.2,436.1 566.4,436.2 559.1,436.6 552.6,437.4 547.1,438.4 542.8,439.8 540,441.3 538.8,443 539.2,444.7 541.4,446.4 545.1,448.1 550.3,449.6 556.8,450.9 564.2,451.9 572.3,452.6 580.6,452.9 588.7,452.8 596.4,452.3 603.1,451.5 608.7,450.3 612.8,448.9 615.3,447.3 616.1,445.6 615.2,443.8" fill="#1c5882" stroke="#1c5882" stroke-width="1"/>
<polygon points="609.9,442.3 606.2,440.8 601.3,439.5 595.4,438.4 588.8,437.5 581.7,437 574.4,436.7 567.3,436.8 560.6,437.2 554.5,437.9 549.4,438.9 545.5,440.1 542.9,441.5 541.8,443.1 542.3,444.7 544.2,446.3 547.7,447.8 552.5,449.2 558.5,450.4 565.3,451.3 572.7,451.9 580.3,452.2 587.8,452.1 594.8,451.7 601,450.9 606.1,449.8 609.9,448.5 612.2,447.1 613,445.5 612.2,443.9" fill="#389ae0"/>
<polygon points="611.1,437.1 610.7,445.4 609.9,446.9 607.8,448.3 604.2,449.5 599.4,450.4 593.6,451.2 587.1,451.6 580.1,451.6 573,451.4 566.1,450.8 559.7,450 554.2,448.9 549.7,447.6 546.4,446.1 544.6,444.6 544.2,443.1 544.5,434.9 545.5,433.5 547.9,432.2 551.6,431.1 556.3,430.2 562,429.6 568.3,429.2 575,429.2 581.8,429.4 588.4,429.9 594.6,430.7 600.2,431.7 604.8,432.9 608.2,434.2 610.4,435.7" fill="#389ae0"/>
<polygon points="608.2,434.2 604.8,432.9 600.2,431.7 594.6,430.7 588.4,429.9 581.8,429.4 575,429.2 568.3,429.2 562,429.6 556.3,430.2 551.6,431.1 547.9,432.2 545.5,433.5 544.5,434.9 544.9,436.4 546.8,437.9 550,439.2 554.5,440.5 560.1,441.6 566.5,442.4 573.4,443 580.5,443.2 587.5,443.1 594.1,442.7 599.9,442.1 604.7,441.1 608.2,439.9 610.4,438.6 611.1,437.1 610.4,435.7" fill="#1c5882" stroke="#1c5882" stroke-width="1"/>
<polygon points="605.4,434.4 602.3,433.2 598.1,432.1 593.1,431.1 587.4,430.4 581.4,430 575.2,429.8 569.1,429.8 563.4,430.2 558.3,430.8 554,431.6 550.6,432.6 548.5,433.7 547.5,435 547.9,436.4 549.6,437.7 552.6,438.9 556.7,440.1 561.7,441.1 567.5,441.8 573.8,442.3 580.2,442.5 586.6,442.5 592.5,442.1 597.8,441.5 602.1,440.6 605.4,439.6 607.3,438.3 608,437 607.4,435.7" fill="#389ae0"/>
<polygon points="602.9,433.4 597.4,431.9 590.6,430.8 582.8,430.1 574.7,429.8 566.8,430 559.6,430.6 553.8,431.6 549.7,433 547.7,434.6 547.9,436.3 550.4,438.1 554.9,439.7 561.3,441 558.3,439.1 558.2,437.5 560,436.2 562.8,435.3 565.7,434.7 568.2,434.3 570.5,433.9 572.9,433.4 576.2,432.9 580.7,432.5 586.9,432.3 594.6,432.5" fill="url(#mb)"/>
<polygon points="603.9,440.2 607,438.9 608.3,437.4 607.9,435.9 605.7,434.3 601.9,432.9 596.7,431.7 590.5,430.7 583.6,430 576.4,429.7 569.3,429.8 562.6,430.2 556.8,430.9 552.1,431.9 559,431.4 565.7,431.3 571.7,431.6 576.9,432 581.2,432.5 585,433 588.5,433.6 592,434.2 595.6,434.9 599.1,435.9 602,437.1 603.9,438.6" fill="#1c5882"/>
<polygon points="527.5,658.8 529.6,662.4 534,665.8 540.4,668.8 548.4,671.3 557.6,673 567.5,673.9 577.3,673.9 586.6,673 594.6,671.3 600.9,668.8 605.2,665.8 607.2,662.4 606.9,658.9 605.9,648.7 606.2,652.1 604.3,655.3 600.1,658.2 594,660.5 586.3,662.1 577.4,663 568,663 558.5,662.1 549.6,660.5 541.9,658.1 535.7,655.3 531.5,652.1 529.4,648.7" fill="url(#s)"/>
<g fill="#389ae0"><polygon points="503.3,667.2 503,676.1 501.5,679.3 498.2,682.3 493.3,684.9 487,687 479.5,688.6 471.3,689.4 462.6,689.6 453.9,689.1 445.7,687.8 438.2,686 431.9,683.6 427,680.8 423.7,677.7 422.1,674.5 422.2,665.6 422.5,662.4 424.4,659.4 428,656.6 433,654.2 439.3,652.3 446.5,650.9 454.4,650.1 462.6,650 470.8,650.5 478.7,651.5 486,653.2 492.3,655.4 497.4,658 501,660.9 503,664"/><polygon points="506.2,452.3 499.7,669.1 498.3,671.9 495.3,674.6 490.8,677 485,678.9 478.2,680.3 470.7,681.1 462.7,681.2 454.8,680.7 447.2,679.6 440.4,678 434.6,675.8 430.1,673.3 427.1,670.5 425.7,667.6 428,451.4 428.1,449.6 430,447.8 433.4,446.3 438.3,444.9 444.3,443.8 451.3,443 458.9,442.5 466.8,442.4 474.7,442.7 482.4,443.3 489.4,444.3 495.5,445.5 500.4,447 504,448.7 505.9,450.5"/></g>
<polygon points="427.8,450.9 431.4,454.7 435,456.1 438.5,457.1 442.1,457.9 445.6,458.5 449.2,459 452.7,459.3 456.3,459.6 459.8,459.8 455.1,689.4 451.4,689 447.8,688.5 444.1,687.9 440.4,687 436.7,686 433.1,684.6 429.4,682.8 425.7,680.3 422,673.7" fill="url(#ma)"/>
<polygon points="459.8,459.8 462.2,459.9 464.6,460 467,460 469.3,460 471.7,459.9 474.1,459.8 476.4,459.7 478.8,459.6 481.2,459.4 477.2,688.6 474.7,688.9 472.3,689.2 469.8,689.4 467.4,689.5 464.9,689.6 462.5,689.6 460,689.6 457.6,689.5 455.1,689.4" fill="url(#la)"/>
<polygon points="427.8,450.9 428.3,452.3 428.7,452.8 429.1,453.3 429.6,453.6 430,453.9 430.5,454.2 430.9,454.4 431.3,454.7 431.8,454.9 426.1,680.6 425.6,680.3 425.2,679.8 424.7,679.4 424.3,678.9 423.8,678.4 423.4,677.8 422.9,677 422.5,676 422,673.7" fill="#1c5882"/>
<polygon points="504,448.7 500.4,447 495.5,445.5 489.4,444.3 482.4,443.3 474.7,442.7 466.8,442.4 458.9,442.5 451.3,443 444.3,443.8 438.3,444.9 433.4,446.3 430,447.8 428.1,449.6 428,451.4 429.5,453.2 432.7,455 437.5,456.6 443.6,457.9 450.8,459 458.8,459.7 467.2,460 475.6,459.9 483.6,459.4 490.8,458.5 496.9,457.3 501.6,455.8 504.7,454.1 506.2,452.3 505.9,450.5" fill="#1c5882" stroke="#1c5882" stroke-width="1"/>
<polygon points="501,448.9 497.8,447.3 493.3,446 487.6,444.8 481.2,443.9 474.1,443.4 466.8,443.1 459.5,443.2 452.5,443.6 446.1,444.3 440.5,445.4 436.1,446.6 432.9,448.1 431.2,449.7 431.1,451.4 432.5,453.1 435.5,454.7 439.9,456.1 445.5,457.3 452.1,458.3 459.5,458.9 467.2,459.2 474.9,459.1 482.2,458.7 488.8,457.9 494.4,456.8 498.8,455.4 501.7,453.9 503.1,452.2 502.8,450.5" fill="#389ae0"/>
<polygon points="433.7,441.4 435.2,439.9 438.2,438.6 442.4,437.4 447.6,436.5 453.6,435.8 460.1,435.5 467,435.4 473.9,435.6 480.5,436.1 486.5,436.9 491.8,438 496,439.3 499.1,440.7 500.7,442.2 500.9,443.7 500.7,452.1 499.4,453.7 496.7,455.1 492.6,456.4 487.4,457.4 481.2,458.2 474.3,458.6 467.2,458.7 460,458.4 453.1,457.8 446.9,456.9 441.7,455.8 437.6,454.4 434.8,452.9 433.4,451.3 433.5,442.9" fill="#389ae0"/>
<polygon points="499.1,440.7 496,439.3 491.8,438 486.5,436.9 480.5,436.1 473.9,435.6 467,435.4 460.1,435.5 453.6,435.8 447.6,436.5 442.4,437.4 438.2,438.6 435.2,439.9 433.7,441.4 433.5,442.9 434.9,444.5 437.7,445.9 441.8,447.2 447.1,448.4 453.3,449.2 460.1,449.8 467.3,450.1 474.5,450 481.4,449.6 487.6,448.8 492.8,447.8 496.9,446.6 499.6,445.2 500.9,443.7 500.7,442.2" fill="#1c5882" stroke="#1c5882" stroke-width="1"/>
<polygon points="496.1,440.8 493.4,439.6 489.5,438.4 484.8,437.5 479.3,436.7 473.3,436.2 467,436 460.8,436.1 454.8,436.4 449.3,437.1 444.6,437.9 440.8,439 438.2,440.2 436.8,441.5 436.6,442.9 437.9,444.3 440.4,445.6 444.2,446.8 449,447.8 454.6,448.6 460.8,449.1 467.3,449.4 473.8,449.3 480,448.9 485.7,448.3 490.4,447.3 494.1,446.2 496.6,445 497.8,443.6 497.6,442.2" fill="#389ae0"/>
<polygon points="493.9,439.8 488.9,438.3 482.3,437.1 474.6,436.3 466.4,436 458.3,436.2 450.8,436.9 444.5,437.9 439.8,439.4 437.1,441 436.6,442.9 438.5,444.7 442.5,446.3 448.5,447.7 446.2,445.8 446.7,444.1 449,442.7 452.2,441.8 455.4,441.2 458.2,440.7 460.7,440.3 463.3,439.8 466.8,439.3 471.6,438.8 478,438.6 485.7,438.9" fill="url(#mb)"/>
<polygon points="492.4,447 496.1,445.6 498,444 498.1,442.4 496.4,440.8 493.1,439.3 488.3,438 482.3,437 475.5,436.3 468.3,436 461,436 454,436.4 447.8,437.2 442.6,438.3 449.6,437.7 456.4,437.5 462.5,437.7 467.9,438.1 472.5,438.6 476.5,439.1 480.2,439.8 483.7,440.5 487.1,441.3 490.1,442.4 492.4,443.7 493.3,445.3" fill="#1c5882"/>
<polygon points="422.1,669.6 423.5,673.3 427.3,676.8 433.2,680 440.9,682.5 449.9,684.4 459.8,685.3 469.9,685.3 479.5,684.4 488,682.6 495,680 500,676.9 502.7,673.3 503.1,669.6 501.8,659.3 501.4,662.8 498.8,666.2 494,669.1 487.3,671.5 479,673.2 469.8,674.1 460.1,674.1 450.6,673.2 441.9,671.5 434.5,669.1 428.8,666.1 425.2,662.8 423.8,659.3" fill="url(#s)"/>
<g fill="#389ae0"><polygon points="312.1,676.7 313,673.4 315.6,670.3 319.9,667.4 325.5,664.9 332.3,662.9 340,661.5 348.2,660.6 356.6,660.5 364.9,661 372.7,662.1 379.8,663.8 385.8,666.1 390.4,668.8 393.5,671.8 394.9,675.1 394.9,684.1 394.5,687.5 392.3,690.8 388.3,693.9 382.8,696.6 375.9,698.9 367.9,700.5 359.3,701.4 350.4,701.6 341.7,701 333.5,699.7 326.3,697.8 320.3,695.3 315.9,692.4 313.2,689.2 312.3,685.8"/><polygon points="315.7,678.8 311.7,458.4 312.6,456.5 315.2,454.7 319.3,453 324.7,451.6 331.3,450.4 338.7,449.6 346.6,449.2 354.8,449.1 362.8,449.3 370.4,450 377.2,451 383,452.3 387.4,453.9 390.4,455.6 391.8,457.5 391.4,677.3 391,680.3 388.9,683.3 385.3,686.1 380.2,688.5 373.9,690.5 366.7,692 358.8,692.8 350.6,693 342.6,692.5 335.2,691.3 328.5,689.6 323.1,687.3 319,684.7 316.5,681.8"/></g>
<polygon points="311.7,458.7 315,462.2 318.3,463.5 321.6,464.4 324.9,465.1 328.2,465.7 331.4,466.2 334.7,466.5 338,466.8 341.3,467.1 342.8,701.1 339.4,700.7 336,700.1 332.6,699.5 329.2,698.7 325.8,697.6 322.4,696.4 319.1,694.7 315.7,692.4 312.3,686.4" fill="url(#ma)"/>
<polygon points="341.3,467.1 343.5,467.2 345.7,467.3 347.9,467.3 350,467.4 352.2,467.4 354.4,467.4 356.6,467.3 358.8,467.2 361,467.1 363.1,701.2 360.9,701.4 358.6,701.5 356.3,701.6 354.1,701.6 351.8,701.6 349.6,701.5 347.3,701.4 345,701.3 342.8,701.1" fill="url(#la)"/>
<polygon points="311.7,458.7 312,459.7 312.3,460.1 312.5,460.5 312.8,460.7 313.1,460.9 313.3,461.2 313.6,461.3 313.9,461.5 314.1,461.7 314.8,691.6 314.5,691.3 314.2,691 313.9,690.6 313.7,690.3 313.4,689.9 313.1,689.4 312.8,688.8 312.6,688.1 312.3,686.4" fill="#1c5882"/>
<polygon points="390.4,455.6 387.4,453.9 383,452.3 377.2,451 370.4,450 362.8,449.3 354.8,449.1 346.6,449.2 338.7,449.6 331.3,450.4 324.7,451.6 319.3,453 315.2,454.7 312.6,456.5 311.7,458.4 312.6,460.3 315.2,462.1 319.5,463.8 325.3,465.2 332.2,466.3 340.2,467 348.6,467.4 357.2,467.3 365.6,466.7 373.3,465.8 380,464.6 385.3,463 389.2,461.3 391.3,459.4 391.8,457.5" fill="#1c5882" stroke="#1c5882" stroke-width="1"/>
<polygon points="387.4,455.8 384.6,454.2 380.5,452.7 375.2,451.5 368.9,450.6 361.9,450 354.6,449.7 347,449.8 339.7,450.3 332.9,451 326.8,452.1 321.8,453.4 318,454.9 315.7,456.6 314.9,458.4 315.7,460.1 318.2,461.8 322.1,463.3 327.4,464.6 333.8,465.6 341.1,466.3 348.9,466.6 356.8,466.5 364.5,466 371.5,465.2 377.7,464 382.6,462.6 386.2,461 388.2,459.3 388.6,457.5" fill="#389ae0"/>
<polygon points="386.2,449 386.2,457.5 385.8,459.2 383.9,460.8 380.6,462.3 375.9,463.6 370.2,464.7 363.6,465.5 356.5,465.9 349.1,466 341.8,465.7 335,465.1 329,464.2 324.1,463 320.4,461.6 318.1,460 317.3,458.4 317.2,449.8 317.9,448.2 320.1,446.6 323.6,445.2 328.3,444 334,443.1 340.4,442.4 347.3,442 354.3,441.9 361.2,442.1 367.8,442.7 373.7,443.5 378.6,444.6 382.5,445.9 385,447.4" fill="#389ae0"/>
<polygon points="385,447.4 382.5,445.9 378.6,444.6 373.7,443.5 367.8,442.7 361.2,442.1 354.3,441.9 347.3,442 340.4,442.4 334,443.1 328.3,444 323.6,445.2 320.1,446.6 317.9,448.2 317.2,449.8 318,451.4 320.3,452.9 324,454.3 328.9,455.4 334.9,456.4 341.7,457 349,457.2 356.4,457.1 363.6,456.7 370.2,455.9 375.9,454.9 380.6,453.6 383.9,452.1 385.8,450.6 386.2,449" fill="#1c5882" stroke="#1c5882" stroke-width="1"/>
<polygon points="382,447.6 379.7,446.2 376.2,445 371.7,444 366.3,443.3 360.4,442.8 354.1,442.6 347.7,442.6 341.4,443 335.6,443.6 330.5,444.5 326.2,445.6 323,446.9 321,448.3 320.4,449.7 321.1,451.2 323.2,452.6 326.6,453.8 331.1,454.9 336.5,455.7 342.7,456.2 349.3,456.5 355.9,456.4 362.4,456 368.4,455.3 373.7,454.4 377.9,453.2 380.9,451.9 382.6,450.5 383,449" fill="#389ae0"/>
<polygon points="380.1,446.5 375.6,444.9 369.3,443.7 361.8,442.9 353.5,442.6 345.1,442.7 337.2,443.4 330.3,444.5 325,446 321.6,447.8 320.4,449.7 321.6,451.6 325.1,453.3 330.7,454.8 329,452.7 330.2,450.9 333.1,449.6 336.7,448.6 340.2,447.9 343.2,447.5 346,447 348.9,446.5 352.6,445.9 357.7,445.5 364.4,445.3 372.1,445.5" fill="url(#mb)"/>
<polygon points="375.9,454 380.1,452.5 382.7,450.9 383.4,449.2 382.3,447.5 379.5,446 375,444.6 369.3,443.6 362.7,442.8 355.4,442.5 347.9,442.5 340.6,443 334,443.8 328.3,444.9 335.4,444.2 342.4,444 348.8,444.1 354.4,444.4 359.2,444.9 363.5,445.5 367.3,446.2 370.7,447 373.8,448 376.3,449.2 377.8,450.6 377.8,452.3" fill="#1c5882"/>
<polygon points="312.2,680.8 312.9,684.6 316,688.3 321.4,691.6 328.7,694.3 337.6,696.2 347.5,697.2 357.8,697.2 367.8,696.2 376.9,694.3 384.5,691.7 390.3,688.4 393.8,684.7 395,680.8 393.3,670.3 392.2,674 388.8,677.5 383.3,680.6 375.9,683.1 367.1,684.9 357.5,685.8 347.6,685.8 338.1,684.9 329.6,683.1 322.5,680.5 317.3,677.4 314.4,674 313.7,670.3" fill="url(#s)"/>
<g fill="#389ae0"><polygon points="278.9,680.1 281.4,683.3 282.2,686.7 282.4,695.9 281.3,699.4 278.3,702.9 273.6,706.1 267.4,708.9 259.9,711.2 251.4,712.9 242.4,713.9 233.3,714.1 224.5,713.5 216.4,712.1 209.4,710.1 203.8,707.5 199.9,704.5 197.8,701.1 197.6,697.6 197.2,688.4 198.8,684.9 202.2,681.6 207.2,678.6 213.5,676 220.9,673.9 229,672.4 237.5,671.6 246.2,671.4 254.5,671.9 262.3,673.1 269.1,674.9 274.7,677.3"/><polygon points="272.4,464.8 278.6,688.9 277.5,692.1 274.8,695.2 270.5,698.1 264.8,700.6 257.9,702.7 250.2,704.3 241.9,705.1 233.6,705.3 225.5,704.8 218.1,703.6 211.7,701.7 206.7,699.4 203.1,696.6 201.1,693.6 200.9,690.4 190.2,465.7 191.8,463.8 195.1,461.8 200,460.1 206.1,458.6 213.3,457.4 221.2,456.5 229.5,456.1 237.8,456 245.9,456.3 253.4,456.9 260,458 265.4,459.3 269.4,461 271.7,462.8"/></g>
<polygon points="190,466.9 194.6,470.7 199.2,472.1 203.8,473 208.3,473.7 212.9,474.3 217.5,474.6 222.1,474.9 226.7,475.1 231.2,475.1 240,714.1 235.3,714 230.5,713.7 225.8,713.3 221.1,712.6 216.4,711.7 211.7,710.4 207,708.7 202.2,706.3 197.5,699.7" fill="url(#na)"/>
<polygon points="271.7,462.8 269.4,461 265.4,459.3 260,458 253.4,456.9 245.9,456.3 237.8,456 229.5,456.1 221.2,456.5 213.3,457.4 206.1,458.6 200,460.1 195.1,461.8 191.8,463.8 190.2,465.7 190.3,467.7 192.3,469.7 196,471.4 201.4,472.9 208.1,474 216,474.8 224.5,475.1 233.3,475 242.1,474.4 250.3,473.5 257.6,472.2 263.7,470.6 268.3,468.7 271.2,466.8 272.4,464.8" fill="#1c5882" stroke="#1c5882" stroke-width="1"/>
<polygon points="268.6,463 266.4,461.3 262.7,459.8 257.7,458.5 251.7,457.6 244.8,457 237.3,456.7 229.6,456.8 222,457.2 214.7,458 208.1,459.1 202.4,460.5 198,462.1 194.9,463.9 193.5,465.7 193.6,467.5 195.5,469.3 198.9,470.9 203.8,472.2 210,473.3 217.2,474 225.1,474.3 233.2,474.2 241.2,473.7 248.8,472.8 255.5,471.6 261.1,470.1 265.4,468.5 268.1,466.6 269.1,464.8" fill="#389ae0"/>
<polygon points="197.8,469 196.1,467.4 195.9,465.7 195.5,456.9 196.9,455.2 199.8,453.6 203.9,452.2 209.2,450.9 215.4,449.9 222.2,449.2 229.4,448.7 236.6,448.7 243.6,448.9 250.1,449.5 255.8,450.4 260.4,451.5 263.8,452.9 265.9,454.4 266.4,456.1 266.7,464.8 265.6,466.6 263.1,468.2 259.1,469.8 253.9,471.2 247.6,472.3 240.5,473.1 233.1,473.6 225.5,473.7 218.2,473.4 211.5,472.8 205.7,471.8 201.1,470.5" fill="#389ae0"/>
<polygon points="265.9,454.4 263.8,452.9 260.4,451.5 255.8,450.4 250.1,449.5 243.6,448.9 236.6,448.7 229.4,448.7 222.2,449.2 215.4,449.9 209.2,450.9 203.9,452.2 199.8,453.6 196.9,455.2 195.5,456.9 195.7,458.6 197.4,460.2 200.7,461.6 205.3,462.9 211.1,463.8 217.8,464.4 225.1,464.7 232.7,464.6 240.2,464.2 247.3,463.4 253.6,462.3 258.9,460.9 262.8,459.4 265.4,457.8 266.4,456.1" fill="#1c5882" stroke="#1c5882" stroke-width="1"/>
<polygon points="262.7,454.6 260.8,453.2 257.7,452 253.5,450.9 248.4,450.1 242.5,449.6 236.1,449.4 229.5,449.5 223,449.8 216.8,450.5 211.2,451.4 206.4,452.6 202.6,453.9 200.1,455.3 198.8,456.9 199,458.4 200.6,459.8 203.5,461.1 207.7,462.3 213,463.1 219,463.7 225.7,463.9 232.6,463.9 239.4,463.4 245.8,462.7 251.5,461.7 256.2,460.5 259.9,459.1 262.2,457.6 263.1,456.1" fill="#389ae0"/>
<polygon points="261.2,453.4 257.2,451.8 251.2,450.5 243.8,449.7 235.5,449.4 226.9,449.6 218.5,450.3 211,451.4 205,453 200.8,454.8 198.8,456.8 199.3,458.8 202.2,460.6 207.3,462.2 206.5,460 208.4,458.1 211.9,456.7 216,455.7 219.8,455 223.1,454.5 226.1,454 229.2,453.5 233.3,452.9 238.7,452.4 245.6,452.2 253.4,452.5" fill="url(#mb)"/>
<polygon points="253.9,461.3 258.8,459.8 262.1,458.1 263.5,456.3 263,454.6 260.7,452.9 256.7,451.5 251.3,450.4 244.8,449.7 237.5,449.3 229.8,449.4 222.2,449.8 215.1,450.6 208.8,451.8 216.2,451 223.4,450.7 230,450.7 236,451 241.1,451.5 245.6,452.1 249.4,452.9 252.7,453.9 255.4,455 257.3,456.3 257.9,457.9 256.9,459.6" fill="#1c5882"/>
<polygon points="197.7,692.5 197.5,696.5 199.9,700.4 204.7,703.8 211.6,706.6 220.3,708.6 230.2,709.6 240.7,709.6 251.1,708.6 260.8,706.6 269.2,703.8 275.8,700.4 280.2,696.5 282.2,692.5 280.2,681.8 278.3,685.6 274,689.3 267.7,692.5 259.6,695.1 250.3,697 240.2,698 230.1,698 220.6,697 212.3,695.1 205.6,692.5 201,689.2 198.7,685.6 198.8,681.8" fill="url(#s)"/>
</svg>
</div>
<div class="abs" id="divider"></div>
<div class="abs" id="slice"></div>

<!-- title bar -->
<div class="abs" id="titlebar"></div>
<div class="abs" id="titleline"></div>
<div class="abs" id="toolbar"></div>
<div class="abs" id="toolline"></div>
<svg class="abs" style="left:0;top:0" width="26" height="25" viewBox="0 0 26 25">
  <rect x="0" y="0" width="1.4" height="1.8" fill="#d8d8d8"/>
  <rect x="4.8" y="4.7" width="16.4" height="16.6" rx="1.3" fill="#fff"/>
  <g fill="#0086d2"><path d="M13.05 6.6 L19.4 12.95 L13.05 19.3 L6.7 12.95 Z"/><circle cx="13.05" cy="8.3" r="2.25"/><circle cx="13.05" cy="17.6" r="2.25"/><circle cx="8.4" cy="12.95" r="2.25"/><circle cx="17.7" cy="12.95" r="2.25"/><rect x="10.9" y="8.2" width="4.3" height="9.5"/><rect x="8.3" y="10.8" width="9.5" height="4.3"/></g>
</svg>
<div class="abs" id="apptitle">CHITUBOX V1.9.4</div>
<div class="abs" id="doctitle">untitled*</div>
<div class="abs" id="trypro">Try CHITUBOX Pro</div>
<!-- window controls -->
<svg class="abs" style="left:1725px;top:0" width="188" height="26" viewBox="0 0 188 26" fill="none" stroke="#fff" stroke-width="1.2">
  <circle cx="14.5" cy="9.2" r="3.4"/>
  <path d="M8.6 19.3 c0-4 2.6-6.3 5.9-6.3 s5.9 2.3 5.9 6.3 z" stroke-linejoin="round"/>
  <path d="M48 12.5 h15"/>
  <rect x="104.5" y="8.5" width="10" height="10.5" rx="1.5"/>
  <path d="M107.5 8.3 v-1.3 a1.5 1.5 0 0 1 1.5 -1.5 h7.6 a1.5 1.5 0 0 1 1.5 1.5 v7.5 a1.5 1.5 0 0 1 -1.5 1.5 h-1.3"/>
  <path d="M160.5 5.5 l14 14 M174.5 5.5 l-14 14"/>
</svg>
<!-- toolbar buttons -->
<div class="abs" id="btn1"></div>
<div class="abs" id="btn2"></div>
<div class="abs" id="btn2b"></div>
<svg class="abs" style="left:51.5px;top:39.7px" width="20" height="18" viewBox="0 0 20 18" fill="none" stroke="#d8ecfb" stroke-width="0.9">
  <path d="M1.6 4.1 L8.6 0.9 L15.6 4.1 L8.6 7.3 Z"/>
  <path d="M1.9 7.9 L4 6.9 L6 7.9 L4 8.9 Z"/>
  <path d="M1.6 11.6 L8.3 14.8 M2.4 11.9 l3 -1.3 l3.2 1.5"/>
  <circle cx="13" cy="11.2" r="3.6" fill="#b2daf8" stroke="none"/>
  <path d="M11.6 9.2 L13 11.4 L14.6 9.2 M13 11.4 V14" stroke="#7cc2f3" stroke-width="0.9"/>
</svg>
<svg class="abs" style="left:131px;top:39.6px" width="36" height="20" viewBox="0 0 36 20" fill="none" stroke="#e2e2e2" stroke-width="0.9">
  <path d="M1.9 4 L8.9 0.7 L15.9 4 L8.9 7.3 Z"/>
  <path d="M2.2 7.9 L4.6 6.8 L7 7.9 L4.6 9 Z"/>
  <path d="M1.9 11.5 L8.5 14.6 M2.7 11.8 l3 -1.3 l3.2 1.5"/>
  <path d="M10.7 9.7 h6 M12.6 9.5 v-1 h2.2 v1 M11.5 10 v5 h4.4 v-5 M13 11 v3 M14.4 11 v3"/>
  <path d="M28 11.5 l3.8 4 l3.8 -4" stroke="#fff" stroke-width="1.1"/>
</svg>

<!-- view cube + nav -->
<svg class="abs" style="left:610px;top:95px" width="150" height="155" viewBox="610 95 150 155" fill="none" stroke="#4fa8e8" stroke-width="1.1">
  <path d="M623 111.8 L633 101.4 L643 111.8 H640.5 V120.4 H635.6 V113.2 H630.4 V120.4 H625.5 V111.8 Z" stroke-linejoin="miter"/>
  <path d="M721.3 113.8 C723.4 109.1 727 107.1 730.6 107.1 C734.2 107.1 737.8 109.1 739.9 113.8 C737.8 118.5 734.2 120.5 730.6 120.5 C727 120.5 723.4 118.5 721.3 113.8 Z"/>
  <circle cx="730.6" cy="113.8" r="2.9" stroke-width="1.5"/>
  <path d="M671.5 129.5 L682.5 121.5 L693.5 129.5 H689.2 V135.3 H675.8 V129.5 Z"/>
  <path d="M671.5 232.5 L682.5 240.5 L693.5 232.5 H689.2 V226.7 H675.8 V232.5 Z"/>
  <path d="M631.5 169.5 L623.5 180.5 L631.5 191.5 V187.2 H637.3 V173.8 H631.5 Z"/>
  <path d="M734.5 169.5 L742.5 180.5 L734.5 191.5 V187.2 H728.7 V173.8 H734.5 Z"/>
  <!-- cube -->
  <path d="M654.1 153.2 L699.2 149 L711.6 164.9 L666.5 168.7 Z" fill="#8a8888" stroke="none"/>
  <path d="M654.1 153.2 L666.5 168.7 L666.5 212.3 L654.1 197.2 Z" fill="#848282" stroke="none"/>
  <path d="M666.5 168.7 L711.6 164.9 L711.6 208.3 L666.5 212.3 Z" fill="#878585" stroke="none"/>
  <g shape-rendering="crispEdges" stroke-width="1">
  <path d="M654.1 153.2 L666.5 168.7 L666.5 212.3"/>
  <path d="M658 152.8 L699.2 149" stroke-dasharray="2.5 8"/>
  <path d="M699.2 149 L711.6 164.9" stroke-dasharray="2.5 3.5"/>
  <path d="M666.5 168.7 L711.6 164.9" stroke-dasharray="10 1.5"/>
  <path d="M711.6 164.9 L711.6 208.3"/>
  <path d="M711.6 208.3 L666.5 212.3" stroke-dasharray="4 3 7 4"/>
  <path d="M654.1 197.2 L666.5 212.3" stroke-dasharray="2.5 3"/>
  <g stroke="#fff" transform="rotate(-3 675 193.8)">
    <path d="M675.5 194 V185.8 H681.4 M675.5 189.5 H680.4"/>
    <path d="M682.5 194 V188.3 M682.5 189.8 Q683 188.4 685.6 188.5"/>
    <ellipse cx="689.2" cy="191.2" rx="2.5" ry="2.8"/>
    <path d="M693.8 194 V188.3 M693.8 190 Q694.6 188.4 696.4 188.4 Q698.4 188.4 698.4 190.5 V194"/>
    <path d="M701.5 186 V192.4 Q701.5 193.9 703.6 193.7 M699.6 188.5 H703.6"/>
  </g>
  <path d="M675.5 157 v3 h1.5 M675.5 157 h1.5 M679 158.8 l1.5 1 M682 158.4 l1.5 1.2 M685.5 157.5 l2 1.5 M689 157 h3 v1.5" stroke="#fff"/>
  <path d="M660.5 180.5 v2 M659 183 l3 1.5 M660.5 185.5 v1 M661.5 187.5 v1 M662.5 189.5 v1" stroke="#fff"/>
  </g>
</svg>

<!-- layer tools -->
<svg class="abs" style="left:1574px;top:136px" width="40" height="90" viewBox="1574 136 40 90" fill="none" stroke="#fff" stroke-width="1.1">
  <path d="M1578.6 146 L1591.6 140.3 L1604.8 146 L1591.6 151.8 Z" fill="#4fb0f0"/>
  <path d="M1578.6 153.5 L1586.6 150.9 L1591.6 153.2 L1596.8 150.9 L1604.8 153.5 L1591.6 158.4 Z" fill="#4fb0f0" stroke-width="1"/>
  <path d="M1578.8 160.4 L1586.2 158.4 L1585.8 164 Z" fill="#4fb0f0" stroke-width="1"/>
  <ellipse cx="1599" cy="163.6" rx="9.4" ry="7" fill="#5b5b5b" stroke="none"/>
  <ellipse cx="1599" cy="163.6" rx="8.3" ry="5.9" fill="#4fb0f0" stroke-width="1.2"/>
  <circle cx="1599" cy="163.6" r="2.5" fill="#4fb0f0" stroke-width="1.3"/>
  <path d="M1578.6 197.6 L1591.6 191.6 L1604.8 197.6 L1591.6 203.6 Z"/>
  <path d="M1579 204.8 L1583.6 202.6 L1588 204.8 L1583.6 207.1 Z" fill="#4fb0f0" stroke-width="0.9"/>
  <path d="M1588.2 213.4 L1583.4 211.2 L1578.8 213.6 L1588 218"/>
  <ellipse cx="1598.8" cy="213.4" rx="9.4" ry="7" fill="#5b5b5b" stroke="none"/>
  <ellipse cx="1598.8" cy="213.4" rx="8.3" ry="5.9" fill="#989898" stroke="#a9a9a9" stroke-width="1"/>
  <circle cx="1598.8" cy="213.4" r="2.6" fill="#808080" stroke="#8d8d8d" stroke-width="1.2"/>
  <path d="M1593.2 205.6 L1606.8 219.3" stroke="#5b5b5b" stroke-width="1"/>
  <path d="M1592.3 206.1 L1606 219.8" stroke="#d4d4d4" stroke-width="1"/>
</svg>
<div class="abs" id="spin"><span>591</span>
  <svg class="abs" style="left:37px;top:3px" width="10" height="24" viewBox="0 0 10 24"><path d="M1.2 7.2 L5 -0.3 L8.8 7.2 Z M1.2 14.8 L5 22.4 L8.8 14.8 Z" fill="#000"/></svg>
</div>
<svg class="abs" style="left:1583px;top:275.5px" width="16" height="12" viewBox="0 0 16 12" fill="none" stroke="#fff" stroke-width="1.2"><path d="M2 2.5 L8 8.3 L14 2.5"/></svg>
<div class="abs" id="track"></div>
<div class="abs handle" style="top:302px"></div>
<div class="abs handle" style="top:915px"></div>
<svg class="abs" style="left:1583px;top:944px" width="16" height="12" viewBox="0 0 16 12" fill="none" stroke="#fff" stroke-width="1.2"><path d="M2 9 L8 3.2 L14 9"/></svg>
<div class="abs frac" style="top:455px">&#188;</div>
<div class="abs frac" style="top:606px">&#189;</div>
<div class="abs frac" style="top:757px">&#190;</div>

<!-- right panel -->
<div class="abs" id="rightpanel"></div>
<div class="abs" id="rightline"></div>
<div class="abs info" style="top:213px;letter-spacing:2.6px">Machine:</div>
<div class="abs info" style="top:213px;left:1756.2px;letter-spacing:-0.12px">CREALITY LD-002H</div>
<div class="abs info" style="top:249px;letter-spacing:1.85px">Resin:</div>
<div class="abs info" style="top:249px;left:1726.4px;letter-spacing:0.8px">normal</div>
<div class="abs info" style="top:285px;letter-spacing:2.8px">Volume:</div>
<div class="abs info" style="top:285px;left:1746.9px;letter-spacing:0.2px">40.23&nbsp; (ml)</div>
<div class="abs info" style="top:321px;letter-spacing:2.75px">Weight:</div>
<div class="abs info" style="top:321px;left:1742.7px;letter-spacing:0.2px">44.2&nbsp; (g)</div>
<div class="abs info" style="top:357px;letter-spacing:2.0px">Price:</div>
<div class="abs info" style="top:357px;left:1723px;letter-spacing:0.0px">1.32744</div>
<div class="abs info" style="top:393px;letter-spacing:2.25px">Time:</div>
<div class="abs info" style="top:393px;left:1722.4px;letter-spacing:0.37px">-2147483648h-14m-8s</div>
<div class="abs" id="save">Save</div>
<div class="abs" id="back">Back</div>

<!-- bottom panel -->
<div class="abs" id="bottompanel"></div>
<svg class="abs" style="left:790px;top:940px" width="60" height="31" viewBox="790 940 60 31">
  <path d="M795.3 970 L804.6 946.5 Q805.6 943.8 808.4 943.8 L832 943.8 Q834.8 943.8 835.8 946.5 L845 970 Z" fill="#474747"/>
  <path d="M811 952.5 L828 952.5 L819.5 962.8 Z" fill="#b2d0f5"/>
</svg>
<div class="abs" id="bottomblue"></div>
<div class="abs" id="bottomdark"></div>
<div class="abs lbl" style="left:515px;top:1013px;letter-spacing:0.06px">Exposure Time(s):</div>
<div class="abs lbl" style="left:515px;top:1043px;letter-spacing:0.42px">Lift Distance(mm)</div>
<div class="abs lbl" style="left:515px;top:1073px;letter-spacing:0.49px">Lift Speed(mm/min):</div>
<div class="abs lbl" style="left:845px;top:1013px;letter-spacing:0.24px">Bottom Exposure Time(s):</div>
<div class="abs lbl" style="left:845px;top:1043px;letter-spacing:0.39px">Layer Height(mm)</div>
<div class="abs lbl" style="left:845px;top:1073px;letter-spacing:0.39px">Retract Speed(mm/min):</div>
<div class="abs inp" style="left:715px;top:1007px"><span>3.5</span></div>
<div class="abs inp" style="left:715px;top:1037px"><span>5</span></div>
<div class="abs inp" style="left:715px;top:1067px"><span>65</span></div>
<div class="abs inp" style="left:1045px;top:1007px"><span>50</span></div>
<div class="abs inp" style="left:1045px;top:1037px;color:#7e7e7e;border-color:#bdbdbd"><span>0.05</span></div>
<div class="abs inp" style="left:1045px;top:1067px"><span>150</span></div>
</body>
</html>
